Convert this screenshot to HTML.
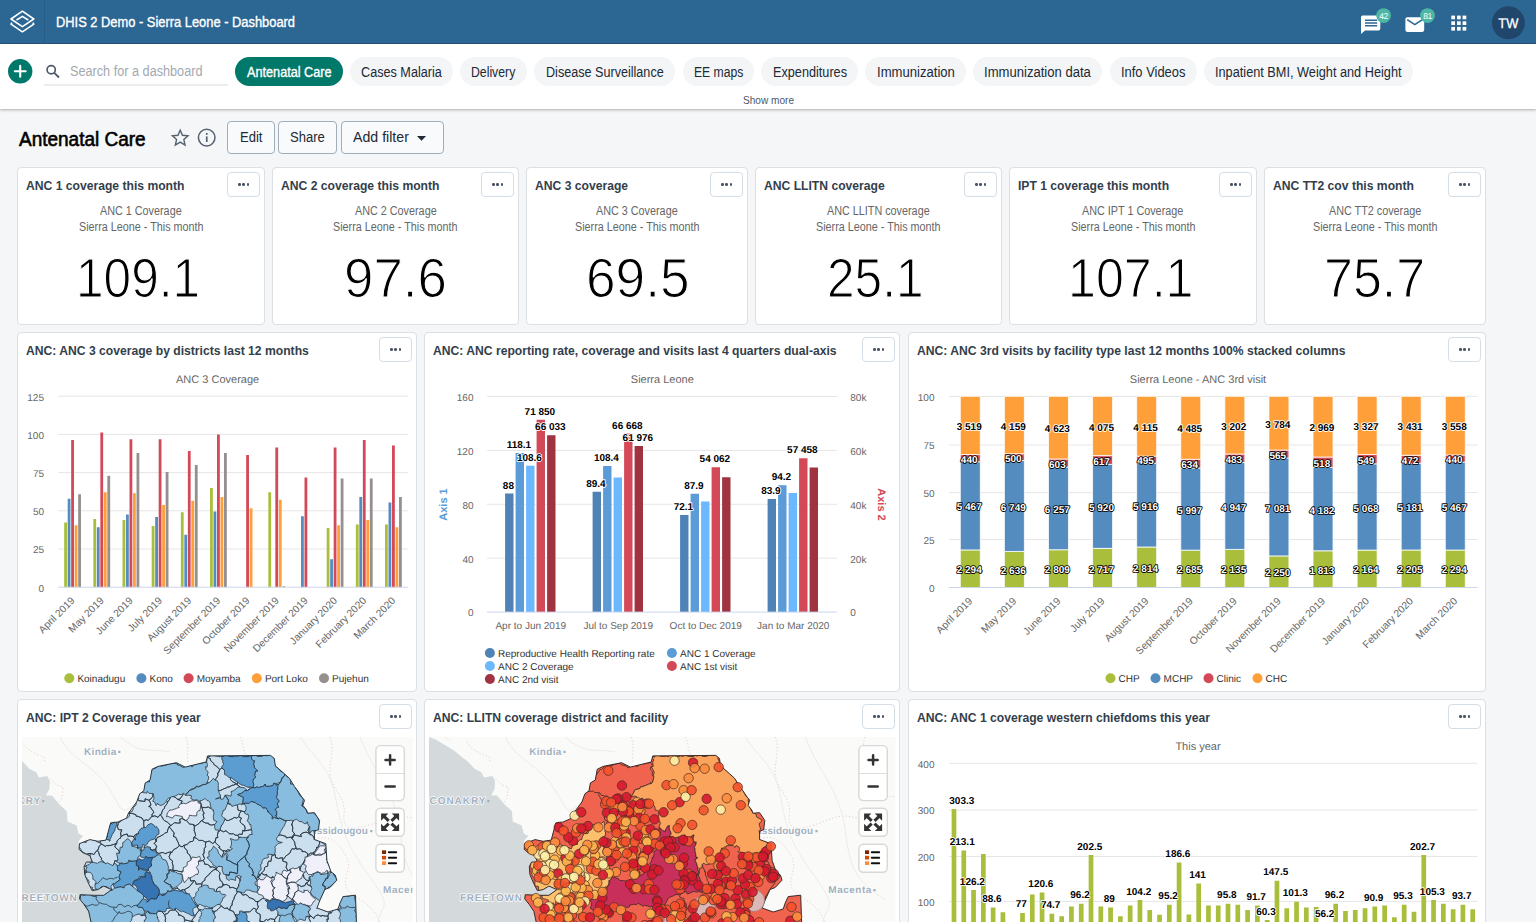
<!DOCTYPE html>
<html lang="en"><head><meta charset="utf-8"><title>DHIS 2 Demo - Sierra Leone - Dashboard</title>
<style>
*{box-sizing:border-box;margin:0;padding:0}
html,body{width:1536px;height:922px;overflow:hidden;background:#f4f6f8;font-family:"Liberation Sans",sans-serif;color:#212934}
.abs{position:absolute}
.t{position:absolute;white-space:nowrap;line-height:1;transform-origin:0 0;display:block}
#hdr{position:absolute;left:0;top:0;width:1536px;height:44px;background:#2c6693;border-bottom:1px solid #28587f;color:#fff}
#hdr .logo{position:absolute;left:0;top:0;width:45px;height:43px;border-right:1px solid #285d87}
#bar{position:absolute;left:0;top:44px;width:1536px;height:65px;background:#fff;box-shadow:0 1px 3px rgba(0,0,0,0.28),0 0 1px rgba(0,0,0,0.2)}
.chip{position:absolute;top:57px;height:29px;border-radius:15px;background:#f3f5f7}
.chip.sel{background:#00796b}
.btn{position:absolute;top:121px;height:33px;border:1px solid #a0adba;border-radius:4px;background:#f9fafb}
.card{position:absolute;background:#fff;border:1px solid #dcdfe3;border-radius:4px;overflow:hidden}
.mb{position:absolute;width:33px;height:25px;border:1px solid #d5dde5;border-radius:4px;background:#fff}
.mb i{position:absolute;top:10.3px;width:2.4px;height:2.4px;border-radius:1.2px;background:#4a5565}
svg{position:absolute;overflow:visible}
svg text{font-family:"Liberation Sans",sans-serif;text-rendering:geometricPrecision}
</style></head>
<body>
<header>
<div id="hdr"><div class="logo"></div></div>
<svg width="44" height="44" viewBox="0 0 44 44" style="left:0;top:0">
  <g fill="none" stroke="#fff" stroke-width="1.6" stroke-linejoin="round" stroke-linecap="round">
    <path d="M22.4 11.2 L33.8 19 L22.4 26.6 L11 19 Z"/>
    <path d="M17 19.7 L22.4 16.4 L27.8 19.7"/>
    <path d="M11.6 23.2 L11 24.1 L22.4 31.8 L33.8 24.1 L33.2 23.2"/>
  </g>
</svg>
<span class="t" style="left:55.6px;top:14.95px;font-size:14px;color:#fff;transform:scaleX(0.9196);-webkit-text-stroke:0.35px;">DHIS 2 Demo - Sierra Leone - Dashboard</span>
<svg width="196" height="44" viewBox="1340 0 196 44" style="left:1340px;top:0">
  <path d="M1362.6 15.6 h16 a1.7 1.7 0 0 1 1.7 1.7 v11.4 a1.7 1.7 0 0 1 -1.7 1.7 h-13.6 l-4 3.6 v-16.7 a1.7 1.7 0 0 1 1.6 -1.7 z" fill="#fff"/>
  <g stroke="#2c6693" stroke-width="1.5"><path d="M1365 20.2h12.2M1365 23h12.2M1365 25.8h12.2"/></g>
  <circle cx="1383.6" cy="15.6" r="7.4" fill="#4db6a4"/>
  <text x="1383.6" y="18.7" font-size="8.5" fill="#fff" text-anchor="middle" letter-spacing="-0.4">42</text>
  <rect x="1405.4" y="17.2" width="18.8" height="14.7" rx="1.8" fill="#fff"/>
  <path d="M1407.2 19.6 L1414.8 24.6 L1422.4 19.6" fill="none" stroke="#2c6693" stroke-width="1.7"/>
  <circle cx="1427.5" cy="15.6" r="7.4" fill="#4db6a4"/>
  <text x="1427.5" y="18.7" font-size="8.5" fill="#fff" text-anchor="middle" letter-spacing="-0.4">81</text>
  <g fill="#fff">
    <rect x="1451.3" y="15.6" width="3.7" height="3.7"/><rect x="1457" y="15.6" width="3.7" height="3.7"/><rect x="1462.6" y="15.6" width="3.7" height="3.7"/>
    <rect x="1451.3" y="21.3" width="3.7" height="3.7"/><rect x="1457" y="21.3" width="3.7" height="3.7"/><rect x="1462.6" y="21.3" width="3.7" height="3.7"/>
    <rect x="1451.3" y="26.9" width="3.7" height="3.7"/><rect x="1457" y="26.9" width="3.7" height="3.7"/><rect x="1462.6" y="26.9" width="3.7" height="3.7"/>
  </g>
  <circle cx="1508.4" cy="22.8" r="16.5" fill="#20476b"/>
  <text x="1498.3" y="27.8" font-size="14" fill="#fff" stroke="#fff" stroke-width="0.3" textLength="20" lengthAdjust="spacingAndGlyphs">TW</text>
</svg>
</header>
<nav>
<div id="bar"></div>
<svg width="230" height="65" viewBox="0 44 230 65" style="left:0;top:44px">
  <circle cx="20.2" cy="71.3" r="12.2" fill="#00796b"/>
  <path d="M20.2 65.9v10.8M14.8 71.3h10.8" stroke="#fff" stroke-width="2.1" stroke-linecap="round" fill="none"/>
  <circle cx="51.2" cy="69.7" r="4.1" fill="none" stroke="#4f5b6b" stroke-width="1.7"/>
  <path d="M54.3 72.8 L59 77.5" stroke="#4f5b6b" stroke-width="1.9" fill="none"/>
  <rect x="44" y="83.9" width="184" height="2" fill="#ececec"/>
</svg>
<span class="t" style="left:70px;top:64.25px;font-size:14px;color:#a3a9b0;transform:scaleX(0.9055);">Search for a dashboard</span>
<div class="chip sel" style="left:235px;width:108px"></div>
<span class="t" style="left:246.7px;top:64.65px;font-size:14px;color:#fff;transform:scaleX(0.9057);-webkit-text-stroke:0.35px;">Antenatal Care</span>
<div class="chip" style="left:350px;width:103px"></div>
<span class="t" style="left:361.1px;top:64.65px;font-size:14px;color:#212934;transform:scaleX(0.9030);">Cases Malaria</span>
<div class="chip" style="left:460px;width:67px"></div>
<span class="t" style="left:471.35px;top:64.65px;font-size:14px;color:#212934;transform:scaleX(0.8759);">Delivery</span>
<div class="chip" style="left:534.4px;width:140.7px"></div>
<span class="t" style="left:545.9px;top:64.65px;font-size:14px;color:#212934;transform:scaleX(0.9003);">Disease Surveillance</span>
<div class="chip" style="left:682.6px;width:71.3px"></div>
<span class="t" style="left:693.55px;top:64.65px;font-size:14px;color:#212934;transform:scaleX(0.8695);">EE maps</span>
<div class="chip" style="left:761.4px;width:96.7px"></div>
<span class="t" style="left:772.75px;top:64.65px;font-size:14px;color:#212934;transform:scaleX(0.9055);">Expenditures</span>
<div class="chip" style="left:865.3px;width:100.3px"></div>
<span class="t" style="left:876.5px;top:64.65px;font-size:14px;color:#212934;transform:scaleX(0.9356);">Immunization</span>
<div class="chip" style="left:972.6px;width:129.7px"></div>
<span class="t" style="left:984px;top:64.65px;font-size:14px;color:#212934;transform:scaleX(0.9344);">Immunization data</span>
<div class="chip" style="left:1109.7px;width:87.2px"></div>
<span class="t" style="left:1121.1px;top:64.65px;font-size:14px;color:#212934;transform:scaleX(0.9227);">Info Videos</span>
<div class="chip" style="left:1204.1px;width:208.7px"></div>
<span class="t" style="left:1215.2px;top:64.65px;font-size:14px;color:#212934;transform:scaleX(0.9089);">Inpatient BMI, Weight and Height</span>
<span class="t" style="left:742.5px;top:95.19px;font-size:11px;color:#4a5768;transform:scaleX(0.9166);">Show more</span>
</nav>
<div class="titlebar">
<span class="t" style="left:18.8px;top:128.87px;font-size:20px;color:#000;transform:scaleX(0.9489);-webkit-text-stroke:0.6px #000;">Antenatal Care</span>
<svg width="60" height="32" viewBox="166 122 60 32" style="left:166px;top:122px">
  <path d="M180.2 130.2 l2.25 5.1 5.55 0.55 -4.15 3.7 1.2 5.45 -4.85 -2.85 -4.85 2.85 1.2 -5.45 -4.15 -3.7 5.55 -0.55 z" fill="none" stroke="#56616f" stroke-width="1.4" stroke-linejoin="miter"/>
  <circle cx="206.7" cy="137.6" r="8.3" fill="none" stroke="#56616f" stroke-width="1.5"/>
  <rect x="205.9" y="136.4" width="1.7" height="5.6" fill="#56616f"/>
  <rect x="205.9" y="133.0" width="1.7" height="1.8" fill="#56616f"/>
</svg>
<div class="btn" style="left:227px;width:48px"></div>
<span class="t" style="left:239.6px;top:130.35px;font-size:14px;color:#212934;transform:scaleX(0.9285);">Edit</span>
<div class="btn" style="left:278px;width:59px"></div>
<span class="t" style="left:290.2px;top:130.35px;font-size:14px;color:#212934;transform:scaleX(0.9315);">Share</span>
<div class="btn" style="left:341px;width:103px"></div>
<span class="t" style="left:353.1px;top:130.35px;font-size:14px;color:#212934;transform:scaleX(1.0118);">Add filter</span>
<svg width="10" height="6" viewBox="0 0 10 6" style="left:416.6px;top:135.7px"><path d="M0 0h9L4.5 4.7z" fill="#212934"/></svg>
</div>
<main>
<section>
<div class="card" style="left:17px;top:167px;width:248px;height:158px"></div>
<span class="t" style="left:25.6px;top:178.77px;font-size:13.5px;font-weight:bold;color:#333e4b;transform:scaleX(0.8990);">ANC 1 coverage this month</span>
<div class="mb" style="left:227px;top:172px"><i style="left:10.2px"></i><i style="left:14.4px"></i><i style="left:18.6px"></i></div>
<span class="t" style="left:100.18px;top:204.64px;font-size:12px;color:#666;transform:scaleX(0.9000);">ANC 1 Coverage</span>
<span class="t" style="left:78.7px;top:220.74px;font-size:12px;color:#666;transform:scaleX(0.8995);">Sierra Leone - This month</span>
<span class="t" style="left:75.69px;top:249.6px;font-size:56px;color:#000;transform:scaleX(0.8850);-webkit-text-stroke:1.2px #fff;">109.1</span>
</section>
<section>
<div class="card" style="left:272px;top:167px;width:247px;height:158px"></div>
<span class="t" style="left:280.6px;top:178.77px;font-size:13.5px;font-weight:bold;color:#333e4b;transform:scaleX(0.8990);">ANC 2 coverage this month</span>
<div class="mb" style="left:481px;top:172px"><i style="left:10.2px"></i><i style="left:14.4px"></i><i style="left:18.6px"></i></div>
<span class="t" style="left:354.68px;top:204.64px;font-size:12px;color:#666;transform:scaleX(0.9000);">ANC 2 Coverage</span>
<span class="t" style="left:333.2px;top:220.74px;font-size:12px;color:#666;transform:scaleX(0.8995);">Sierra Leone - This month</span>
<span class="t" style="left:344.03px;top:249.6px;font-size:56px;color:#000;transform:scaleX(0.9434);-webkit-text-stroke:1.2px #fff;">97.6</span>
</section>
<section>
<div class="card" style="left:526px;top:167px;width:222px;height:158px"></div>
<span class="t" style="left:534.6px;top:178.77px;font-size:13.5px;font-weight:bold;color:#333e4b;transform:scaleX(0.8990);">ANC 3 coverage</span>
<div class="mb" style="left:710px;top:172px"><i style="left:10.2px"></i><i style="left:14.4px"></i><i style="left:18.6px"></i></div>
<span class="t" style="left:596.18px;top:204.64px;font-size:12px;color:#666;transform:scaleX(0.9000);">ANC 3 Coverage</span>
<span class="t" style="left:574.7px;top:220.74px;font-size:12px;color:#666;transform:scaleX(0.8995);">Sierra Leone - This month</span>
<span class="t" style="left:586.22px;top:249.6px;font-size:56px;color:#000;transform:scaleX(0.9505);-webkit-text-stroke:1.2px #fff;">69.5</span>
</section>
<section>
<div class="card" style="left:755px;top:167px;width:247px;height:158px"></div>
<span class="t" style="left:763.6px;top:178.77px;font-size:13.5px;font-weight:bold;color:#333e4b;transform:scaleX(0.8990);">ANC LLITN coverage</span>
<div class="mb" style="left:964px;top:172px"><i style="left:10.2px"></i><i style="left:14.4px"></i><i style="left:18.6px"></i></div>
<span class="t" style="left:827.18px;top:204.64px;font-size:12px;color:#666;transform:scaleX(0.9000);">ANC LLITN coverage</span>
<span class="t" style="left:816.2px;top:220.74px;font-size:12px;color:#666;transform:scaleX(0.8995);">Sierra Leone - This month</span>
<span class="t" style="left:827.22px;top:249.6px;font-size:56px;color:#000;transform:scaleX(0.8850);-webkit-text-stroke:1.2px #fff;">25.1</span>
</section>
<section>
<div class="card" style="left:1009px;top:167px;width:248px;height:158px"></div>
<span class="t" style="left:1017.6px;top:178.77px;font-size:13.5px;font-weight:bold;color:#333e4b;transform:scaleX(0.8990);">IPT 1 coverage this month</span>
<div class="mb" style="left:1219px;top:172px"><i style="left:10.2px"></i><i style="left:14.4px"></i><i style="left:18.6px"></i></div>
<span class="t" style="left:1082.38px;top:204.64px;font-size:12px;color:#666;transform:scaleX(0.9000);">ANC IPT 1 Coverage</span>
<span class="t" style="left:1070.7px;top:220.74px;font-size:12px;color:#666;transform:scaleX(0.8995);">Sierra Leone - This month</span>
<span class="t" style="left:1067.54px;top:249.6px;font-size:56px;color:#000;transform:scaleX(0.8956);-webkit-text-stroke:1.2px #fff;">107.1</span>
</section>
<section>
<div class="card" style="left:1264px;top:167px;width:222px;height:158px"></div>
<span class="t" style="left:1272.6px;top:178.77px;font-size:13.5px;font-weight:bold;color:#333e4b;transform:scaleX(0.8990);">ANC TT2 cov this month</span>
<div class="mb" style="left:1448px;top:172px"><i style="left:10.2px"></i><i style="left:14.4px"></i><i style="left:18.6px"></i></div>
<span class="t" style="left:1328.88px;top:204.64px;font-size:12px;color:#666;transform:scaleX(0.9000);">ANC TT2 coverage</span>
<span class="t" style="left:1312.7px;top:220.74px;font-size:12px;color:#666;transform:scaleX(0.8995);">Sierra Leone - This month</span>
<span class="t" style="left:1323.55px;top:249.6px;font-size:56px;color:#000;transform:scaleX(0.9275);-webkit-text-stroke:1.2px #fff;">75.7</span>
</section>
<section><div class="card" style="left:17px;top:332px;width:400px;height:360px"></div>
<span class="t" style="left:25.6px;top:343.77px;font-size:13.5px;font-weight:bold;color:#333e4b;transform:scaleX(0.8990);">ANC: ANC 3 coverage by districts last 12 months</span>
<div class="mb" style="left:379px;top:337px"><i style="left:10.2px"></i><i style="left:14.4px"></i><i style="left:18.6px"></i></div>
<svg width="1536" height="922" viewBox="0 0 1536 922" style="left:0;top:0">
<text x="217.6" y="383" font-size="11" fill="#666666" text-anchor="middle">ANC 3 Coverage</text>
<path d="M58 549H408M58 510.8H408M58 472.6H408M58 434.4H408M58 396.2H408" stroke="#e6e6e6" stroke-width="1" fill="none"/>
<g font-size="10" fill="#666666" text-anchor="end"><text x="44" y="591.5">0</text><text x="44" y="553.3">25</text><text x="44" y="515.1">50</text><text x="44" y="476.9">75</text><text x="44" y="438.7">100</text><text x="44" y="400.5">125</text></g>
<path d="M64.18 587.2v-64.63h2.8v64.63zM93.35 587.2v-68.15h2.8v68.15zM122.52 587.2v-67.23h2.8v67.23zM151.68 587.2v-61.12h2.8v61.12zM180.85 587.2v-74.87h2.8v74.87zM210.02 587.2v-99.17h2.8v99.17zM268.35 587.2v-94.89h2.8v94.89zM326.68 587.2v-59.13h2.8v59.13zM355.85 587.2v-62.65h2.8v62.65zM385.02 587.2v-62.65h2.8v62.65z" fill="#a9be3b"/>
<path d="M67.68 587.2v-88.47h2.8v88.47zM96.85 587.2v-59.9h2.8v59.9zM126.02 587.2v-72.73h2.8v72.73zM155.18 587.2v-70.14h2.8v70.14zM184.35 587.2v-52.41h2.8v52.41zM213.52 587.2v-75.79h2.8v75.79zM301.02 587.2v-71.05h2.8v71.05zM330.18 587.2v-27.96h2.8v27.96zM359.35 587.2v-90.15h2.8v90.15zM388.52 587.2v-84.65h2.8v84.65z" fill="#558cc0"/>
<path d="M71.18 587.2v-147.15h2.8v147.15zM100.35 587.2v-154.79h2.8v154.79zM129.52 587.2v-148.06h2.8v148.06zM158.68 587.2v-148.06h2.8v148.06zM187.85 587.2v-136.14h2.8v136.14zM217.02 587.2v-152.65h2.8v152.65zM246.18 587.2v-132.32h2.8v132.32zM275.35 587.2v-139.81h2.8v139.81zM304.52 587.2v-109.71h2.8v109.71zM333.68 587.2v-139.81h2.8v139.81zM362.85 587.2v-147.15h2.8v147.15zM392.02 587.2v-141.65h2.8v141.65z" fill="#d34957"/>
<path d="M74.68 587.2v-62.04h2.8v62.04zM103.85 587.2v-94.89h2.8v94.89zM133.02 587.2v-93.97h2.8v93.97zM162.18 587.2v-82.21h2.8v82.21zM191.35 587.2v-86.48h2.8v86.48zM220.52 587.2v-90.15h2.8v90.15zM249.68 587.2v-79h2.8v79zM278.85 587.2v-87.55h2.8v87.55zM337.18 587.2v-62.04h2.8v62.04zM366.35 587.2v-67.23h2.8v67.23zM395.52 587.2v-60.05h2.8v60.05z" fill="#ff9f3a"/>
<path d="M78.18 587.2v-93.06h2.8v93.06zM107.35 587.2v-111.39h2.8v111.39zM136.52 587.2v-134.31h2.8v134.31zM165.68 587.2v-115.21h2.8v115.21zM194.85 587.2v-122.24h2.8v122.24zM224.02 587.2v-134.31h2.8v134.31zM282.35 587.2v-0.92h2.8v0.92zM340.68 587.2v-108.79h2.8v108.79zM369.85 587.2v-108.79h2.8v108.79zM399.02 587.2v-90.15h2.8v90.15z" fill="#968f8f"/>
<path d="M58 587.2H408" stroke="#ccd6eb" stroke-width="1" fill="none"/>
<g font-size="10.25" fill="#666666" text-anchor="end"><text transform="translate(75.28 601.3) rotate(-45)">April 2019</text><text transform="translate(104.45 601.3) rotate(-45)">May 2019</text><text transform="translate(133.62 601.3) rotate(-45)">June 2019</text><text transform="translate(162.78 601.3) rotate(-45)">July 2019</text><text transform="translate(191.95 601.3) rotate(-45)">August 2019</text><text transform="translate(221.12 601.3) rotate(-45)">September 2019</text><text transform="translate(250.28 601.3) rotate(-45)">October 2019</text><text transform="translate(279.45 601.3) rotate(-45)">November 2019</text><text transform="translate(308.62 601.3) rotate(-45)">December 2019</text><text transform="translate(337.78 601.3) rotate(-45)">January 2020</text><text transform="translate(366.95 601.3) rotate(-45)">February 2020</text><text transform="translate(396.12 601.3) rotate(-45)">March 2020</text></g>
<g font-size="10" fill="#333333"><circle cx="69.3" cy="678.2" r="5" fill="#a9be3b"/><text x="77.4" y="682.1">Koinadugu</text><circle cx="141.4" cy="678.2" r="5" fill="#558cc0"/><text x="149.5" y="682.1">Kono</text><circle cx="188.6" cy="678.2" r="5" fill="#d34957"/><text x="196.7" y="682.1">Moyamba</text><circle cx="256.8" cy="678.2" r="5" fill="#ff9f3a"/><text x="264.9" y="682.1">Port Loko</text><circle cx="324" cy="678.2" r="5" fill="#968f8f"/><text x="332.1" y="682.1">Pujehun</text></g>
</svg></section>
<section><div class="card" style="left:424px;top:332px;width:476px;height:360px"></div>
<span class="t" style="left:432.6px;top:343.77px;font-size:13.5px;font-weight:bold;color:#333e4b;transform:scaleX(0.8990);">ANC: ANC reporting rate, coverage and visits last 4 quarters dual-axis</span>
<div class="mb" style="left:862px;top:337px"><i style="left:10.2px"></i><i style="left:14.4px"></i><i style="left:18.6px"></i></div>
<svg width="1536" height="922" viewBox="0 0 1536 922" style="left:0;top:0">
<text x="662.3" y="383" font-size="11" fill="#666666" text-anchor="middle">Sierra Leone</text>
<path d="M487 558.2H837M487 504.3H837M487 450.4H837M487 396.5H837" stroke="#e6e6e6" stroke-width="1" fill="none"/>
<g font-size="10" fill="#666666" text-anchor="end"><text x="473.5" y="616.4">0</text><text x="473.5" y="562.5">40</text><text x="473.5" y="508.6">80</text><text x="473.5" y="454.7">120</text><text x="473.5" y="400.8">160</text></g>
<g font-size="10" fill="#666666" text-anchor="start"><text x="850.3" y="616.4">0</text><text x="850.3" y="562.5">20k</text><text x="850.3" y="508.6">40k</text><text x="850.3" y="454.7">60k</text><text x="850.3" y="400.8">80k</text></g>
<path d="M505.1 612.1v-118.58h8.4v118.58zM592.6 612.1v-120.47h8.4v120.47zM680.1 612.1v-97.15h8.4v97.15zM767.6 612.1v-113.06h8.4v113.06z" fill="#4f83b6"/>
<path d="M515.6 612.1v-159.14h8.4v159.14zM603.1 612.1v-146.07h8.4v146.07zM690.6 612.1v-118.45h8.4v118.45zM778.1 612.1v-126.93h8.4v126.93z" fill="#5b9bd8"/>
<path d="M526.1 612.1v-146.34h8.4v146.34zM613.6 612.1v-134.62h8.4v134.62zM701.1 612.1v-110.63h8.4v110.63zM788.6 612.1v-118.98h8.4v118.98z" fill="#6cb8ff"/>
<path d="M536.6 612.1v-192.47h8.4v192.47zM624.1 612.1v-178.59h8.4v178.59zM711.6 612.1v-144.82h8.4v144.82zM799.1 612.1v-153.92h8.4v153.92z" fill="#d34957"/>
<path d="M547.1 612.1v-176.89h8.4v176.89zM634.6 612.1v-166.02h8.4v166.02zM722.1 612.1v-134.75h8.4v134.75zM809.6 612.1v-144.66h8.4v144.66z" fill="#9f3340"/>
<path d="M487 612.1H837" stroke="#ccd6eb" stroke-width="1" fill="none"/>
<g font-size="10" font-weight="bold"><text x="508.4" y="488.52" text-anchor="middle" fill="#000" stroke="#fff" stroke-width="1.7" stroke-linejoin="round" paint-order="stroke">88</text><text x="595.9" y="486.63" text-anchor="middle" fill="#000" stroke="#fff" stroke-width="1.7" stroke-linejoin="round" paint-order="stroke">89.4</text><text x="683.4" y="509.95" text-anchor="middle" fill="#000" stroke="#fff" stroke-width="1.7" stroke-linejoin="round" paint-order="stroke">72.1</text><text x="770.9" y="494.04" text-anchor="middle" fill="#000" stroke="#fff" stroke-width="1.7" stroke-linejoin="round" paint-order="stroke">83.9</text><text x="518.9" y="447.96" text-anchor="middle" fill="#000" stroke="#fff" stroke-width="1.7" stroke-linejoin="round" paint-order="stroke">118.1</text><text x="606.4" y="461.03" text-anchor="middle" fill="#000" stroke="#fff" stroke-width="1.7" stroke-linejoin="round" paint-order="stroke">108.4</text><text x="693.9" y="488.65" text-anchor="middle" fill="#000" stroke="#fff" stroke-width="1.7" stroke-linejoin="round" paint-order="stroke">87.9</text><text x="781.4" y="480.17" text-anchor="middle" fill="#000" stroke="#fff" stroke-width="1.7" stroke-linejoin="round" paint-order="stroke">94.2</text><text x="529.4" y="460.76" text-anchor="middle" fill="#000" stroke="#fff" stroke-width="1.7" stroke-linejoin="round" paint-order="stroke">108.6</text><text x="539.9" y="414.63" text-anchor="middle" fill="#000" stroke="#fff" stroke-width="1.7" stroke-linejoin="round" paint-order="stroke">71 850</text><text x="627.4" y="428.51" text-anchor="middle" fill="#000" stroke="#fff" stroke-width="1.7" stroke-linejoin="round" paint-order="stroke">66 668</text><text x="714.9" y="462.28" text-anchor="middle" fill="#000" stroke="#fff" stroke-width="1.7" stroke-linejoin="round" paint-order="stroke">54 062</text><text x="802.4" y="453.18" text-anchor="middle" fill="#000" stroke="#fff" stroke-width="1.7" stroke-linejoin="round" paint-order="stroke">57 458</text><text x="550.4" y="430.21" text-anchor="middle" fill="#000" stroke="#fff" stroke-width="1.7" stroke-linejoin="round" paint-order="stroke">66 033</text><text x="637.9" y="441.08" text-anchor="middle" fill="#000" stroke="#fff" stroke-width="1.7" stroke-linejoin="round" paint-order="stroke">61 976</text></g>
<g font-size="10" fill="#666666" text-anchor="middle"><text x="530.75" y="629.0">Apr to Jun 2019</text><text x="618.25" y="629.0">Jul to Sep 2019</text><text x="705.75" y="629.0">Oct to Dec 2019</text><text x="793.25" y="629.0">Jan to Mar 2020</text></g>
<text transform="translate(446.5 504.5) rotate(-90)" font-size="11" font-weight="bold" fill="#5b9bd8" text-anchor="middle">Axis 1</text>
<text transform="translate(878 504.5) rotate(90)" font-size="11" font-weight="bold" fill="#d34957" text-anchor="middle">Axis 2</text>
<g font-size="10" fill="#333333"><circle cx="489.9" cy="653" r="5" fill="#4f83b6"/><text x="498" y="656.9">Reproductive Health Reporting rate</text><circle cx="671.9" cy="653" r="5" fill="#5b9bd8"/><text x="680" y="656.9">ANC 1 Coverage</text></g>
<g font-size="10" fill="#333333"><circle cx="489.9" cy="666" r="5" fill="#6cb8ff"/><text x="498" y="669.9">ANC 2 Coverage</text><circle cx="671.9" cy="666" r="5" fill="#d34957"/><text x="680" y="669.9">ANC 1st visit</text></g>
<g font-size="10" fill="#333333"><circle cx="489.9" cy="679" r="5" fill="#9f3340"/><text x="498" y="682.9">ANC 2nd visit</text></g>
</svg></section>
<section><div class="card" style="left:908px;top:332px;width:578px;height:360px"></div>
<span class="t" style="left:916.6px;top:343.77px;font-size:13.5px;font-weight:bold;color:#333e4b;transform:scaleX(0.8990);">ANC: ANC 3rd visits by facility type last 12 months 100% stacked columns</span>
<div class="mb" style="left:1448px;top:337px"><i style="left:10.2px"></i><i style="left:14.4px"></i><i style="left:18.6px"></i></div>
<svg width="1536" height="922" viewBox="0 0 1536 922" style="left:0;top:0">
<text x="1198" y="383" font-size="11" fill="#666666" text-anchor="middle">Sierra Leone - ANC 3rd visit</text>
<path d="M949.1 539.5H1477.6M949.1 492.6H1477.6M949.1 445H1477.6M949.1 396.35H1477.6" stroke="#e6e6e6" stroke-width="1" fill="none"/>
<g font-size="10" fill="#666666" text-anchor="end"><text x="934.5" y="591.8">0</text><text x="934.5" y="543.8">25</text><text x="934.5" y="496.9">50</text><text x="934.5" y="449.3">75</text><text x="934.5" y="400.65">100</text></g>
<path d="M960.3 587.5v-37.58h20v37.58zM1004.39 587.5v-36.04h20v36.04zM1048.48 587.5v-37.74h20v37.74zM1092.57 587.5v-39.14h20v39.14zM1136.66 587.5v-40.5h20v40.5zM1180.75 587.5v-37.35h20v37.35zM1224.84 587.5v-38.07h20v38.07zM1268.93 587.5v-31.58h20v31.58zM1313.02 587.5v-36.71h20v36.71zM1357.11 587.5v-37.4h20v37.4zM1401.2 587.5v-37.5h20v37.5zM1445.29 587.5v-37.46h20v37.46z" fill="#a9be3b" stroke="#fff" stroke-width="0.8"/>
<path d="M960.3 549.92v-88.2h20v88.2zM1004.39 551.46v-90.9h20v90.9zM1048.48 549.76v-82.74h20v82.74zM1092.57 548.36v-83.94h20v83.94zM1136.66 547v-83.8h20v83.8zM1180.75 550.15v-82.12h20v82.12zM1224.84 549.43v-86.86h20v86.86zM1268.93 555.92v-97.99h20v97.99zM1313.02 550.79v-83.37h20v83.37zM1357.11 550.1v-86.26h20v86.26zM1401.2 550v-86.77h20v86.77zM1445.29 550.04v-87.91h20v87.91z" fill="#558cc0" stroke="#fff" stroke-width="0.8"/>
<path d="M960.3 461.72v-7.15h20v7.15zM1004.39 460.56v-6.78h20v6.78zM1048.48 467.02v-8.03h20v8.03zM1092.57 464.42v-8.81h20v8.81zM1136.66 463.2v-7.07h20v7.07zM1180.75 468.02v-8.75h20v8.75zM1224.84 462.56v-8.54h20v8.54zM1268.93 457.93v-7.86h20v7.86zM1313.02 467.42v-10.4h20v10.4zM1357.11 463.84v-9.41h20v9.41zM1401.2 463.23v-7.96h20v7.96zM1445.29 462.14v-7.12h20v7.12z" fill="#d34957" stroke="#fff" stroke-width="0.8"/>
<path d="M960.3 454.57v-58.22h20v58.22zM1004.39 453.79v-57.44h20v57.44zM1048.48 458.99v-62.64h20v62.64zM1092.57 455.61v-59.26h20v59.26zM1136.66 456.13v-59.78h20v59.78zM1180.75 459.28v-62.93h20v62.93zM1224.84 454.02v-57.67h20v57.67zM1268.93 450.07v-53.72h20v53.72zM1313.02 457.02v-60.67h20v60.67zM1357.11 454.43v-58.08h20v58.08zM1401.2 455.27v-58.92h20v58.92zM1445.29 455.01v-58.66h20v58.66z" fill="#ff9f3a" stroke="#fff" stroke-width="0.8"/>
<path d="M949.1 587.5H1477.6" stroke="#ccd6eb" stroke-width="1" fill="none"/>
<g font-size="10" font-weight="bold"><text x="969.2" y="573.31" text-anchor="middle" fill="#fff" stroke="#000" stroke-width="1.7" stroke-linejoin="round" paint-order="stroke">2 294</text><text x="969.2" y="510.42" text-anchor="middle" fill="#fff" stroke="#000" stroke-width="1.7" stroke-linejoin="round" paint-order="stroke">5 467</text><text x="969.2" y="462.74" text-anchor="middle" fill="#fff" stroke="#000" stroke-width="1.7" stroke-linejoin="round" paint-order="stroke">440</text><text x="969.2" y="430.06" text-anchor="middle" fill="#000" stroke="#fff" stroke-width="1.7" stroke-linejoin="round" paint-order="stroke">3 519</text><text x="1013.29" y="574.08" text-anchor="middle" fill="#fff" stroke="#000" stroke-width="1.7" stroke-linejoin="round" paint-order="stroke">2 636</text><text x="1013.29" y="510.61" text-anchor="middle" fill="#fff" stroke="#000" stroke-width="1.7" stroke-linejoin="round" paint-order="stroke">6 749</text><text x="1013.29" y="461.77" text-anchor="middle" fill="#fff" stroke="#000" stroke-width="1.7" stroke-linejoin="round" paint-order="stroke">500</text><text x="1013.29" y="429.67" text-anchor="middle" fill="#000" stroke="#fff" stroke-width="1.7" stroke-linejoin="round" paint-order="stroke">4 159</text><text x="1057.38" y="573.23" text-anchor="middle" fill="#fff" stroke="#000" stroke-width="1.7" stroke-linejoin="round" paint-order="stroke">2 809</text><text x="1057.38" y="512.99" text-anchor="middle" fill="#fff" stroke="#000" stroke-width="1.7" stroke-linejoin="round" paint-order="stroke">6 257</text><text x="1057.38" y="467.6" text-anchor="middle" fill="#fff" stroke="#000" stroke-width="1.7" stroke-linejoin="round" paint-order="stroke">603</text><text x="1057.38" y="432.27" text-anchor="middle" fill="#000" stroke="#fff" stroke-width="1.7" stroke-linejoin="round" paint-order="stroke">4 623</text><text x="1101.47" y="572.53" text-anchor="middle" fill="#fff" stroke="#000" stroke-width="1.7" stroke-linejoin="round" paint-order="stroke">2 717</text><text x="1101.47" y="510.99" text-anchor="middle" fill="#fff" stroke="#000" stroke-width="1.7" stroke-linejoin="round" paint-order="stroke">5 920</text><text x="1101.47" y="464.62" text-anchor="middle" fill="#fff" stroke="#000" stroke-width="1.7" stroke-linejoin="round" paint-order="stroke">617</text><text x="1101.47" y="430.58" text-anchor="middle" fill="#000" stroke="#fff" stroke-width="1.7" stroke-linejoin="round" paint-order="stroke">4 075</text><text x="1145.56" y="571.85" text-anchor="middle" fill="#fff" stroke="#000" stroke-width="1.7" stroke-linejoin="round" paint-order="stroke">2 814</text><text x="1145.56" y="509.7" text-anchor="middle" fill="#fff" stroke="#000" stroke-width="1.7" stroke-linejoin="round" paint-order="stroke">5 916</text><text x="1145.56" y="464.27" text-anchor="middle" fill="#fff" stroke="#000" stroke-width="1.7" stroke-linejoin="round" paint-order="stroke">495</text><text x="1145.56" y="430.84" text-anchor="middle" fill="#000" stroke="#fff" stroke-width="1.7" stroke-linejoin="round" paint-order="stroke">4 115</text><text x="1189.65" y="573.42" text-anchor="middle" fill="#fff" stroke="#000" stroke-width="1.7" stroke-linejoin="round" paint-order="stroke">2 685</text><text x="1189.65" y="513.68" text-anchor="middle" fill="#fff" stroke="#000" stroke-width="1.7" stroke-linejoin="round" paint-order="stroke">5 997</text><text x="1189.65" y="468.25" text-anchor="middle" fill="#fff" stroke="#000" stroke-width="1.7" stroke-linejoin="round" paint-order="stroke">634</text><text x="1189.65" y="432.41" text-anchor="middle" fill="#000" stroke="#fff" stroke-width="1.7" stroke-linejoin="round" paint-order="stroke">4 485</text><text x="1233.74" y="573.06" text-anchor="middle" fill="#fff" stroke="#000" stroke-width="1.7" stroke-linejoin="round" paint-order="stroke">2 135</text><text x="1233.74" y="510.6" text-anchor="middle" fill="#fff" stroke="#000" stroke-width="1.7" stroke-linejoin="round" paint-order="stroke">4 947</text><text x="1233.74" y="462.89" text-anchor="middle" fill="#fff" stroke="#000" stroke-width="1.7" stroke-linejoin="round" paint-order="stroke">483</text><text x="1233.74" y="429.79" text-anchor="middle" fill="#000" stroke="#fff" stroke-width="1.7" stroke-linejoin="round" paint-order="stroke">3 202</text><text x="1277.83" y="576.31" text-anchor="middle" fill="#fff" stroke="#000" stroke-width="1.7" stroke-linejoin="round" paint-order="stroke">2 250</text><text x="1277.83" y="511.53" text-anchor="middle" fill="#fff" stroke="#000" stroke-width="1.7" stroke-linejoin="round" paint-order="stroke">7 081</text><text x="1277.83" y="458.6" text-anchor="middle" fill="#fff" stroke="#000" stroke-width="1.7" stroke-linejoin="round" paint-order="stroke">565</text><text x="1277.83" y="427.81" text-anchor="middle" fill="#000" stroke="#fff" stroke-width="1.7" stroke-linejoin="round" paint-order="stroke">3 784</text><text x="1321.92" y="573.74" text-anchor="middle" fill="#fff" stroke="#000" stroke-width="1.7" stroke-linejoin="round" paint-order="stroke">1 813</text><text x="1321.92" y="513.7" text-anchor="middle" fill="#fff" stroke="#000" stroke-width="1.7" stroke-linejoin="round" paint-order="stroke">4 182</text><text x="1321.92" y="466.82" text-anchor="middle" fill="#fff" stroke="#000" stroke-width="1.7" stroke-linejoin="round" paint-order="stroke">518</text><text x="1321.92" y="431.28" text-anchor="middle" fill="#000" stroke="#fff" stroke-width="1.7" stroke-linejoin="round" paint-order="stroke">2 969</text><text x="1366.01" y="573.4" text-anchor="middle" fill="#fff" stroke="#000" stroke-width="1.7" stroke-linejoin="round" paint-order="stroke">2 164</text><text x="1366.01" y="511.57" text-anchor="middle" fill="#fff" stroke="#000" stroke-width="1.7" stroke-linejoin="round" paint-order="stroke">5 068</text><text x="1366.01" y="463.73" text-anchor="middle" fill="#fff" stroke="#000" stroke-width="1.7" stroke-linejoin="round" paint-order="stroke">549</text><text x="1366.01" y="429.99" text-anchor="middle" fill="#000" stroke="#fff" stroke-width="1.7" stroke-linejoin="round" paint-order="stroke">3 327</text><text x="1410.1" y="573.35" text-anchor="middle" fill="#fff" stroke="#000" stroke-width="1.7" stroke-linejoin="round" paint-order="stroke">2 205</text><text x="1410.1" y="511.21" text-anchor="middle" fill="#fff" stroke="#000" stroke-width="1.7" stroke-linejoin="round" paint-order="stroke">5 181</text><text x="1410.1" y="463.85" text-anchor="middle" fill="#fff" stroke="#000" stroke-width="1.7" stroke-linejoin="round" paint-order="stroke">472</text><text x="1410.1" y="430.41" text-anchor="middle" fill="#000" stroke="#fff" stroke-width="1.7" stroke-linejoin="round" paint-order="stroke">3 431</text><text x="1454.19" y="573.37" text-anchor="middle" fill="#fff" stroke="#000" stroke-width="1.7" stroke-linejoin="round" paint-order="stroke">2 294</text><text x="1454.19" y="510.69" text-anchor="middle" fill="#fff" stroke="#000" stroke-width="1.7" stroke-linejoin="round" paint-order="stroke">5 467</text><text x="1454.19" y="463.17" text-anchor="middle" fill="#fff" stroke="#000" stroke-width="1.7" stroke-linejoin="round" paint-order="stroke">440</text><text x="1454.19" y="430.28" text-anchor="middle" fill="#000" stroke="#fff" stroke-width="1.7" stroke-linejoin="round" paint-order="stroke">3 558</text></g>
<g font-size="10.25" fill="#666666" text-anchor="end"><text transform="translate(973 601.6) rotate(-45)">April 2019</text><text transform="translate(1017.09 601.6) rotate(-45)">May 2019</text><text transform="translate(1061.18 601.6) rotate(-45)">June 2019</text><text transform="translate(1105.27 601.6) rotate(-45)">July 2019</text><text transform="translate(1149.36 601.6) rotate(-45)">August 2019</text><text transform="translate(1193.45 601.6) rotate(-45)">September 2019</text><text transform="translate(1237.54 601.6) rotate(-45)">October 2019</text><text transform="translate(1281.63 601.6) rotate(-45)">November 2019</text><text transform="translate(1325.72 601.6) rotate(-45)">December 2019</text><text transform="translate(1369.81 601.6) rotate(-45)">January 2020</text><text transform="translate(1413.9 601.6) rotate(-45)">February 2020</text><text transform="translate(1457.99 601.6) rotate(-45)">March 2020</text></g>
<g font-size="10" fill="#333333"><circle cx="1110.5" cy="678.2" r="5" fill="#a9be3b"/><text x="1118.6" y="682.1">CHP</text><circle cx="1155.5" cy="678.2" r="5" fill="#558cc0"/><text x="1163.6" y="682.1">MCHP</text><circle cx="1208.5" cy="678.2" r="5" fill="#d34957"/><text x="1216.6" y="682.1">Clinic</text><circle cx="1257.5" cy="678.2" r="5" fill="#ff9f3a"/><text x="1265.6" y="682.1">CHC</text></g>
</svg></section>
<section><div class="card" style="left:17px;top:699px;width:400px;height:402px"></div>
<span class="t" style="left:25.6px;top:710.77px;font-size:13.5px;font-weight:bold;color:#333e4b;transform:scaleX(0.8990);">ANC: IPT 2 Coverage this year</span>
<div class="mb" style="left:379px;top:704px"><i style="left:10.2px"></i><i style="left:14.4px"></i><i style="left:18.6px"></i></div>
<svg width="1536" height="922" viewBox="0 0 1536 922" style="left:0;top:0">
<clipPath id="mc1"><rect x="22" y="737" width="390.6" height="190"/></clipPath><g clip-path="url(#mc1)"><rect x="-40" y="730" width="520" height="200" fill="#fafaf8"/><path d="M-30 730L-16.2 737L-9.7 739.6L-0.6 744.8L9.8 751.3L17.6 757.8L22 761L29.7 768.9L36.2 772.2L38.8 777.4L47.3 776.1L49.9 781.3L49.3 789.1L46 795.6L51.9 795.6L59.7 804.7L66.8 811.2L67.5 821.6L76.6 825.5L78.5 833.4L83.1 836L78.5 841.2L79 849.3L83 852.8L89.9 855.7L92.2 862L86.4 862L84.1 866.6L84.7 874.6L88.7 883.8L92.2 890.7L97.9 889.6L103.7 886.1L111.7 889.6L103.7 895.3L94.5 895.3L80.1 894.7L79.5 898.8L84.1 904.5L88.7 911.4L91 922L91 940L-30 940Z" fill="#d4dadc"/><g fill="none" stroke="#e7c8cc" stroke-width="0.9" stroke-dasharray="1.2 2.2"><path d="M21.5 742.2L26.8 748.7L35.9 753.9L44.3 757.2L45 763"/><path d="M50.2 778.7L56.7 785.2L63.2 787.1L61.9 798.2L59.3 802.1"/><path d="M0 737L4 741"/><path d="M186 737 C190 748 186 756 188 764"/><path d="M240 737 C244 742 242 750 246 755"/><path d="M330 737 C336 752 326 768 332 782 S346 800 344 815 352 830 366 826 392 812 412 818"/><path d="M318 838 C330 836 338 842 346 856 S340 880 348 890 370 900 380 922"/><path d="M420 737 C414 752 424 764 416 776 S430 800 452 796"/></g><g fill="none" stroke="#ecebe8" stroke-width="1"><path d="M60 737 C70 760 95 765 110 790 S120 815 140 800"/><path d="M120 737 C140 755 150 748 170 752"/><path d="M300 737 C315 760 330 765 336 800 S350 850 372 880 380 905 378 922"/><path d="M360 737 C372 770 395 790 400 830 S410 880 440 900"/></g><text x="84" y="755.2" font-size="10" font-weight="bold" textLength="32.2" lengthAdjust="spacing" fill="#a2b0be" stroke="#fff" stroke-width="1.4" stroke-linejoin="round" paint-order="stroke">Kindia</text><rect x="118.2" y="750.8" width="2.2" height="2.2" fill="#a2b0be"/><text x="-15.6" y="804.4" font-size="10" font-weight="bold" textLength="55.8" lengthAdjust="spacing" fill="#a2b0be" stroke="#fff" stroke-width="1.4" stroke-linejoin="round" paint-order="stroke">CONAKRY</text><rect x="42.1" y="800" width="2.2" height="2.2" fill="#a2b0be"/><text x="14.7" y="900.7" font-size="10" font-weight="bold" textLength="62" lengthAdjust="spacing" fill="#a2b0be" stroke="#fff" stroke-width="1.4" stroke-linejoin="round" paint-order="stroke">FREETOWN</text><text x="306.5" y="834.4" font-size="10" font-weight="bold" textLength="61.3" lengthAdjust="spacing" fill="#a2b0be" stroke="#fff" stroke-width="1.4" stroke-linejoin="round" paint-order="stroke">Kissidougou</text><rect x="370.2" y="830" width="2.2" height="2.2" fill="#a2b0be"/><text x="383.1" y="893.4" font-size="10" font-weight="bold" textLength="43.1" lengthAdjust="spacing" fill="#a2b0be" stroke="#fff" stroke-width="1.4" stroke-linejoin="round" paint-order="stroke">Macenta</text><rect x="428.2" y="889" width="2.2" height="2.2" fill="#a2b0be"/><clipPath id="co"><path d="M207.6 755.9L270.6 755.4L274.3 758.5L275.3 765.8L284.2 773.6L289.4 778.3L294.6 786.7L297.7 790.8L301.9 797.1L304.5 800.2L302.9 805.4L306.6 810.1L307.6 813.2L314.4 812.7L319.6 820.5L318.5 829.4L314.4 831.5L314.4 839.5L325.8 843.7L326.9 860.4L331 871.8L335.2 875L336.8 880.2L330 887.5L324.8 889.5L319.6 901L317 908L328 912L338 909L340 903L343 896.6L355.5 895.2L357 940L91 940L91 922L88.7 911.4L84.1 904.5L79.5 898.8L80.1 894.7L94.5 895.3L103.7 895.3L111.7 889.6L103.7 886.1L97.9 889.6L92.2 890.7L88.7 883.8L84.7 874.6L84.1 866.6L86.4 862L92.2 862L89.9 855.7L83 852.8L79 849.3L79.5 843.6L89.9 839.6L97.9 841.3L106 840.1L110.6 822.9L114 822.3L117.4 822.2L126.5 818.2L128.5 813L136.7 802L139.7 793.8L143.8 790.8L145.2 783L150.1 780L152 769.3L157.9 766.4L176.4 762.7L185.2 767.1L206 762Z"/></clipPath><path d="M207.6 755.9L270.6 755.4L274.3 758.5L275.3 765.8L284.2 773.6L289.4 778.3L294.6 786.7L297.7 790.8L301.9 797.1L304.5 800.2L302.9 805.4L306.6 810.1L307.6 813.2L314.4 812.7L319.6 820.5L318.5 829.4L314.4 831.5L314.4 839.5L325.8 843.7L326.9 860.4L331 871.8L335.2 875L336.8 880.2L330 887.5L324.8 889.5L319.6 901L317 908L328 912L338 909L340 903L343 896.6L355.5 895.2L357 940L91 940L91 922L88.7 911.4L84.1 904.5L79.5 898.8L80.1 894.7L94.5 895.3L103.7 895.3L111.7 889.6L103.7 886.1L97.9 889.6L92.2 890.7L88.7 883.8L84.7 874.6L84.1 866.6L86.4 862L92.2 862L89.9 855.7L83 852.8L79 849.3L79.5 843.6L89.9 839.6L97.9 841.3L106 840.1L110.6 822.9L114 822.3L117.4 822.2L126.5 818.2L128.5 813L136.7 802L139.7 793.8L143.8 790.8L145.2 783L150.1 780L152 769.3L157.9 766.4L176.4 762.7L185.2 767.1L206 762Z" fill="#cbdfee"/><g clip-path="url(#co)"><path d="M95.5 896.5L95.4 896.5L91.5 895.9L91.1 894.8L89.6 893.6L86.8 894.4L83.4 895.4L81.6 894.2L80.7 896L80.6 896L80.4 898L79.7 900.3L82.3 903.5L84.8 904.7L84.7 905.9L86.8 908.5L87.2 907.6L88.3 903.7L90.8 903.1L91.4 902.6L92.4 898.4L95 896.6ZM92.2 889.6L94.8 889.9L98.9 890.2L99.8 888.3L101.7 886.5L103.6 887.2L103.9 887.1L104.3 885.4L107 880.8L107.7 879.5L109.1 878.4L107.6 875.7L108.7 874L106.9 872.7L105 870.4L102.3 872.2L101.7 873.1L100.3 872.3L95.9 873L94.3 872.6L92.3 872.1L90.6 870.3L86.9 870.9L86.4 872.6L85.9 871.2L84.9 875.5L83.7 876.1L86 877.2L88 879.7L89.4 882.3L87.2 884.6L89 886.7L92.8 887.3L92.1 889.4ZM97.5 850.3L98 850L99.1 846.4L101.5 843.9L100 842.7L100.2 842.9L97.1 841.9L95.1 840.3L93.9 840.1L92.5 839.5L90 838.3L87.4 839.7L86 842.7L84 842L81.3 842L79.8 843.2L77.7 845.9L80.1 848.1L81.7 850.9L82 851.6L86.4 854.1L87.6 853.8L90.2 853.6L92.9 853.9L93.8 854.7L96.2 851.2ZM148.9 800.2L151 798.9L152.7 796.6L153 793.9L150 791.5L149.5 789.3L149.5 789L146.2 787.6L143.7 784.8L143.9 786.7L143.8 787.3L142.7 790.6L141.7 792.2L139.7 792.6L138.1 795.8L138.8 799.1L137.3 799.2L139 800.7L143.4 801.3L145.1 801.2L145 798.8ZM103.7 926.5L104.3 923.3L104.9 920.7L102.5 918.8L102.8 917.6L104.6 913.2L103.2 914.5L100 914.7L97.7 913.2L96.1 913.6L92.8 912.8L90.1 910.8L88.6 910.8L88.5 910.8L88.6 911.8L89.3 916.3L90.1 918.7L90.6 920L92 921.8L91.7 923.7L89.1 926.7L90.3 926.6L91.4 929.2L90.6 931.8L91.7 935.8L92.3 936.1L91.9 936.6L93.3 933.5L95.8 930.1L96.7 930.7L98 929.5L100.8 926.7L102.5 927.1ZM103.7 926.5L104.2 926.5L106.4 927.3L108.9 928.2L110.7 927.8L111.8 928.8L113.9 930.8L117.5 927.7L120.1 926.6L120.2 925.1L121.4 922.2L122.6 921.3L123.2 921.2L123.8 918.3L124 916.1L122.5 915.9L118.7 915.4L118.6 913.8L117.7 913.8L113.6 913.6L112.8 911.2L112.6 910L108.6 910L106.1 912.7L104.6 912.6L104.6 913.2L102.8 917.6L102.5 918.8L104.9 920.7L104.3 923.3ZM86.8 908.5L88 910.4L88.6 910.8L90.1 910.8L92.8 912.8L96.1 913.6L97.7 913.2L100 914.7L103.2 914.5L104.6 913.2L104.6 912.6L106.1 912.7L108.6 910L107.8 906.7L108.6 905.3L109.4 902.7L106.7 901.3L103 898.9L103.4 895.4L102.9 893.6L97.6 896.1L96.7 894.9L95.5 896.5L95 896.6L92.4 898.4L91.4 902.6L90.8 903.1L88.3 903.7L87.2 907.6ZM106.9 872.7L107.5 871.2L105.9 869L105.6 867.5L104 865.1L104 862.2L102.3 860.6L101.3 859.9L101.5 858.2L99.5 855.6L98.8 852.7L97.5 850.3L96.2 851.2L93.8 854.7L92.9 853.9L90.2 853.6L87.6 853.8L90.1 853.6L90.3 858L92.3 861.5L91.8 862.4L90.9 862.1L85.9 860.6L84.8 864.1L84 866L83.8 867.9L85.9 871.2L86.4 872.6L86.9 870.9L90.6 870.3L92.3 872.1L94.3 872.6L95.9 873L100.3 872.3L101.7 873.1L102.3 872.2L105 870.4ZM103.9 887.1L106.6 886.5L108.4 887.9L109.8 889.8L112.1 890.2L108.7 890.8L106.6 892.7L106.4 894.5L104.3 894.4L102.9 893.6L103.4 895.4L103 898.9L106.7 901.3L109.4 902.7L108.6 905.3L110.7 903.3L112.2 901.7L114.2 900.2L117.9 900L119.1 900.1L118.3 897.6L120.7 897.3L124.6 896.5L122.8 894.2L121.8 891.4L123.5 889.9L123.9 888.6L123.3 884.4L122.4 881.3L120.2 880.6L119.5 880.9L117 880.1L114.6 879.6L112.6 879.7L111.6 878.8L109.1 878.4L107.7 879.5L107 880.8L104.3 885.4ZM107.5 871.2L109.7 871.1L110.4 867.7L110.5 866.5L112.5 866.5L114.4 862.8L114.8 860.7L116.3 861L118.8 859.6L119.6 858.1L120.8 856.7L120.2 855.4L119.2 852.8L119.2 850.8L117.7 849.5L114.8 846.9L115.8 843.7L113.7 844.4L110.2 845.5L107.5 845.7L106.1 845.5L105.4 846.5L101.5 843.9L99.1 846.4L98 850L97.5 850.3L98.8 852.7L99.5 855.6L101.5 858.2L101.3 859.9L102.3 860.6L104 862.2L104 865.1L105.6 867.5L105.9 869ZM106.9 872.7L108.7 874L107.6 875.7L109.1 878.4L111.6 878.8L112.6 879.7L114.6 879.6L117 880.1L119.5 880.9L120.2 880.6L122.4 881.3L126 881.4L127.2 882.4L127 879.3L129.6 876.8L132.4 877.8L133.3 876.8L134.4 873.7L135.7 872L134.5 870.7L134.2 868.7L135.6 865.1L135 863.4L133 863.4L131.2 861.5L129.2 860.1L127.8 859.5L124.7 857.6L123.1 857.1L120.8 856.7L119.6 858.1L118.8 859.6L116.3 861L114.8 860.7L114.4 862.8L112.5 866.5L110.5 866.5L110.4 867.7L109.7 871.1L107.5 871.2ZM113.9 930.8L111.8 928.8L110.7 927.8L108.9 928.2L106.4 927.3L104.2 926.5L103.7 926.5L102.5 927.1L100.8 926.7L98 929.5L96.7 930.7L95.8 930.1L93.3 933.5L91.9 936.6L92.3 936.1L90.4 940.1L91.5 939.2L96.5 938.6L98.2 940.8L99.4 939.9L102.1 940.5L104.1 941.2L105.6 939.5L106.1 938.8L110.7 939.2L113 941.1L114.2 939.7L117.4 941L114.6 936.8L115.4 934.3L116.2 934.1L116.9 932.7ZM113.9 930.8L116.9 932.7L116.2 934.1L115.4 934.3L114.6 936.8L117.4 941L119.5 940.8L121.1 939.1L120.7 938.8L124.6 939.4L126.7 941.2L128.8 939.9L130.2 940.7L133.9 940.9L136.1 939L136 938.9L135.7 937.5L135 936.9L132.6 935.5L133.2 933.3L132.2 931.3L129.8 929.1L128.3 926.4L127.8 924.4L129 924.2L126.2 923.8L123.2 921.2L122.6 921.3L121.4 922.2L120.2 925.1L120.1 926.6L117.5 927.7ZM101.5 843.9L105.4 846.5L106.1 845.5L107.5 845.7L110.2 845.5L113.7 844.4L115.8 843.7L116.6 844.1L117 841L119.5 838.4L119.9 838.9L121.1 836.5L120.6 832.9L121.9 829.9L119.6 829.8L118.4 829.5L117.4 826.7L118.3 823.6L117.3 821.2L113.6 821.8L110.8 823.3L109.4 825.2L109.4 826.5L107.8 830.3L106.4 832.5L107.8 832.9L107.1 837L105.7 839.5L106.3 839.5L103.9 840.1L101 840.1L100.2 842.9L100 842.7ZM108.6 910L112.6 910L112.8 911.2L113.6 913.6L117.7 913.8L118.6 913.8L118.7 915.4L122.5 915.9L124 916.1L123.8 918.3L126.2 916.5L127.7 917.3L130 914.8L133.1 911L134 911.2L132.4 909.2L131.5 908L131.7 904.2L131 902.8L128.6 900.6L125.9 900.5L126.5 898.6L124.6 896.5L120.7 897.3L118.3 897.6L119.1 900.1L117.9 900L114.2 900.2L112.2 901.7L110.7 903.3L108.6 905.3L107.8 906.7ZM122.4 881.3L123.3 884.4L123.9 888.6L123.5 889.9L121.8 891.4L122.8 894.2L124.6 896.5L126.5 898.6L125.9 900.5L128.6 900.6L131 902.8L131.8 902.3L134.5 900L136 897.8L137.9 896.6L140.8 895.2L142.3 894L143.5 893.5L144.4 891.6L144.4 887.6L141.8 884.3L141.3 883.3L141.6 883L138.8 880.9L136.8 879.3L136.5 878.9L133.3 876.8L132.4 877.8L129.6 876.8L127 879.3L127.2 882.4L126 881.4ZM120.8 856.7L123.1 857.1L124.7 857.6L127.8 859.5L129.2 860.1L131.2 861.5L133.8 858.7L134.1 855.8L135.8 855.7L138 853.4L138.2 850.5L136.4 849.7L138 846.6L137 844.1L136.5 841.5L134.4 839.8L135.1 839.8L133.6 837.1L133.7 836.6L130.2 836.1L127.8 836.2L127.3 834L123.9 834.8L121.1 836.5L119.9 838.9L119.5 838.4L117 841L116.6 844.1L115.8 843.7L114.8 846.9L117.7 849.5L119.2 850.8L119.2 852.8L120.2 855.4ZM174.7 930.9L172.2 930.4L171.4 927.7L169 926.1L167.1 925.6L166.2 923.2L164.6 926L160.2 927.4L158 927.5L158 929.4L156.3 930.1L153.8 931L153.2 931.3L151.6 932.6L147.8 936.1L146.9 936.9L148 937.8L147.5 941L150.4 938.8L151.7 939L152.9 939.7L155.3 941.3L158.1 939.9L158 940.8L161.8 940.2L165.3 938.5L166.7 939.4L168.5 940.5L170.6 941.2L173.5 939.7L173.1 941L175.2 936.4L176 935.6L174.3 933ZM123.2 921.2L126.2 923.8L129 924.2L127.8 924.4L128.3 926.4L129.8 929.1L132.2 931.3L133.2 933.3L132.6 935.5L135 936.9L135.7 937.5L136 938.9L138.2 939.4L140.5 941.2L143.2 940.1L143.4 940.4L147.5 941L148 937.8L146.9 936.9L147.8 936.1L148.8 931.5L147.5 928.5L148.4 927.7L147.6 926.3L146.4 925L144.4 920.9L146.4 919.1L146.6 917.5L145.1 915L141.2 915.7L141.3 915.3L139.7 913.8L135.9 913.4L135.3 912.5L134 911.2L133.1 911L130 914.8L127.7 917.3L126.2 916.5L123.8 918.3ZM134 911.2L135.3 912.5L135.9 913.4L139.7 913.8L141.3 915.3L141.2 915.7L145.1 915L146.5 912.4L149.2 912.5L150.5 912.2L150.8 910.5L152.2 907.8L152.5 905.8L153 903.8L153.5 899.2L150.8 897.6L149.9 897.3L146.9 894.9L143.3 893.7L143.5 893.5L142.3 894L140.8 895.2L137.9 896.6L136 897.8L134.5 900L131.8 902.3L131 902.8L131.7 904.2L131.5 908L132.4 909.2ZM129.8 812.1L129.3 811.7L129.4 816.4L126.8 818.3L125 817.6L121.5 820.7L119 822.7L117.2 821.2L117.3 821.2L118.3 823.6L117.4 826.7L118.4 829.5L119.6 829.8L121.9 829.9L120.6 832.9L121.1 836.5L123.9 834.8L127.3 834L127.8 836.2L130.2 836.1L133.7 836.6L133.6 837.1L134.5 835.4L137.9 833.3L139.5 832.2L140.7 829.6L144.1 827.9L143.9 826L143.7 823.9L143.9 820.6L143.1 820.2L142 818L137.8 816.3L136.3 816.3L135.9 814.7L131.8 813.3L129.5 813.6ZM143.9 820.6L146.6 819.8L148.2 820.5L150.2 818.3L151.8 816.3L152.3 816.5L151.9 814.3L154 812.3L151.8 809.3L150.2 806.7L148.7 806.5L151 805.1L150.1 802.1L148.9 800.2L145 798.8L145.1 801.2L143.4 801.3L139 800.7L137.3 799.2L135.9 801.5L136.2 804.3L135 806.1L133.2 807.3L133.2 809L132.2 811.5L129.8 812.1L129.5 813.6L131.8 813.3L135.9 814.7L136.3 816.3L137.8 816.3L142 818L143.1 820.2ZM134.2 868.7L139.1 867.6L141 867.7L142.5 866.5L142.6 868.6L146.4 867.7L148.2 866.5L150.5 864.4L151.9 866.6L151.5 864.8L152.6 861.9L154.8 859.9L154.6 858.4L155.5 856.2L156.6 853.4L156.1 851.9L155.7 849L152.6 850.1L149.9 849.1L150.2 847.7L148 849.2L144.6 850.9L142.8 850.6L140.7 849.9L138.2 850.5L138 853.4L135.8 855.7L134.1 855.8L133.8 858.7L131.2 861.5L133 863.4L135 863.4L135.6 865.1ZM133.6 837.1L135.1 839.8L134.4 839.8L136.5 841.5L137 844.1L138 846.6L136.4 849.7L138.2 850.5L140.7 849.9L142.8 850.6L144.6 850.9L148 849.2L150.2 847.7L149.9 849.1L152.6 850.1L155.7 849L156.8 846.1L154.5 844L154 843.5L156.2 841.7L155.4 839L152.4 837.3L150.4 836.7L149.3 834.4L147.2 831.9L145.4 831.4L144.8 830.3L144.1 827.9L140.7 829.6L139.5 832.2L137.9 833.3L134.5 835.4ZM147.8 936.1L151.6 932.6L153.2 931.3L153.8 931L156.3 930.1L158 929.4L158 927.5L160.2 927.4L164.6 926L166.2 923.2L165.6 922L165.1 920.2L165.7 918.5L164.7 914.8L164.2 914.5L164.1 914.2L161.7 911.4L158 911L157.4 912L155.5 910.3L152.2 909.3L150.8 910.5L150.5 912.2L149.2 912.5L146.5 912.4L145.1 915L146.6 917.5L146.4 919.1L144.4 920.9L146.4 925L147.6 926.3L148.4 927.7L147.5 928.5L148.8 931.5ZM167 777.7L169.6 775.9L170 775.2L171.1 772.7L173.5 771L173.9 771.3L174.3 767.8L175.5 763.7L173.1 763.4L171.9 762.9L170 764.2L169.4 763.6L164.9 765.4L162.9 765.8L161.2 766.2L161.7 764.3L158.6 765.9L154.8 768.7L153.1 768.7L152.1 768.7L151.6 771.3L150.2 774.8L152.2 776L155 774.8L156.6 775.4L157.3 777L161.1 776.4L163.1 776L163.1 777.2ZM143.9 820.6L143.7 823.9L143.9 826L144.1 827.9L144.8 830.3L145.4 831.4L147.2 831.9L149.3 834.4L150.4 836.7L152.4 837.3L155.4 839L156.2 841.7L156.7 838.6L157.1 837.5L160.2 836.3L163.5 834.4L164.6 833.3L165.8 832.7L167.3 832.3L167.7 829.9L169.1 826.8L170.3 825.9L170.4 825.2L167.7 822.3L164.3 820.5L163.5 819.6L161.8 816.6L160.2 814.6L158 817.3L154.8 815.8L152.3 816.5L151.8 816.3L150.2 818.3L148.2 820.5L146.6 819.8ZM151.9 866.6L154.8 867.7L155.7 867.8L155.1 870.1L158 872.8L161.1 871.6L161.5 871L165.5 873.2L168.1 872.2L170.2 869.6L169.7 870.1L173.6 870.2L172.8 869.6L173.2 866.5L172.1 862.1L172.8 861.2L171.6 860.2L170.1 859.3L169.1 856.5L171.1 851.9L167.7 852.6L165.1 853.8L163.2 852.5L161.9 852.6L158.9 853.5L156.1 851.9L156.6 853.4L155.5 856.2L154.6 858.4L154.8 859.9L152.6 861.9L151.5 864.8ZM133.3 876.8L136.5 878.9L136.8 879.3L138.8 880.9L141.6 883L141.3 883.3L141.8 884.3L146.9 886.7L148.3 885.1L149.6 882.9L150.3 882.1L155 883.1L157 883.3L157.9 878.9L158.1 877.3L159 877L158 872.8L155.1 870.1L155.7 867.8L154.8 867.7L151.9 866.6L150.5 864.4L148.2 866.5L146.4 867.7L142.6 868.6L142.5 866.5L141 867.7L139.1 867.6L134.2 868.7L134.5 870.7L135.7 872L134.4 873.7ZM148.9 800.2L150.1 802.1L151 805.1L148.7 806.5L150.2 806.7L151.8 809.3L154 812.3L151.9 814.3L152.3 816.5L154.8 815.8L158 817.3L160.2 814.6L161.8 813.8L161.6 812.9L162.8 809.9L164.6 808.1L164.5 806.8L165.3 806L167.3 803.3L167.4 801.2L167.8 801.8L169.9 799L170.4 796.2L169.7 793.6L168.6 792.8L166.7 792.9L165.9 791.5L163 790.3L162.2 790.5L158.6 793.4L157.4 792.9L154.7 793.1L153 793.9L152.7 796.6L151 798.9ZM143.5 893.5L143.3 893.7L146.9 894.9L149.9 897.3L150.8 897.6L153.5 899.2L155.9 899.5L155.7 900.2L157.1 896.5L160.3 894.1L161.6 895.6L163.5 894.7L167.2 892.1L165.5 890L162 887.6L161.8 887L160.3 887.1L157.9 885.6L157.3 883.9L157 883.3L155 883.1L150.3 882.1L149.6 882.9L148.3 885.1L146.9 886.7L141.8 884.3L144.4 887.6L144.4 891.6ZM153.5 899.2L153 903.8L152.5 905.8L152.2 907.8L150.8 910.5L152.2 909.3L155.5 910.3L157.4 912L158 911L161.7 911.4L164.1 914.2L164.2 914.5L167.7 913.5L169.5 910.7L170.4 910.3L172.8 910L175 909.7L173.7 906.5L171.1 903.6L170.8 901.5L170.7 900.4L171.1 900L167.7 897.9L167 893.7L167.5 891.2L167.2 892.1L163.5 894.7L161.6 895.6L160.3 894.1L157.1 896.5L155.7 900.2L155.9 899.5ZM165.9 791.5L165.9 788.5L165.2 785.2L167.5 783.3L168.2 782.9L166.5 779.8L167 777.7L163.1 777.2L163.1 776L161.1 776.4L157.3 777L156.6 775.4L155 774.8L152.2 776L150.2 774.8L150.1 776L149.5 777.5L149.5 782L146.9 781.6L145.5 781.7L143.7 784.8L146.2 787.6L149.5 789L149.5 789.3L150 791.5L153 793.9L154.7 793.1L157.4 792.9L158.6 793.4L162.2 790.5L163 790.3ZM156.1 851.9L158.9 853.5L161.9 852.6L163.2 852.5L165.1 853.8L167.7 852.6L171.1 851.9L171.8 852.9L171.6 852.8L173.7 849.6L176.9 847.9L178.1 847L179.2 845.6L178.3 842.9L177.9 842L177 840.1L175.8 837.4L173 836.2L173.6 835.8L174.2 833L170.7 828.6L169.1 826.8L167.7 829.9L167.3 832.3L165.8 832.7L164.6 833.3L163.5 834.4L160.2 836.3L157.1 837.5L156.7 838.6L156.2 841.7L154 843.5L154.5 844L156.8 846.1L155.7 849ZM157 883.3L157.3 883.9L157.9 885.6L160.3 887.1L161.8 887L162 887.6L165.5 890L167.2 892.1L167.5 891.2L167.6 890.9L168.2 890.8L171.5 888.3L171.3 886.2L170.8 884.2L172.4 883.2L173.3 879.1L172.7 877.5L174.3 877L175.6 874.5L173.9 872.1L173.9 870.3L173.6 870.2L169.7 870.1L170.2 869.6L168.1 872.2L165.5 873.2L161.5 871L161.1 871.6L158 872.8L159 877L158.1 877.3L157.9 878.9ZM166.2 923.2L167.1 925.6L169 926.1L171.4 927.7L172.2 930.4L174.7 930.9L177.5 927.8L177.9 928.2L179 927.8L181.3 924.8L182 924.4L182.9 924L185.3 919.9L184.2 919.2L184.4 917.6L180.9 915.4L178.1 914.9L179.2 914.6L177.8 912.5L175.6 910.2L175.4 909.2L175 909.7L172.8 910L170.4 910.3L169.5 910.7L167.7 913.5L164.2 914.5L164.7 914.8L165.7 918.5L165.1 920.2L165.6 922ZM219.7 769.7L220.9 768.6L222.4 767.9L225 770.7L226.6 769.4L229.2 766.5L229.8 764.5L230.6 763.3L232.8 761.9L232 758.6L231.9 757.7L230.1 756.3L227.5 755.7L225.9 753.8L224.7 755.9L221.9 756.3L219.8 755.9L220 756.8L216.3 756.2L213.4 755.3L210.8 754L210.1 756.6L206.9 756.3L207 756.9L210.7 759.1L210.3 759.7L211 761.1L213.8 763.5L213.8 764.4L214.5 764.9L217.8 767.3ZM170.4 796.2L174.1 796.8L175.9 797.8L177.5 799.3L179.8 799.2L182.7 795.2L183.5 793.4L183.9 793.6L186.1 790.9L187.5 789.4L187.8 789.5L189.4 788.5L190.1 786.1L190 781.9L191.2 781.6L191.4 778.5L189 778L186.9 778.2L186 776.7L183.8 775.9L180.8 775.9L180.1 773.9L178.5 771.9L174.7 772L173.9 771.3L173.5 771L171.1 772.7L170 775.2L169.6 775.9L167 777.7L166.5 779.8L168.2 782.9L167.5 783.3L165.2 785.2L165.9 788.5L165.9 791.5L166.7 792.9L168.6 792.8L169.7 793.6ZM170.3 825.9L172.4 824.5L174.4 822.7L177.6 823.1L180.3 823L179.6 819.4L182 818.4L182.5 818L183.2 814.9L182.9 812.4L184.1 809.8L185.4 810.3L184.5 807.1L182.2 805.6L181.1 803L182.3 801L180 800.3L177.5 799.3L175.9 797.8L174.1 796.8L170.4 796.2L169.9 799L167.8 801.8L167.4 801.2L167.3 803.3L165.3 806L164.5 806.8L164.6 808.1L162.8 809.9L161.6 812.9L161.8 813.8L160.2 814.6L161.8 816.6L163.5 819.6L164.3 820.5L167.7 822.3L170.4 825.2ZM206.7 929.2L203.2 928L202.9 927.4L201.4 925.3L197.7 924.6L196.9 925.1L195.9 923.2L192 921.3L191.2 923.5L191.8 926.5L193 929.3L191.8 929.7L191.6 934.2L191.8 936.8L189.6 937.9L189.4 940.3L191.5 938.2L195.9 939.8L196.6 940.7L199.4 941.1L203.4 939.5L203.8 940.7L205.4 938.7L204.7 938.6L206.8 936.8L206.9 934.2L205.4 929.9ZM173.1 941L176.3 939.1L180.4 938.8L181.4 940L184.2 941.2L186.8 940.3L188.7 940.1L189.4 940.3L189.6 937.9L191.8 936.8L191.6 934.2L191.8 929.7L193 929.3L191.8 926.5L191.2 923.5L192 921.3L192 921.3L190.4 921.2L189.3 920.9L185.3 919.9L182.9 924L182 924.4L181.3 924.8L179 927.8L177.9 928.2L177.5 927.8L174.7 930.9L174.3 933L176 935.6L175.2 936.4ZM167.5 891.2L167 893.7L167.7 897.9L171.1 900L170.7 900.4L170.8 901.5L171.1 903.6L173.7 906.5L175 909.7L175.4 909.2L174.9 906.8L176.9 904.8L181.5 905.6L183.2 905.4L183.2 901.9L185.5 900.6L187.7 901.1L186.3 897.1L187.3 895.5L187.8 894L186.3 893.4L184.3 889.7L183.3 889.8L182.1 890L180.4 890.6L177 888L177.3 887.8L174.6 889.2L171.5 888.3L168.2 890.8L167.6 890.9ZM171.5 888.3L174.6 889.2L177.3 887.8L177 888L180.4 890.6L182.1 890L183.3 889.8L184.3 889.7L187.3 888L189.3 886.9L190.1 885.9L192.5 883L194.3 880.5L190.8 881.1L190.1 878.5L190.6 873.9L190.1 872L187.3 871.2L184.9 869.8L185.1 869.5L181.8 871.6L178.2 871.4L177.8 870.8L173.9 870.3L173.9 872.1L175.6 874.5L174.3 877L172.7 877.5L173.3 879.1L172.4 883.2L170.8 884.2L171.3 886.2ZM173.6 870.2L173.9 870.3L177.8 870.8L178.2 871.4L181.8 871.6L185.1 869.5L184.9 869.8L187.3 871.2L189.3 870.5L191.2 866L191.6 863.6L194.3 863L191.4 860.9L191.2 858.8L190.3 856.4L189.2 854.5L188.4 853.6L187.2 852.9L187.4 850.9L184.6 847.9L183.8 845.3L182.1 846.9L179.2 845.6L178.1 847L176.9 847.9L173.7 849.6L171.6 852.8L171.8 852.9L171.1 851.9L169.1 856.5L170.1 859.3L171.6 860.2L172.8 861.2L172.1 862.1L173.2 866.5L172.8 869.6ZM169.1 826.8L170.7 828.6L174.2 833L173.6 835.8L173 836.2L175.8 837.4L177 840.1L177.9 842L178.3 842.9L179.2 845.6L182.1 846.9L183.8 845.3L187 844.5L187.8 843.8L189.8 841.9L192.9 841.2L193.5 840.4L193.8 837.4L195.7 835.6L195.3 833.7L195.2 833.5L194.2 830.4L194.4 826.7L192.9 824.5L192.5 824.4L189.8 824.1L187.2 821.6L186.5 820.3L184.6 820.1L182 818.4L179.6 819.4L180.3 823L177.6 823.1L174.4 822.7L172.4 824.5L170.3 825.9ZM185.3 919.9L189.3 920.9L190.4 921.2L192 921.3L192.1 919.9L194.4 917.2L195.6 915.4L196 914.2L198.5 911.2L199.1 909.9L197.2 907L198.3 905.9L196 904.8L193.6 902.5L192.3 902.7L190.5 902.8L187.7 901.1L185.5 900.6L183.2 901.9L183.2 905.4L181.5 905.6L176.9 904.8L174.9 906.8L175.4 909.2L175.6 910.2L177.8 912.5L179.2 914.6L178.1 914.9L180.9 915.4L184.4 917.6L184.2 919.2ZM177.5 799.3L180 800.3L182.3 801L181.1 803L182.2 805.6L184.5 807.1L185.9 805.7L187.8 804.9L190.2 807.1L193.2 806.1L194.3 805.5L194.6 804L197.4 804.7L200.9 803.3L200.3 803.4L199.7 800.1L200.1 797.5L200.2 796.7L199.6 794.2L197.3 793.2L194.2 792.6L193.2 790.1L191.2 788.9L189.4 788.5L187.8 789.5L187.5 789.4L186.1 790.9L183.9 793.6L183.5 793.4L182.7 795.2L179.8 799.2ZM184.3 889.7L186.3 893.4L187.8 894L187.3 895.5L186.3 897.1L187.7 901.1L190.5 902.8L192.3 902.7L193.6 902.5L196 904.8L198.3 905.9L198.4 901.8L199.6 900.6L201.7 899.4L201.6 895.6L203.3 893.9L205.1 892.9L205 889.7L203.5 888.3L201.7 886.8L201.9 884.1L200 883.8L196.1 884.3L195.7 882.1L194.3 880.5L192.5 883L190.1 885.9L189.3 886.9L187.3 888ZM182 818.4L184.6 820.1L186.5 820.3L187.2 821.6L189.8 824.1L192.5 824.4L192.9 824.5L195.6 825.8L198.9 823.6L201.2 820.7L202.1 820.8L204 818.4L203.3 815.7L203.1 814L204.3 813.4L203 811.3L201.9 807.5L201.2 804.3L200.9 803.3L197.4 804.7L194.6 804L194.3 805.5L193.2 806.1L190.2 807.1L187.8 804.9L185.9 805.7L184.5 807.1L185.4 810.3L184.1 809.8L182.9 812.4L183.2 814.9L182.5 818ZM192 921.3L192 921.3L195.9 923.2L196.9 925.1L197.7 924.6L201.4 925.3L202.9 927.4L203.2 928L206.7 929.2L208.4 928.7L209.6 926.7L211.7 925.4L213.1 924.4L213.2 922.4L213.3 919L214.8 918.3L215.2 917.4L213.7 914.9L214.3 911.5L211.1 910.1L210.7 911.8L207.2 912.1L204.3 911.5L202.8 911.2L201.4 910.7L199.1 909.9L198.5 911.2L196 914.2L195.6 915.4L194.4 917.2L192.1 919.9ZM187.3 871.2L190.1 872L190.6 873.9L190.1 878.5L190.8 881.1L194.3 880.5L195.7 882.1L196.1 884.3L200 883.8L201.9 884.1L202 882.4L203.8 881L204.9 880.3L204.9 878.6L207.1 876L209.4 874.3L210.4 872.6L213.2 870.3L215.8 869L216.2 868.5L212.7 866.8L209.9 867.2L210.3 866.5L207.7 864.5L204.4 864.1L204.8 863L203.1 860.5L198.5 861.3L197.6 861L196.5 861.8L194.3 863L191.6 863.6L191.2 866L189.3 870.5ZM232.8 761.9L235.5 763L238.1 762.9L239.3 762.2L242.6 764L244.7 764.4L244.4 763L246.3 760.6L247.4 758.1L247.4 756.6L249.4 756.1L245.1 756.5L242.7 756.3L241 754.2L240.2 754.8L237 756.3L235 755.4L234.7 756.7L230.1 756.3L231.9 757.7L232 758.6ZM191.4 778.5L193.4 776.8L193.4 777.2L196.6 776L196.3 771.9L196.5 770.6L198.8 769.7L199.4 766.6L199.9 764.5L201.8 763L199.6 764L197.9 763.1L193.9 764.7L193.4 765.4L191.9 767L190.7 765L186.1 765.6L184 767.3L182.7 767.3L179.7 765.3L177.3 765L177.1 763.2L173.1 763.4L175.5 763.7L174.3 767.8L173.9 771.3L174.7 772L178.5 771.9L180.1 773.9L180.8 775.9L183.8 775.9L186 776.7L186.9 778.2L189 778ZM200.2 796.7L201 795.2L204.5 793L207.6 790.6L208.4 791.1L209.3 791.5L211.4 788.3L212.7 787.3L211.4 786L210 783.3L207.3 782.4L206.1 782L204.5 779.9L202.1 779.4L201.5 779.4L199.5 777.2L196.6 776L193.4 777.2L193.4 776.8L191.4 778.5L191.2 781.6L190 781.9L190.1 786.1L189.4 788.5L191.2 788.9L193.2 790.1L194.2 792.6L197.3 793.2L199.6 794.2ZM183.8 845.3L184.6 847.9L187.4 850.9L187.2 852.9L188.4 853.6L189.2 854.5L190.3 856.4L191.2 858.8L191.4 860.9L194.3 863L196.5 861.8L197.6 861L198.5 861.3L203.1 860.5L204.5 858.5L203.2 855.1L202.8 854.1L204.1 853.4L204.2 849.5L204.5 848.2L205.7 846.7L205.4 845.8L205.7 842L204.8 841.8L202.3 840.4L199.7 840.4L198.9 840.6L196.7 838.3L193.8 837.4L193.5 840.4L192.9 841.2L189.8 841.9L187.8 843.8L187 844.5ZM192.9 824.5L194.4 826.7L194.2 830.4L195.2 833.5L195.3 833.7L195.7 835.6L193.8 837.4L196.7 838.3L198.9 840.6L199.7 840.4L202.3 840.4L204.8 841.8L205.7 842L209.3 841.1L212.8 843.6L215.2 841.3L216 837.6L217.8 837.7L217.4 835.3L218.3 831.2L220 831L219.7 829.3L220.8 826.3L216.8 826.9L214.8 825L214.9 824.4L211.1 825.1L208.7 824.3L208.7 823.3L205.6 823L202.9 821.7L202.1 820.8L201.2 820.7L198.9 823.6L195.6 825.8ZM222.8 931.7L220.9 929.8L218 928.4L218.4 928.3L216.9 926.7L213.1 924.4L211.7 925.4L209.6 926.7L208.4 928.7L206.7 929.2L205.4 929.9L206.9 934.2L206.8 936.8L204.7 938.6L205.4 938.7L207.4 938.9L210.6 940.5L211.5 941.1L213.7 940.6L218 939.5L219.2 940.6L220.6 938.6L221.7 939.1L221.6 937.4L222.2 935.3L222.5 931.7ZM200.2 796.7L200.1 797.5L199.7 800.1L200.3 803.4L200.9 803.3L201.2 804.3L201.9 807.5L205.8 807.6L208.6 806.9L210.1 808.5L211.3 807.5L214.2 805.8L215.8 804.6L217.1 806.7L219.2 806.7L220.4 805.5L219.3 802.8L219.4 799.3L221 798.4L219.3 795.1L217.4 793L217.8 790.3L217.5 789.2L216.4 787.3L212.7 787.3L211.4 788.3L209.3 791.5L208.4 791.1L207.6 790.6L204.5 793L201 795.2ZM203.1 860.5L204.8 863L204.4 864.1L207.7 864.5L210.3 866.5L209.9 867.2L212.7 866.8L216.2 868.5L215.8 869.7L217.3 866.9L218.8 865.2L219 863.7L220.5 862.5L221.8 858.7L220.9 857.3L221.8 856.8L223.8 852.7L223 850.9L219.6 848.5L218.7 847.4L220.1 846.9L217.6 844.8L215.2 842.3L215.2 841.3L212.8 843.6L209.3 841.1L205.7 842L205.4 845.8L205.7 846.7L204.5 848.2L204.2 849.5L204.1 853.4L202.8 854.1L203.2 855.1L204.5 858.5ZM199.1 909.9L201.4 910.7L202.8 911.2L204.3 911.5L207.2 912.1L210.7 911.8L211.1 910.1L214.3 911.5L216.3 910.8L218.5 908.8L221.3 905.9L219.8 904.3L218 904.4L216 902.7L217.3 898.3L217.2 895.5L213.8 895.3L213.2 894L211.5 892L209 891L206.1 891L205 889.7L205.1 892.9L203.3 893.9L201.6 895.6L201.7 899.4L199.6 900.6L198.4 901.8L198.3 905.9L197.2 907ZM214.3 911.5L213.7 914.9L215.2 917.4L214.8 918.3L213.3 919L213.2 922.4L213.1 924.4L216.9 926.7L218.4 928.3L218 928.4L220.9 929.8L222.8 931.7L225.6 929.8L225.5 926.3L225.3 925.7L227.9 925.3L231.1 924.7L232.5 923L233.9 921.3L236.3 921.2L236.4 917.7L235 914.8L234.2 913.1L233.4 911.4L232.4 911.1L229.6 910.1L227 908.2L227.5 908L224.7 908.5L221.7 906.4L221.3 905.9L218.5 908.8L216.3 910.8ZM202.1 820.8L202.9 821.7L205.6 823L208.7 823.3L208.7 824.3L211.1 825.1L214.9 824.4L214.8 825L216.8 826.9L220.8 826.3L222.4 824.3L222.6 822.1L222.6 818.3L220.8 817.7L220.1 815.2L222 812.8L221.7 808.3L219.9 807.6L219.2 806.7L217.1 806.7L215.8 804.6L214.2 805.8L211.3 807.5L210.1 808.5L208.6 806.9L205.8 807.6L201.9 807.5L203 811.3L204.3 813.4L203.1 814L203.3 815.7L204 818.4ZM205 889.7L206.1 891L209 891L211.5 892L213.2 894L216 893.3L216.7 889L218.8 887.3L222.2 886.8L223.2 884.2L221.7 881.3L221.1 880.9L220.2 880.6L219.3 876.4L220.2 873.1L218.7 871.5L217.5 870.4L215.8 869.7L216.2 868.5L215.8 869L213.2 870.3L210.4 872.6L209.4 874.3L207.1 876L204.9 878.6L204.9 880.3L203.8 881L202 882.4L201.9 884.1L201.7 886.8L203.5 888.3ZM211.4 786L213.3 782.6L214.9 780.9L214.9 779.6L216.6 778.1L218 775.2L217.4 773.1L218.3 773.2L219.7 769.7L217.8 767.3L214.5 764.9L213.8 764.4L213.8 763.5L211 761.1L210.3 759.7L210.7 759.1L207 756.9L207 759L206.6 762.7L203.1 762.8L201.8 763L199.9 764.5L199.4 766.6L198.8 769.7L196.5 770.6L196.3 771.9L196.6 776L199.5 777.2L201.5 779.4L202.1 779.4L204.5 779.9L206.1 782L207.3 782.4L210 783.3ZM217.8 790.3L219.9 790.7L222.7 789.4L223.8 788.8L226.3 787.9L227.9 786.8L229 787.1L232.1 785.3L233.7 785.1L236.1 783.9L236.2 783.6L232.1 781.4L230.4 779.4L231 777.6L229 774.5L227.5 771.5L227.4 770.9L225 770.7L222.4 767.9L220.9 768.6L219.7 769.7L218.3 773.2L217.4 773.1L218 775.2L216.6 778.1L214.9 779.6L214.9 780.9L213.3 782.6L211.4 786L212.7 787.3L216.4 787.3L217.5 789.2ZM220.4 805.5L224 803.9L224.9 803.1L226 804.5L227.5 803.5L232.4 804.7L233.5 804.4L235.6 804L235.4 800.8L235.9 800.7L237.4 798.9L237 795L237.5 794.6L239.8 793L240.5 790.6L240.9 788L240.2 787L237.1 784.6L236.1 783.9L233.7 785.1L232.1 785.3L229 787.1L227.9 786.8L226.3 787.9L223.8 788.8L222.7 789.4L219.9 790.7L217.8 790.3L217.4 793L219.3 795.1L221 798.4L219.4 799.3L219.3 802.8ZM213.2 894L213.8 895.3L217.2 895.5L217.3 898.3L216 902.7L218 904.4L219.8 904.3L221.3 905.9L221.7 906.4L224.7 908.5L227.5 908L227 908.2L229.6 910.1L230.9 905.9L232.4 904.8L231.9 904.5L232.9 900.5L234.3 898.7L233.9 898.2L235.3 895.1L237.2 892.7L237.1 891.5L236.9 889.9L236.7 888.9L232.6 887.4L229.5 887.8L229.6 886.1L226.2 884.4L222.8 885.2L223.2 884.2L222.2 886.8L218.8 887.3L216.7 889L216 893.3ZM215.2 841.3L215.2 842.3L217.6 844.8L220.1 846.9L218.7 847.4L219.6 848.5L223 850.9L224.1 850.6L225.8 851.1L227.6 849.8L231.8 850.6L233.4 848.4L234 848.4L234.7 848.6L237.6 847.8L238.1 843.8L236.4 842L237.8 840.6L239.7 838.7L237.7 835.3L235.1 835.1L233.3 833.7L231.8 833.8L229.3 833.8L227.2 831.6L225.8 830.8L223.6 831.8L221.1 830.6L219.7 829.3L220 831L218.3 831.2L217.4 835.3L217.8 837.7L216 837.6ZM219.7 829.3L221.1 830.6L223.6 831.8L225.8 830.8L227.2 831.6L229.3 833.8L231.8 833.8L233.3 833.7L235.1 835.1L237.7 835.3L239.4 834.2L242.1 834.4L242.8 831.4L242.6 830.4L244.3 830.9L245.1 828.9L244.6 825.7L241.5 823.5L240.5 822.4L240.1 820.5L241.5 818.1L238.6 816.8L236.7 818.1L234 817.3L233.3 818.3L229.9 819.8L228.3 820.6L226 820.2L225.4 819.2L222.6 822.1L222.4 824.3L220.8 826.3ZM258.4 928.9L255.6 927.3L255.5 928.2L251.9 928.9L249.1 928.4L247.4 928.3L245.8 928.1L243.3 927.5L240.3 926.2L240.7 925.1L240.8 928.6L237.9 930.7L238.5 932.4L238.9 934.2L237 938L238.8 940.8L240.6 941L241.8 940.8L242.6 939.4L247.3 939.9L248.9 939.6L250.9 938.4L252.5 940.9L255.9 941.1L256.8 940.7L257 939.4L260.3 939.7L259.3 937.5L260.1 935L259.2 934.3L259.1 931.2ZM221.7 939.1L225.4 940.9L226.2 941.1L228 940L233.1 939.8L234.4 939.9L236 938.3L238.8 940.8L237 938L238.9 934.2L238.5 932.4L237.9 930.7L240.8 928.6L240.7 925.1L238.2 925L235.7 923L236.3 921.2L233.9 921.3L232.5 923L231.1 924.7L227.9 925.3L225.3 925.7L225.5 926.3L225.6 929.8L222.8 931.7L222.5 931.7L222.2 935.3L221.6 937.4ZM229.6 910.1L232.4 911.1L233.4 911.4L234.2 913.1L235 914.8L239.2 915.3L239.7 913.7L241 914.1L242.2 912.2L246.7 911.9L248.4 911.9L249.8 911.9L250.8 910.8L253.7 908.2L256.7 909.6L258.4 907.1L257.4 904.4L257.6 902.2L258.9 901.3L256 901.7L255.4 901.3L253.6 899.1L250.9 898.1L249.1 897.6L247.7 895.6L245.9 894.5L242.9 895.1L241.5 894L240.8 892L237.1 891.5L237.2 892.7L235.3 895.1L233.9 898.2L234.3 898.7L232.9 900.5L231.9 904.5L232.4 904.8L230.9 905.9ZM215.8 869.7L217.5 870.4L218.7 871.5L220.2 873.1L219.3 876.4L220.2 880.6L221.1 880.9L221.7 881.3L223.2 884.2L222.8 885.2L226.2 884.4L229.6 886.1L229.5 887.8L232.6 887.4L236.7 888.9L236.9 889.9L238.4 886.5L238.5 885L240.6 883.5L239.7 879.4L237.6 876.8L235.5 875.5L236.7 874.2L237.5 873.2L235 870.8L233.1 866.8L231 869.5L230.8 868.4L227.4 868.1L225.1 867.6L225 866.9L220.6 865.8L217.3 866.9ZM219.2 806.7L219.9 807.6L221.7 808.3L222 812.8L220.1 815.2L220.8 817.7L222.6 818.3L222.6 822.1L225.4 819.2L226 820.2L228.3 820.6L229.9 819.8L233.3 818.3L234 817.3L236.7 818.1L238.6 816.8L239.7 813.3L241.4 810.9L238.2 810.3L237.7 808.2L237.5 805.6L235.6 804L233.5 804.4L232.4 804.7L227.5 803.5L226 804.5L224.9 803.1L224 803.9L220.4 805.5ZM223 850.9L223.8 852.7L221.8 856.8L220.9 857.3L221.8 858.7L220.5 862.5L219 863.7L218.8 865.2L217.3 866.9L220.6 865.8L225 866.9L225.1 867.6L227.4 868.1L230.8 868.4L231 869.5L233.1 866.8L236.4 865.1L237.6 864.8L237.4 860.4L237 858.6L237.7 857.2L236.9 857L238.2 853L237.1 851.1L234.7 848.6L234 848.4L233.4 848.4L231.8 850.6L227.6 849.8L225.8 851.1L224.1 850.6ZM237.1 891.5L240.8 892L241.5 894L242.9 895.1L245.9 894.5L247.7 895.6L249.1 897.6L250.9 898.1L253.6 899.1L255.4 901.3L256 901.7L258.9 901.3L260.1 900.2L262.4 898.5L264.3 897.9L263.7 896.8L263.2 892.2L263.2 889.6L261.8 888.6L260.9 887.3L260.5 886.4L262.8 882.7L261 880.4L259.6 879.2L258.1 876.7L260.1 875.3L260.1 875.3L257.7 877.3L255.2 877L253.8 876.7L251 877.4L249.3 881L248.1 881.1L246.1 879.9L244.8 881.6L241.4 883.2L238.5 885L238.4 886.5L236.9 889.9ZM237.1 784.6L237.5 782.6L238.3 779L240.7 778.5L240.9 777.1L241.9 773.6L243.9 772.6L243.6 771.7L244.5 768.4L245.1 765.2L244.7 764.4L242.6 764L239.3 762.2L238.1 762.9L235.5 763L232.8 761.9L230.6 763.3L229.8 764.5L229.2 766.5L226.6 769.4L225 770.7L227.4 770.9L227.5 771.5L229 774.5L231 777.6L230.4 779.4L232.1 781.4L236.2 783.6L236.1 783.9ZM237.6 864.8L240.9 864.3L240.9 863.4L244 862.3L247.8 864.8L249.3 864.4L251.2 864.5L249.9 861.4L250.4 859L252.8 857.5L253.1 857.1L253.1 853L254.4 851.9L254.5 850.9L250.6 850.2L249.8 848.8L248.7 847.9L244.5 847.8L243 847L242.1 847L237.6 847.8L234.7 848.6L237.1 851.1L238.2 853L236.9 857L237.7 857.2L237 858.6L237.4 860.4ZM235.6 804L237.5 805.6L237.7 808.2L238.2 810.3L241.4 810.9L242.8 811.4L244.9 811.7L245.6 810.4L249.5 807.9L252.1 809.2L253.6 809.8L253.5 809.7L254.5 806.6L255.3 803.1L252 801.7L250.8 800.7L250.7 799.1L252 796.9L249.3 793.2L246.7 790.4L248 790.8L245.5 789.5L241.8 788.1L240.9 788L240.5 790.6L239.8 793L237.5 794.6L237 795L237.4 798.9L235.9 800.7L235.4 800.8ZM233.1 866.8L235 870.8L237.5 873.2L236.7 874.2L235.5 875.5L237.6 876.8L239.7 879.4L240.6 883.5L238.5 885L241.4 883.2L244.8 881.6L246.1 879.9L248.1 881.1L249.3 881L251 877.4L253.8 876.7L255.2 877L257.7 877.3L260.1 875.3L258.8 873.8L255.7 870.5L254.1 868.1L253.9 867.7L252.7 866.6L251.2 864.5L249.3 864.4L247.8 864.8L244 862.3L240.9 863.4L240.9 864.3L237.6 864.8L236.4 865.1ZM240.9 788L241.8 788.1L245.5 789.5L248 790.8L248.9 789.2L251.6 788.4L253.4 786.9L255.4 787.9L258.3 786.5L258.6 783.8L257.8 781.5L259.4 780.3L260.9 779.8L260.3 775.7L260.5 774.8L261 773.6L258.5 772.2L257.8 771.2L254.6 770.7L251.6 769.3L250.7 768.8L247.8 769.2L244.5 768.4L243.6 771.7L243.9 772.6L241.9 773.6L240.9 777.1L240.7 778.5L238.3 779L237.5 782.6L237.1 784.6L240.2 787ZM260.1 875.3L260.1 875.3L261.3 873.2L262.5 872L264.4 870.2L264.4 867.8L265.4 866.8L267.6 866.2L267.9 862.7L268.7 861.1L271 861.3L271.5 857.5L272.2 855.2L270.7 853.7L271.5 852L269.9 850.8L267.4 849.1L266.1 845.6L264.3 845.8L260.4 846.2L259.3 847.3L258.2 846.9L255.2 848.3L254.5 850.9L254.4 851.9L253.1 853L253.1 857.1L252.8 857.5L250.4 859L249.9 861.4L251.2 864.5L252.7 866.6L253.9 867.7L254.1 868.1L255.7 870.5L258.8 873.8ZM236.3 921.2L235.7 923L238.2 925L240.7 925.1L240.3 926.2L243.3 927.5L245.8 928.1L247.4 928.3L249.1 928.4L251.9 928.9L255.5 928.2L255.6 927.3L258.4 928.9L258.5 927.9L259.4 926.5L260.8 922.7L259.9 921.2L260 919.6L260.3 917.3L260.2 914.5L256.5 912.4L255.7 911L256.7 909.6L253.7 908.2L250.8 910.8L249.8 911.9L248.4 911.9L246.7 911.9L242.2 912.2L241 914.1L239.7 913.7L239.2 915.3L235 914.8L236.4 917.7ZM238.6 816.8L241.5 818.1L240.1 820.5L240.5 822.4L241.5 823.5L244.6 825.7L245.1 828.9L244.3 830.9L249 830.1L250.9 829.7L251.7 829.7L251.9 828.4L254.3 827.3L255.4 824.1L256.2 821.9L259.2 821L260.8 818.3L261.8 816.2L264.7 816.3L263 813.8L260.7 810.9L260.1 811.1L257.4 809.5L253.5 809.7L253.6 809.8L252.1 809.2L249.5 807.9L245.6 810.4L244.9 811.7L242.8 811.4L241.4 810.9L239.7 813.3ZM237.6 847.8L242.1 847L243 847L244.5 847.8L248.7 847.9L249.8 848.8L250.6 850.2L254.5 850.9L255.2 848.3L258.2 846.9L259.3 847.3L260.4 846.2L260 844.1L260 841.2L260.3 839.1L257.4 838L254.7 836.7L255.8 835L255 833.8L253.8 832.5L251.7 829.7L250.9 829.7L249 830.1L244.3 830.9L242.6 830.4L242.8 831.4L242.1 834.4L239.4 834.2L237.7 835.3L239.7 838.7L237.8 840.6L236.4 842L238.1 843.8ZM260.3 939.7L262.9 939.6L265.4 938.6L266.6 941.3L270.8 940.9L272.4 940.3L272.3 939.2L275.5 940L277.7 939.1L279.9 939.5L281.4 941.7L285.6 940.5L288 939.8L286.2 937.5L283.2 935.8L282.7 934.3L282.8 933.1L283.5 932.2L279.8 930.8L278.3 928.1L278.4 924.9L278.2 923.2L277.2 922.7L274.4 921.7L274.7 919.4L272.8 919.2L270.5 918.7L267.7 920.3L266.4 919.4L263.6 921.7L259.9 921.2L260.8 922.7L259.4 926.5L258.5 927.9L258.4 928.9L259.1 931.2L259.2 934.3L260.1 935L259.3 937.5ZM260.7 810.9L262.7 808.2L264.9 808.4L265.3 806.2L267.3 803.5L266.2 801.5L266 800.4L265.7 798.3L268.1 795.3L265.6 793.8L264.9 792L262.7 790.5L261.7 790.7L258.9 788.3L258.3 786.5L255.4 787.9L253.4 786.9L251.6 788.4L248.9 789.2L248 790.8L246.7 790.4L249.3 793.2L252 796.9L250.7 799.1L250.8 800.7L252 801.7L255.3 803.1L254.5 806.6L253.5 809.7L257.4 809.5L260.1 811.1ZM259.9 921.2L263.6 921.7L266.4 919.4L267.7 920.3L270.5 918.7L272.8 919.2L274.7 919.4L276.5 917L277.9 915.4L278.1 914.8L278.4 911.6L279 907.3L275.6 905.9L274.3 905.9L274.8 904.5L275.7 902.1L273.9 899.5L270.9 896.7L270.6 898.3L268.8 897.3L266.1 898L264.3 897.9L262.4 898.5L260.1 900.2L258.9 901.3L257.6 902.2L257.4 904.4L258.4 907.1L256.7 909.6L255.7 911L256.5 912.4L260.2 914.5L260.3 917.3L260 919.6ZM260.4 846.2L264.3 845.8L266.1 845.6L268.4 844.9L268.7 844.4L270.4 840.2L273.1 837.9L273.8 837.9L276.2 834.6L276.1 832L273.3 831.1L274.1 830.8L274.9 826.3L274.7 823.4L271.3 821L270.1 821.3L270.1 819.8L266.4 818.2L264.7 818.3L264.7 816.3L261.8 816.2L260.8 818.3L259.2 821L256.2 821.9L255.4 824.1L254.3 827.3L251.9 828.4L251.7 829.7L253.8 832.5L255 833.8L255.8 835L254.7 836.7L257.4 838L260.3 839.1L260 841.2L260 844.1ZM244.5 768.4L247.8 769.2L250.7 768.8L251.6 769.3L254.6 770.7L257.8 771.2L258.5 772.2L261 773.6L264.5 769.2L265.4 767L264.8 767.3L264.5 763.7L265.2 761.8L264.2 760.4L264 759.1L266.1 755.6L264 754.9L260.9 756.4L257.9 756.5L256.4 755.6L256.2 753.7L252.2 755.9L250.5 755.2L249.4 756.1L247.4 756.6L247.4 758.1L246.3 760.6L244.4 763L244.7 764.4L245.1 765.2ZM264.5 769.2L264.3 771.1L266.6 772.3L270.3 771.5L270.7 772.9L272.5 774.9L276.1 775.2L277.2 776.8L278.8 778L281.5 778L284.9 774.9L285.5 772.2L285.4 772L281.1 771.6L279.2 769.8L279.5 767.6L277 767.6L275.4 766.1L275.9 763.9L274.6 759.6L274.5 757.9L273.2 757.3L272.1 754.8L268.1 754.4L266.1 755.6L264 759.1L264.2 760.4L265.2 761.8L264.5 763.7L264.8 767.3L265.4 767ZM264.9 792L268.1 791L270.8 787.8L271.3 787.6L272 787.5L275.5 785.1L277.8 784.6L279.1 784.5L281.1 780.7L278.8 778L277.2 776.8L276.1 775.2L272.5 774.9L270.7 772.9L270.3 771.5L266.6 772.3L264.3 771.1L264.5 769.2L261 773.6L260.5 774.8L260.3 775.7L260.9 779.8L259.4 780.3L257.8 781.5L258.6 783.8L258.3 786.5L258.9 788.3L261.7 790.7L262.7 790.5ZM260.1 875.3L258.1 876.7L259.6 879.2L261 880.4L262.8 882.7L260.5 886.4L260.9 887.3L261.8 888.6L263.2 889.6L263.2 892.2L263.7 896.8L264.3 897.9L266.1 898L268.8 897.3L270.6 898.3L270.9 896.7L274.1 895.8L277.2 895.7L278.3 895.8L279 892.9L281.1 891.9L282.6 891.8L283.1 889.1L283 886.9L283.5 885.1L285 885L282 882.9L281.7 878.4L279 877.6L278.8 879.3L275.8 878.6L272.4 876.6L272.7 877.5L270.1 877.8L266.5 875.3L266.4 874.4L264.5 874.9L261.3 873.2ZM261.3 873.2L264.5 874.9L266.4 874.4L266.5 875.3L270.1 877.8L272.7 877.5L272.4 876.6L275.8 878.6L278.8 879.3L279 877.6L281.7 878.4L284.1 877L284.2 877.2L286.2 873.6L288 871.2L288.1 871L286.1 867.3L286.9 864.1L286.7 862.3L282.9 861.2L282.6 859.9L282.3 857.6L278.6 858.5L275.5 857.5L275.4 854.7L272.2 855.2L271.5 857.5L271 861.3L268.7 861.1L267.9 862.7L267.6 866.2L265.4 866.8L264.4 867.8L264.4 870.2L262.5 872ZM264.7 816.3L264.7 818.3L266.4 818.2L270.1 819.8L270.1 821.3L271.3 821L275.8 822.2L278.2 820.8L278.5 819.6L279.6 818L281.3 817.7L285.5 818.1L287.9 815.7L287.2 815.2L289.1 814.5L292.1 813.6L290.5 810.6L290.9 809.6L288.2 808.3L286.6 805.7L287.3 803.9L286.4 803.5L284.4 801.9L281.5 801.3L281 801.1L278.4 802.1L275.4 802.1L272 803.7L272.3 803.8L270.4 804.7L267.3 803.5L265.3 806.2L264.9 808.4L262.7 808.2L260.7 810.9L263 813.8ZM278.8 778L281.1 780.7L279.1 784.5L280.5 784.5L280.8 786L283.1 788.6L284.9 790.6L283.4 792.4L284.8 794.9L286.6 794.4L291.1 792.2L292.2 791.3L293.6 793L294.6 792.3L297.6 790.9L295.8 788.8L295.7 785.3L293.7 784L290.6 784.1L290.7 781.5L290.7 777.7L287.6 776.9L286.5 774.9L285.5 772.2L284.9 774.9L281.5 778ZM267.3 803.5L270.4 804.7L272.3 803.8L272 803.7L275.4 802.1L278.4 802.1L281 801.1L281.5 801.3L284.4 801.9L283.8 797.5L285 797.1L284.8 794.9L283.4 792.4L284.9 790.6L283.1 788.6L280.8 786L280.5 784.5L279.1 784.5L277.8 784.6L275.5 785.1L272 787.5L271.3 787.6L270.8 787.8L268.1 791L264.9 792L265.6 793.8L268.1 795.3L265.7 798.3L266 800.4L266.2 801.5ZM327.9 916.1L325.4 916.1L321.8 915.4L321.3 916.3L318.1 914.9L315.7 915.7L314.6 916.9L313.9 918.6L310.8 916L309.5 916.7L308.9 918.3L310.9 922.7L310.4 924.2L308.2 926L309 927.5L308.8 931.6L306.7 932L307.8 933.5L309.5 934.7L308 938.7L308.4 939L309.5 941.5L310.7 941.1L314 939.6L317.7 939.3L318 939.4L321 940L323.1 939.2L325.2 941.7L325 940.9L327.8 939.3L328.4 936.9L327.7 936L328.1 935.7L328.4 932.1L329.5 929.5L328.4 926.6L326.1 926.3L327.7 922.7L327.1 920.9L326.9 919.1L328.5 919.2ZM288 939.8L287.8 939.1L288.2 937.9L290 936L290.3 933.5L289.9 930.4L292.3 928.9L293 927.9L291.6 923.5L292.5 922.4L293.1 921.7L292.6 918L293.5 916.4L293.3 915.4L291.2 912.2L287.2 912.6L286.7 911.9L284.9 912L280 912.2L278.1 914.8L277.9 915.4L276.5 917L274.7 919.4L274.4 921.7L277.2 922.7L278.2 923.2L278.4 924.9L278.3 928.1L279.8 930.8L283.5 932.2L282.8 933.1L282.7 934.3L283.2 935.8L286.2 937.5ZM270.9 896.7L273.9 899.5L275.7 902.1L274.8 904.5L274.3 905.9L275.6 905.9L279 907.3L278.4 911.6L278.1 914.8L280 912.2L284.9 912L286.7 911.9L287.2 912.6L291.2 912.2L291.7 910.7L292.8 906.8L291.9 906L292.1 905.1L294.1 900.9L292.1 899.3L292.3 899.3L289.8 898.1L288.4 895.9L288.2 894.4L287.8 893.2L286.5 890.6L283.1 889.1L282.6 891.8L281.1 891.9L279 892.9L278.3 895.8L277.2 895.7L274.1 895.8ZM272.2 855.2L275.4 854.7L275.5 857.5L278.6 858.5L282.3 857.6L282.6 859.9L285 857.5L285.7 856L287.4 854.9L290 853L290.9 850.6L292 848.7L294.7 849L296.1 848L294.5 842.9L294.9 842.2L293.4 840.3L292.1 838.4L291.8 838.2L291.9 837.1L288.1 837.5L286.2 837.9L286 836.5L282.9 835.5L280.3 834.9L278.5 835.4L276.2 834.6L273.8 837.9L273.1 837.9L270.4 840.2L268.7 844.4L268.4 844.9L266.1 845.6L267.4 849.1L269.9 850.8L271.5 852L270.7 853.7ZM283.1 889.1L286.5 890.6L287.5 889.9L289.5 888.8L291.3 888.4L293.8 889.3L296.7 887L297.1 886.2L299.5 885.3L301.2 886.6L304.8 885.6L306.1 882.8L306.9 882.9L309.2 880.8L306.4 880.1L303.9 877.7L303.5 874.8L301.5 873.7L299.6 872.1L300.2 869.2L297.8 869.3L294.3 869.3L292 869.7L290.1 869.3L288.1 871L288 871.2L286.2 873.6L284.2 877.2L284.1 877L281.7 878.4L282 882.9L285 885L283.5 885.1L283 886.9ZM271.3 821L274.7 823.4L274.9 826.3L274.1 830.8L273.3 831.1L276.1 832L276.2 834.6L278.5 835.4L280.3 834.9L282.9 835.5L286 836.5L286.2 837.9L288.1 837.5L291.9 837.1L291.8 838.2L293.5 834.6L294.8 834L292.4 831.1L292.8 828.1L292.2 824.8L291.5 825L292.3 823L293.3 820.6L293.6 817.6L291.5 816.9L292.1 813.6L292.1 813.6L289.1 814.5L287.2 815.2L287.9 815.7L285.5 818.1L281.3 817.7L279.6 818L278.5 819.6L278.2 820.8L275.8 822.2ZM282.6 859.9L282.9 861.2L286.7 862.3L286.9 864.1L286.1 867.3L288.1 871L290.1 869.3L292 869.7L294.3 869.3L297.8 869.3L300.2 869.2L300.1 869.2L301.2 865.5L303.1 863.6L302.8 864.1L304.3 860.9L305.9 858.1L305.6 858.5L307.5 855.8L307.8 853.6L304.9 851.6L302 851.6L302.3 850.4L299.9 848.8L296.2 849.1L296.1 848L294.7 849L292 848.7L290.9 850.6L290 853L287.4 854.9L285.7 856L285 857.5ZM309.5 916.7L305.4 916.5L305.4 917.6L302.8 917.3L299.5 917.6L299.6 918.9L297 916L293.5 916.4L292.6 918L293.1 921.7L292.5 922.4L291.6 923.5L293 927.9L292.3 928.9L289.9 930.4L290.3 933.5L290 936L288.2 937.9L287.8 939.1L290.4 940L292.5 938.9L294.6 940.3L295.8 941.7L299.8 940L303.1 939.5L303.1 939.3L306.3 940L308.4 939L308 938.7L309.5 934.7L307.8 933.5L306.7 932L308.8 931.6L309 927.5L308.2 926L310.4 924.2L310.9 922.7L308.9 918.3ZM284.4 801.9L286.4 803.5L287.3 803.9L286.6 805.7L288.2 808.3L290.9 809.6L290.5 810.6L292.1 813.6L292.1 813.6L292.2 813.6L293.8 812.3L295.1 811.1L298.2 810.6L300.3 808.5L299.8 805L300.3 805.1L302.6 805.2L302.6 800.8L303.2 799.8L303.3 798.1L303.4 797.8L300.2 795.9L298.5 792.7L297.7 790.9L297.6 790.9L294.6 792.3L293.6 793L292.2 791.3L291.1 792.2L286.6 794.4L284.8 794.9L285 797.1L283.8 797.5ZM300.2 869.2L299.6 872.1L301.5 873.7L303.5 874.8L303.9 877.7L306.4 880.1L309.2 880.8L309.2 878.8L309.3 876.9L311.6 876.6L313.2 876.4L314 873.6L316.7 871.8L318.9 871.6L319.4 868.3L321.1 865.6L323.6 866.7L321.9 864.8L318.4 863.9L317.4 861.1L316.9 858L314.7 856.8L313.9 855.5L313.6 853.1L310.4 853.2L307.5 855.8L305.6 858.5L305.9 858.1L304.3 860.9L302.8 864.1L303.1 863.6L301.2 865.5L300.1 869.2ZM294.1 900.9L297.6 902.4L297.9 901.8L299.3 902.4L301.7 901.8L306.3 902.2L306.9 899.3L307.1 898.8L308 897.9L310.5 894L310.9 893.2L312.4 893.4L312.8 889.9L312.3 887.6L310.9 886.3L307.3 884.5L306.9 882.9L306.1 882.8L304.8 885.6L301.2 886.6L299.5 885.3L297.1 886.2L296.7 887L293.8 889.3L291.3 888.4L289.5 888.8L287.5 889.9L286.5 890.6L287.8 893.2L288.2 894.4L288.4 895.9L289.8 898.1L292.3 899.3L292.1 899.3ZM292.1 838.4L294.6 835L298.2 835.9L301.4 836.6L300.6 834.5L303 832.8L306.1 832.1L309.5 833.4L308 830.3L309.3 826.7L310.1 826.8L308.6 823.4L309 820.4L308.8 820.2L307.6 820L303.3 817.6L302.5 817L301.9 817.9L297.7 816.5L296.2 815.4L296.1 815.2L292.2 813.6L292.1 813.6L291.5 816.9L293.6 817.6L293.3 820.6L292.3 823L291.5 825L292.2 824.8L292.8 828.1L292.4 831.1L294.8 834L293.5 834.6L291.8 838.2ZM296.1 848L296.2 849.1L299.9 848.8L302.3 850.4L302 851.6L304.9 851.6L307.8 853.6L307.5 855.8L310.4 853.2L313.6 853.1L313.4 852.3L315 851.6L316.7 848.1L316.5 847.3L317.8 847.4L319.6 843.7L319.5 842.1L318.7 840.5L314.4 839.3L313.8 839.2L314.2 838.5L313.6 836.7L311.4 834.8L309.9 834.6L309.5 833.4L306.1 832.1L303 832.8L300.6 834.5L301.4 836.6L298.2 835.9L294.6 835L292.1 838.4L293.4 840.3L294.9 842.2L294.5 842.9ZM292.2 813.6L296.1 815.2L296.2 815.4L297.7 816.5L301.9 817.9L302.5 817L303.3 817.6L307.6 820L308.8 820.2L309 820.4L312.7 820.8L314.6 820.5L315.5 819L317.9 815.7L317.5 815.6L313.6 813.3L312.1 811.5L311.9 812.9L307.3 813L305.7 808.8L304.5 807.9L301.7 805.7L302.6 805.2L300.3 805.1L299.8 805L300.3 808.5L298.2 810.6L295.1 811.1L293.8 812.3ZM293.5 916.4L297 916L299.6 918.9L299.5 917.6L302.8 917.3L305.4 917.6L305.4 916.5L309.5 916.7L310.8 916L309.6 915.4L308.1 913L309 910.2L309.7 909.5L309.6 907.4L306.2 905.6L306.7 902.5L306.9 899.3L306.3 902.2L301.7 901.8L299.3 902.4L297.9 901.8L297.6 902.4L294.1 900.9L292.1 905.1L291.9 906L292.8 906.8L291.7 910.7L291.2 912.2L293.3 915.4ZM349.2 923.3L348.2 923.7L346.1 926.8L345.8 929.9L345.1 929.7L342.7 931.8L341.9 935.2L341.3 934.6L338.7 935.5L337.4 938.9L336.9 939.3L340.5 941.3L340 941.3L341.9 939.1L344.1 939.4L347.2 939.3L347.9 940.2L350.7 939.6L354.5 941.2L355.6 941.3L356.8 938.9L355.4 937.4L357.8 936L358.4 935.9L356.5 931.8L356.8 929.6L356.2 927L355.5 926.4L355.9 922.5L354.4 925.3L350.2 923.7ZM306.9 899.3L306.7 902.5L306.2 905.6L309.6 907.4L309.7 909.5L309 910.2L308.1 913L309.6 915.4L310.8 916L313.9 918.6L314.6 916.9L315.7 915.7L318.1 914.9L321.3 916.3L321.8 915.4L325.4 916.1L327.9 916.1L328.6 913.4L331.6 912.8L327.9 911.7L323.9 910.2L323.5 909.9L321.3 908.5L317.8 907.4L316.6 908.5L319.2 905.8L319.7 904.3L320.8 901.1L322.3 899.4L321.8 898.1L322.4 896.2L324 892.7L320.8 892.6L318.9 892.1L316.2 892.7L312.4 893.4L310.9 893.2L310.5 894L308 897.9L307.1 898.8ZM309 820.4L308.6 823.4L310.1 826.8L309.3 826.7L308 830.3L309.5 833.4L309.9 834.6L311.4 834.8L313.6 836.7L314.2 838.5L316.4 837L314.9 833.8L313.4 830.4L317.7 831.1L319.9 830.9L319.1 826.7L319.6 825.3L320.3 824.5L319 820.6L317.9 815.7L315.5 819L314.6 820.5L312.7 820.8ZM306.9 882.9L307.3 884.5L310.9 886.3L312.3 887.6L312.8 889.9L312.4 893.4L316.2 892.7L318.9 892.1L320.8 892.6L324 892.7L323.8 892L325 890.5L328.8 887L328.5 887.5L329.2 886.5L329.8 882.5L330.5 880.1L327.3 879.2L327.4 878.3L327.6 876.7L327.9 871.8L327.3 870.1L327.4 868.5L326.6 867.6L324.7 867.5L323.6 866.7L321.1 865.6L319.4 868.3L318.9 871.6L316.7 871.8L314 873.6L313.2 876.4L311.6 876.6L309.3 876.9L309.2 878.8L309.2 880.8ZM313.6 853.1L313.9 855.5L314.7 856.8L316.9 858L317.4 861.1L318.4 863.9L321.9 864.8L323.6 866.7L324.7 867.5L326.6 867.6L328.8 864L326.6 862.8L327.6 861.4L326.4 859.7L327.7 855.3L327.2 853.1L325.9 851.9L324.9 850.2L325.6 847.6L327.1 845.4L325.6 845.2L321.7 842.5L320.2 841.6L319.5 842.1L319.6 843.7L317.8 847.4L316.5 847.3L316.7 848.1L315 851.6L313.4 852.3ZM327.8 939.3L332.4 939.2L333.3 940.1L336.9 939.3L337.4 938.9L338.7 935.5L341.3 934.6L341.9 935.2L342.7 931.8L345.1 929.7L345.8 929.9L346.1 926.8L348.2 923.7L349.2 923.3L348.4 923.3L345.2 921.8L344.1 918.9L344 917.1L343.5 915.8L341.6 913.1L338.8 910.5L338.7 909.9L337.1 909.5L333.6 909.2L333.1 910.1L331.6 912.8L328.6 913.4L327.9 916.1L328.5 919.2L326.9 919.1L327.1 920.9L327.7 922.7L326.1 926.3L328.4 926.6L329.5 929.5L328.4 932.1L328.1 935.7L327.7 936L328.4 936.9ZM328.5 887.5L328.5 887.7L330 886.7L333.5 883.8L334.9 882.7L338 879.9L335.7 877.4L333.8 874.9L333.4 872.2L330.2 871.8L330 871.6L330.9 868.5L328.8 864L326.6 867.6L327.4 868.5L327.3 870.1L327.9 871.8L327.6 876.7L327.4 878.3L327.3 879.2L330.5 880.1L329.8 882.5L329.2 886.5ZM356.1 903.5L356.2 902.6L355.4 901.7L354.8 897.2L354.4 895.6L353.9 893.4L350.9 895.7L349 896.7L347.1 897.3L347 895.4L342.5 896.7L341.4 898.7L341.9 902L340 903.4L342.4 902.3L344.3 904L347.5 905.6L350.1 903.6L351.6 904.6L353.6 904.3ZM349.2 923.3L350.2 923.7L354.4 925.3L355.9 922.5L356.8 920.7L357.9 919.3L356.2 919.2L355.9 915.6L356.5 913L354.3 910.9L355.5 909.5L357.3 906.1L356.1 903.5L353.6 904.3L351.6 904.6L350.1 903.6L347.5 905.6L344.3 904L342.4 902.3L340 903.4L340 903.4L340.2 905.1L340.2 908.3L338 909.9L337.1 909.5L338.7 909.9L338.8 910.5L341.6 913.1L343.5 915.8L344 917.1L344.1 918.9L345.2 921.8L348.4 923.3Z" fill="none" stroke="#2a3742" stroke-width="0.8" stroke-linejoin="round"/><path d="M152.1 768.7L153.1 768.7L154.8 768.7L158.6 765.9L161.7 764.3L161.2 766.3L163 765.7L165.5 765.3L169.7 763.5L170.2 764.2L172.3 762.7L173.6 763.6L177.1 763.2L177.3 765L179.7 765.3L182.7 767.3L184 767.3L186.2 765.6L190.9 764.9L192 767L193.4 765.1L194.3 764L198.6 763.3L200.1 763.4L202.4 763.3L203.3 762L206.7 762.3L207.5 764.8L207 767.2L205.6 766.6L205.9 769.4L208.2 772.2L207.1 775.3L208.5 776.3L208.5 778.9L207.2 782L207 783.2L205.9 783.7L205.3 784.3L203.3 784.5L198.6 786.9L197.5 786.7L196.5 786.9L195.5 787.8L192.1 788.8L189.3 790.6L188.1 792L186 793.9L185.1 794.7L183.6 793.4L181.2 794.7L178.7 794.1L177.1 795L174.6 796.3L172.5 796.5L169.8 797.7L168.6 798.2L166.9 799.6L166.4 801.1L164.4 803.7L161.2 805.5L158.2 804.5L157.5 803.2L156.1 805.6L154.6 802L152.7 801.2L154.1 798.4L153.6 795.8L153.4 793.8L149 793.3L147.3 791.3L146.9 793.1L142.6 792.5L143.4 787.9L144.2 787.4L143.5 785.1L145.5 781.7L146.9 781.6L149.5 782L149.5 777.5L150.1 776L150.2 774.8L151.6 771.3ZM251.5 756.2L254 755.3L256.8 754L257.2 756.6L258.2 756.5L262.6 756.3L264.1 755L266.4 755.9L268.7 754.1L272.1 754.8L273.2 757.3L274.5 757.9L274.6 759.6L275.9 763.9L275.4 766.1L277 767.6L279.5 767.6L279.2 769.8L281.1 771.6L285.4 772L284.8 775.2L282.1 777.7L281.6 779.3L280.1 782.4L276.1 783.7L273.9 783.4L274.2 782.9L272.8 785.5L270.1 786.3L265.8 786.3L265 784L264 786L262.5 786.5L258.5 787.6L257 786.8L254.9 788L253.2 787.6L253.2 786.6L253.7 784.3L252.7 781.4L253.8 778.5L255.6 777.4L254.6 775.3L255.5 771.1L258 770.9L256 769.3L254.6 767.9L253.5 763.9L254.6 760.9L253.2 760.8L251.5 759ZM277.7 786.4L278.3 784.5L279 784.4L281.4 780.7L281.9 778L282.7 777.9L285 775L285.4 772L286.2 774.6L287.3 776.9L290.7 777.7L290.7 781.5L290.6 784.1L293.7 784L295.7 785.3L295.8 788.8L297.7 790.9L298.5 792.7L300.2 795.9L303.4 797.8L303.3 798.1L303.2 799.8L302.8 802.2L301.7 805.7L304.5 807.9L305.7 808.8L307.3 813L311.9 812.9L312.1 811.5L313.6 813.3L316.7 815.5L317.8 815.6L317.5 816.8L319 820.6L320.3 824.5L319.6 825.3L319.1 826.7L319.9 830.9L317.7 831.1L313.4 830.4L310.9 831.3L310.4 833.1L309.6 830.4L309.8 826.6L308.4 825.7L307.2 821.8L306.3 823.5L304.9 823.8L301 821.3L301 821.7L299.7 821.7L296.6 819.3L294.7 819.9L293.1 820.9L291.4 820.3L287.1 820.6L285.2 820.7L284 820.2L279.7 818L278.3 818.8L277.9 818.7L275.6 815.4L276.6 815.2L276.7 811.6L275 809.4L277.3 807.4L278.5 807.4L277.1 803.8L278.9 801.4L278.8 800.6L276.3 797.6L277.3 794.2L277.3 791.5L277.3 790.8L277.7 789.7ZM241.9 803.8L246.2 803.1L248.8 803.4L250.8 801.5L251.8 801.6L255.6 802.6L256.3 803.5L256.8 803.7L260.7 805.7L262.4 807.1L262.8 808L265.8 807.7L267.6 810.5L268.4 811.7L267.5 811.5L269 812.6L272.4 815.9L272.2 819L274 817.3L277.9 818.7L278.3 818.8L279.7 818L284 820.2L285.2 820.7L287.1 820.6L285.5 821.1L285.7 822.3L283.9 826.6L282.6 828L282.8 828L280.8 831.3L279.7 833.5L279.9 833.3L278 836.3L276.3 838.8L277.4 841.2L279.1 841.7L282.3 842.5L277.9 843.6L274.7 847.2L275.5 848.2L275.1 849.5L275.3 851.9L273.9 855.1L270 854.2L267.7 854.5L268.6 857.4L267.5 857.8L263.8 858.6L261.9 861.5L261.9 863.7L260.4 864.6L261 867.3L261.1 869.9L259 871.4L258.8 873.2L257.8 875.9L256.8 878.1L257.3 880.6L255.7 878L254.3 875.6L251.9 874.9L253.5 874L252.9 871.4L251.7 868.5L248.9 866.4L249.2 864.9L249.9 864L248.8 863.2L246.6 860.7L244.9 856.6L246.5 854.4L246.9 854.4L247 852.2L248.8 848L248.6 847.9L249.5 846.3L248.8 843.4L247.7 840.9L246.3 839.7L248.5 836.4L249.4 834.6L252.6 834.3L251.7 833.5L251.9 831.5L250.9 826.7L251 824.7L249.7 824.7L249.2 823L247.3 820.9L248.8 817L248 814.1L246.9 814.5L244.1 812.9L245.9 809.8L246.1 806.9L244.3 804ZM185.2 795.4L187.3 793.5L189.7 790.2L192 789.6L195.2 788.2L196.3 785.9L197.2 786.4L198.5 786.7L203.8 784.4L205.2 784.5L206.8 784L207.9 783.1L210.3 781.9L212.8 778.9L213.4 778.2L215.2 780.4L216.6 780L218.2 782.6L218.3 785.6L218.2 789.2L218.9 790.8L218.3 790.3L219.3 793.2L220.8 796L218.8 797.6L215.5 799L219.8 797.9L221.4 799.6L223.3 798.9L225.1 795.2L228.6 800.2L227.7 803.8L227.5 803.5L226.7 805.6L224.9 810L222.9 810.6L223.2 810.9L221.7 815.5L222.5 816.7L223.7 817.9L225.2 818.3L223.8 821.9L223 823.8L221.6 825L220 829.6L219.6 830.4L215.4 829.8L214.7 827.6L214.7 824.4L217 821.7L214.4 820.5L213.8 820.3L213.2 816.3L214 813.2L212.9 810.3L213.8 810.4L211.3 808.9L210.3 805L210.1 802.3L208.6 801L206.8 800.3L205.1 798.4L202.4 800.2L199.5 801L196.9 801.6L196.8 799.8L194.1 800.2L190.7 798.5L191.7 795.9L188.9 795.2ZM225.1 795.2L227.7 795.2L231 796.2L231.4 793.5L231.2 791.3L233.3 790.9L236 788.9L237.7 787.3L240 787L242 787.6L244.2 787.7L247.4 790.6L244.5 790.7L243.7 791.6L241.3 793.3L237.7 794.6L243.3 797.3L243.2 799.6L242.5 803.8L242.3 803.8L241.5 805.1L240.3 803.8L237.2 804.8L234.1 805.7L231.8 806.4L230.3 803.8L227.5 803.5L227.7 803.8L228.6 800.2ZM230.2 838.5L234.4 840L237.6 840L239.9 836.7L239.4 837.4L242.7 837.4L246.1 837.5L248.5 836.4L246.3 839.7L247.7 840.9L248.8 843.4L249.5 846.3L248.6 847.9L248.8 848L247 852.2L246.9 854.4L246.5 854.4L242.9 857.9L240.5 859.7L240 860.1L237.4 862.9L237.7 865.5L235.4 863.9L234.8 863.9L232.1 862.5L229.2 860.6L228.5 860.6L226.6 859.9L228 855.6L225.6 851.4L228.4 851.7L232.4 848.6L230.1 847.4L231.5 844.7L231.5 841.4ZM246.5 854.4L244.9 856.6L246.6 860.7L248.8 863.2L249.9 864L249.2 864.9L248.9 866.4L251.7 868.5L252.9 871.4L253.5 874L251.9 874.9L254.3 875.6L255.7 878L257.3 880.6L254.8 882.6L255.6 885.2L256.8 885.1L258 889.2L256.8 892.4L255.4 892.1L252.3 891.4L251.2 891.3L250.8 890.3L246.3 890L243.8 893.1L241.6 893L241.5 892.2L237.9 891.5L236.3 891.1L236.4 890L238.9 886L238.7 883.7L239.2 883.4L240.6 880.1L240 877.4L241.5 876.8L238.6 875.4L235.6 876.8L235.6 880.5L233.7 879.8L230.7 879.1L229.2 880.5L226.2 878.5L226.3 876.1L225.5 874.6L228.3 875.2L229.1 875.4L229.8 872L234.9 872.9L237 873.9L237.6 871.1L237.6 867.8L237.7 865.5L237.4 862.9L240 860.1L240.5 859.7L242.9 857.9ZM209 851.1L210.3 851.1L212.5 848.3L213.5 846.1L217.7 849.9L218.3 852L218.8 853.7L221 856L221.9 857.5L223.4 856.5L225.2 853.1L226.7 855.8L226.6 859.9L228.5 860.6L229.2 860.6L232.1 862.5L234.8 863.9L235.4 863.9L237.7 865.5L237.6 867.8L237.6 871.1L237 873.9L234.9 872.9L229.8 872L229.1 875.4L228.3 875.2L225.5 874.6L223.5 874L222.2 870.3L222.3 866.8L218.5 866.2L217.4 867.7L212.8 864.7L212.5 863.5L209.6 860.2L207.4 858.2L207.1 857.2L209.2 856.7L208.8 853.1ZM311.6 875.6L312.4 876.4L313.8 873.8L316.1 872.5L319.6 872L320.4 874.5L323.1 874.4L325.7 873.8L328.1 873.6L328.3 873.5L327.4 877.7L325.2 878.6L325.4 879.8L323.5 882.5L322.5 885.5L325.2 886.4L325 890.5L323.8 891.9L324.1 892.7L322.5 895.9L321.7 898L322.3 899.4L320.8 901.1L317.2 899.2L315.7 897.4L314.1 897L311.2 894.2L310.6 892.3L310.5 891.4L311.9 888.7L311.3 886.3L309.8 885.1L310.6 884L310.6 879.7L309.7 877.6ZM323.5 882.5L325.7 880.3L325.7 879.1L327.8 878.3L329.7 874.4L330.1 872.5L333.7 872.4L333.8 874.9L335.7 877.4L338 879.9L334.9 882.7L333.5 883.8L330 886.7L328.5 887.7L328.8 887L325 890.5L325.2 886.4L322.5 885.5ZM295.3 904.3L297.9 903.8L298.7 902.5L300.1 902.8L303.2 904.5L304 904.7L305.7 905L310.1 907.8L310.3 908.8L309.9 910.1L308.1 911.5L309.5 915.2L310.9 915.9L306 916.5L305.4 920.2L304.4 920.5L299.8 919L296.3 922.1L296.6 920.4L295 917.7L293.6 916.5L292.9 916.2L292.4 914.2L291.9 912.3L294.5 907.8L294.2 906.5ZM275.8 909.1L278.9 906.9L280.5 907.3L281.2 908.7L283.2 907.7L286.9 908.8L289.1 905.1L289.1 905.5L291.3 904.7L295.3 904.3L294.2 906.5L294.5 907.8L291.9 912.3L292.4 914.2L292.9 916.2L292.3 916.6L293.4 918.5L296.1 922.9L295.6 925L295.5 925.5L295.8 927.1L299.3 929.2L295.3 930.6L293.7 931.7L291.8 929.5L288.8 929.5L285.4 929.3L283.6 929.9L283.5 929.4L279.7 931.9L278.1 930.3L277.3 928.3L279.1 924.5L280.6 922.2L278.9 921.8L279.8 917.6L280.6 915.8L278.4 915.2L278 914.7L278.1 911.9ZM193.9 898.1L195.7 895.7L195.9 892.7L197.6 891.5L198.6 890.3L198.2 888.6L199.7 887.2L202 886.6L202.9 885.5L205.8 885L208.2 885.7L208.3 887.9L211.3 888.7L214.5 889.1L214.1 891L216.5 891.7L220.2 891.1L220.1 892.4L221.7 894.2L225.2 894.5L225.8 895.6L223.5 898L223.1 897.7L222.1 900.7L219.5 904.7L218.5 904.4L216.5 905.1L213 907.6L211.6 907.6L212.5 908.3L210 907.9L206.8 906.6L206.3 906.2L204.1 906.4L200.4 904.5L199.9 904.2L198.2 905.5L195.1 902L193.7 898.4L193.1 897.5ZM199.9 909.3L202.8 910.1L204.8 907.8L207.1 908.8L210 908.5L212.5 908.3L211.9 909.2L212.9 912.3L214.9 915.6L215.2 917.5L215 918.3L213.7 919.5L213.7 923.5L216.4 926.2L215.2 927.9L216.1 929.9L213.7 930.1L210.4 930.3L210 931.1L207 930.4L203.5 928.1L201 930.1L199.7 929.9L200.5 927.4L201 924.9L198.4 924.1L199.1 919.8L200.3 918.5L199.4 917.5L201 916.2L201.6 912.4L200.2 910.7ZM116.2 861.5L117.9 860.1L117.4 856.9L116.5 853.2L119.4 853.3L119.8 850.6L120.2 847.2L122.3 847.4L122.7 845.5L122.8 842.6L124.7 841.6L125.3 840.4L127.8 838.5L130.8 841.3L131.9 844.7L131.6 846.1L135.2 846.9L137.2 847.5L137.7 848.7L141.6 849L139.8 850.5L141.2 851L140.4 855.4L138.2 856.8L138 857L137 860.8L132.9 861.3L130.2 860.9L128.7 860.8L128.8 862.3L123.7 864.3L121.4 862.4L120.4 863.8ZM84.6 866.3L87.2 865.2L89.1 864.5L90.4 863.2L91.8 862.4L94.5 862.6L97.3 863.4L97.9 862.8L99.2 862.1L101.2 861.6L104.9 862.8L105.1 863.7L107.6 862.9L111.5 865L113 865.5L114.6 863.3L116.2 864.1L118.6 867.5L117.6 870.1L117.5 870.2L121.1 871.9L119.1 876.4L119.7 879.1L120.4 879.5L116.8 882L114.6 883.9L112.8 883.9L110.8 886.6L112.1 890.2L109.8 889.7L108.5 887.7L106 886.5L103.6 887.2L101.7 886.5L99.8 888.3L98.9 890.2L95.3 888.4L94.9 884.7L96.2 881.8L93.6 879.4L92.9 879.4L92.9 876.8L92.2 874.6L90.4 872.4L86.9 872.1L86 869.5L87 867ZM80.7 896L81.6 894.2L83.4 895.4L86.8 894.4L89.6 893.6L91.1 894.8L91.5 895.9L95.4 896.5L96 893.9L98.2 893.8L99.8 893L102.2 893.6L105 892.2L105.4 891.2L107.7 890.7L109.4 890L112.1 890.2L114.6 887.9L115.4 888L118 887.1L121 886.7L124 887.9L123.9 886.6L125.7 885.1L129.3 883.9L133 886.6L133.3 887.4L134.1 887.7L136.6 889.8L137.5 891L138.6 891.2L141.6 893.4L143.7 895.7L143.4 898.8L141.4 900.4L140.9 901.7L139.1 903.3L137.1 906.1L138.6 907.2L142.6 907.5L143.7 909.8L144.5 911L144.9 913.4L141 915L141.5 915.6L139.4 913.9L135.6 915L132.3 916.9L131.8 918.8L131.6 920.3L130.2 921.9L130.7 925.1L130.5 927.2L128.3 927.3L128.2 931.2L127.2 930L125.8 930.7L124.5 930.2L120.3 929.8L118 928.4L117.1 929.3L114.6 931.5L112.3 930.1L110.6 930.5L111 930.3L107.3 929.6L104.9 928.8L102.4 929L101.7 931.6L97.8 930.4L95.9 930.2L95.3 930.4L94.3 929.5L91.4 929.1L89.7 926.5L89.2 926.7L91.6 924.5L90.8 921.6L90 919.9L88.4 917.8L89.3 916.2L88.3 911.8L88.5 910.8L88.1 910.5L86.8 908.6L84.7 906L84.8 904.7L82.3 903.5L79.7 900.3L80.4 898L80.6 896ZM152.5 857.3L153.5 857.3L154.1 857.3L157.8 854.7L160.5 855.1L161 856.4L162.1 858.9L164.4 859.8L165.9 860.2L167 862.3L168.1 865.9L168.8 867.8L168 868.9L169.3 872.3L168.5 874L166.9 874L167.2 878.1L164.3 880.9L164 881L164.9 882.3L169.2 884.4L170.6 884.8L170.2 886.3L173 889.7L169.4 891.4L167.5 890.6L168.2 891.1L165.5 893.7L162.3 894.1L160.1 894.6L158.4 894.2L158.9 894.2L159.5 891.5L158.4 888.2L155.7 885.3L154.3 884.8L153.8 883.5L152.4 880.7L151.8 878.9L151.7 876.3L150.2 873.7L150.3 872.8L148.4 870.3L148.2 868.3L151.3 866.1L151.6 865L150.7 862.2L151.6 860.3ZM164.3 880.9L167.2 878.1L166.9 874L169 873.1L169.6 869.8L172 871.6L174.9 872L175.7 872L177.8 873.4L180.9 874.1L182.2 875L182.3 879.7L181.4 882.6L180.3 883.1L178.9 884.7L177.1 886.5L175.6 887.1L173.5 888.2L170.8 885.5L170.2 884.8L168.6 884.3L164.9 882.2L164 881ZM144.9 913.4L147.5 911.6L150.1 914L150.8 913.5L154.5 913.7L155.8 912.6L156.7 913.1L156.8 915.4L158 917.7L157 917.4L158.8 920.6L159.6 923.6L157 926.2L157.8 927.2L157.6 930.9L156.2 930.1L154.6 930.8L149.9 930.4L148.6 930.1L147.3 928L145.7 930.2L143.4 927.5L144.7 927.4L144.9 924.7L144.1 921.8L145.8 918.2L146.4 918L145.4 915.4ZM337.3 896.4L338.5 894.1L340.5 895.7L343.1 895.9L347.3 895.7L347.1 896.3L348.9 896.2L350.7 895.2L354 893.2L354.4 895.6L354.7 896.6L355.2 900.8L356.2 902L356.1 903.2L356.6 903.6L357.3 907.3L354.8 909.9L354.9 911.6L356.8 913.4L356 916.4L357 919.2L357.8 919.3L356.8 920.7L356 922.8L355.5 926.8L357.2 927.5L357.2 930.1L352.9 928.3L352.7 930.5L350.9 931.3L348.9 930.5L346.2 929.7L345.5 929.5L343.2 929.8L338.5 928.5L337.6 931.2L339 927.3L339.2 926.6L339.2 925.4L340.6 922.9L340.3 919.7L338.8 918.2L339.8 917.2L340.6 913.2L339 911.1L339.7 909.3L341.6 908.6L340.9 906.5L338.9 903.4L337.4 902.2L338.4 900L338.2 897.8Z" fill="#89bddf" stroke="#2a3742" stroke-width="0.8" stroke-linejoin="round"/><path d="M166.5 817L167.5 812.9L170 809.8L170.1 810.1L171.8 810.1L176.4 808.4L179.3 807.3L178.5 806.5L180 804L183.8 803.2L185.8 803.8L188.4 802.4L188 802.5L191.5 800.9L194.5 800.9L197.7 799.9L198.1 802.8L201.3 803.8L200.8 804.6L200.5 807.1L200 810.7L198.5 810.6L197 812.4L196.6 815.9L192.6 815.7L189.3 815.2L189.3 816.3L188.3 818.7L185.9 820.5L182.3 818L182.3 816.6L181.1 816.2L175.4 815.3L173.8 816.1L172.4 818.2L167.7 816.3ZM180.6 873.9L183.1 871.4L183.4 867.5L185.1 866.9L187.2 865.4L187.2 862.1L189.1 861.3L190.7 860.4L191.4 859L192.1 857.1L196.6 857.6L199.5 856.3L200.5 858.7L200.8 859.2L198.9 860.7L198.3 860.9L198.6 864.6L196.9 866.7L196 867.6L197.6 868.9L198.7 872.2L197.3 874.9L196.9 873.9L192.5 876.7L189.6 878L188.2 877.3L188.1 878.4L184.3 882.8L183 879.4L182.5 875.3L182.4 874.5ZM257.3 880.5L259.5 878.8L260.7 879.7L263.4 879.8L266.4 876.2L266.2 875.3L270.3 877.8L272.4 879.8L270.5 881L271.6 882.9L272.8 886.5L274.9 887.7L272.7 890L273.5 893L273 895L272.6 895.3L273.8 897.8L271 899.2L270.5 901.2L268.4 899.9L265.4 898.8L262.8 898.6L263.7 897.6L262.6 895.4L258.6 894.2L257.9 893.8L257.6 891.4L260 886.9L257.5 886.3L257 883.1ZM271.6 882.9L273.8 879.7L274.4 879.8L274.2 877.6L275.9 874.7L276.2 873.6L275.9 872.1L279.8 874.2L281.9 874.6L282.7 876.2L285.5 878L286.6 879.2L286.2 881.6L286.6 884.7L288.7 888.2L288.1 888.4L288.1 891.8L288.8 893.7L286.3 895.8L287.9 895.9L285.9 899.6L282.5 901.7L282.8 901.5L279.6 900.2L276.8 899.7L276.8 899.5L273.8 897.8L272.6 895.3L273 895L273.5 893L272.7 890L274.9 887.7L272.8 886.5ZM282.8 870.9L284.6 870.2L286.6 871.2L289.3 870.4L291.1 872.2L289.3 873.4L287.5 876.4L287.6 879L286.8 878.4L284.8 878L282.9 876.3L281.6 874.5ZM290.1 869.5L293 867.9L294.6 868.8L298.1 867.9L299.4 866.1L299.7 870.4L303.5 872.2L305.6 871.8L303.1 873.8L302.2 876.5L301.4 878.5L298.6 879.8L297.2 881.6L295.5 882.4L293.1 882.2L291.6 882L286.8 883.6L286.8 878.4L287.6 879L287.5 876.4L289.3 873.4L291.2 872.5ZM286.8 883.6L291.2 882.3L292.4 882.4L294.9 882.2L296.6 884.2L298.8 884.9L297.2 885.9L298.2 887.1L298.1 890.3L295.9 892.1L294.6 892.9L294.7 894.5L293.2 897.9L291.8 899.3L290.4 898.3L287.9 895.9L286.5 895.8L288.5 893.8L288.8 892L287.9 888.7L289.9 888.9L289.1 886.3ZM291.8 899.3L293.2 897.9L294.7 894.5L294.6 892.9L295.9 892.1L298.1 890.3L302.2 892.2L304.2 892.5L304.1 889.8L304.4 890.6L307.9 890.4L309 892.5L310.4 893.1L311.4 895.9L313.6 897.8L314.8 898.2L315.7 899.4L313.8 901.8L313.4 901.8L312.4 903.7L310.7 906.2L306.1 905.1L304.1 904.2L303.2 904.5L300.5 902.8L298.8 904.3L297.6 904L295.1 902L293.4 899.6ZM305.3 856.8L305.6 857.3L308.5 856.3L312.4 854.2L314.4 854.9L315.1 855.4L316.6 855L320 855.3L321.1 855.1L323.4 853.9L325.9 852.3L326.9 855.4L326.5 859.5L327.6 861.4L326.8 862.7L327.8 862.8L328.9 864.6L331.1 869L329.9 871.7L330.2 871.8L327.6 872.2L327.1 870.2L324.5 872.8L321.6 873.4L321.4 873.4L317.6 871.6L314.4 873.2L312 874.1L312.1 874.6L308.3 874.6L306.7 872.1L305.2 869L306.4 866L305.9 865.4L303.4 864.2L304.9 861.3L305.1 857.7ZM315.3 852L317.9 849.2L317.9 848.6L320.3 845.8L324.4 845.9L327 845.4L325.6 848L324.1 850.2L325.5 852.2L325.9 852.3L323.5 853.5L321.6 854.7L319.6 853.9L316.4 855.1L314.1 854.7Z" fill="#f0f0fb" stroke="#2a3742" stroke-width="0.8" stroke-linejoin="round"/><path d="M221.6 756L223.8 756.7L226 754.1L226.8 755.2L229.3 756.5L233.9 756.7L234.6 756.2L236.7 756.2L239 756.1L241.3 753.9L241.8 756L243.5 756.6L248.2 756.7L249.3 756L251.5 756.2L251.5 759L253.2 760.8L254.6 760.9L253.5 763.9L254.6 767.9L256 769.3L258 770.9L255.5 771.1L254.6 775.3L255.6 777.4L253.8 778.5L252.7 781.4L253.7 784.3L253.2 786.6L253.2 787.6L249.4 787L249.7 787.2L247.8 787.3L243.9 785.4L243.4 785.2L242.1 785.2L238.4 783.1L237.1 781.5L236.2 781.3L233.3 779.4L231.4 777.6L230.5 777.8L228.7 777.3L226.6 775.3L225.2 774.9L224.6 774.5L224.5 770.1L222.1 768.3L221.7 766.7L223.7 764.3L222.6 761.9L222.9 760.1L222 759.8ZM237.7 794.6L241.3 793.3L243.7 791.6L244.5 790.7L247.4 790.6L249.4 789.5L250.2 788.1L253.2 787.6L254.9 788L257 786.8L258.5 787.6L262.5 786.5L264 786L265 784L265.8 786.3L270.1 786.3L272.8 785.5L274.2 782.9L277.7 786.4L277.7 789.7L277.3 790.8L277.3 791.5L277.3 794.2L276.3 797.6L278.8 800.6L278.9 801.4L277.1 803.8L278.5 807.4L277.3 807.4L275 809.4L276.7 811.6L276.6 815.2L275.6 815.4L277.9 818.7L274 817.3L272.2 819L272.4 815.9L269 812.6L267.5 811.5L268.4 811.7L267.6 810.5L265.8 807.7L262.8 808L262.4 807.1L260.7 805.7L256.8 803.7L256.3 803.5L255.6 802.6L251.8 801.6L250.8 801.5L248.8 803.4L246.2 803.1L241.9 803.8L243.1 802.4L243.4 798.9L243.3 797.3ZM238 914.7L239.7 913.6L239.5 911.2L241.9 910.9L242.6 912.3L245.8 912.7L247.1 916.1L246.9 920.3L249 921.8L249.3 921.3L249.9 922.8L251.3 926.3L252 928.8L253.6 930.2L249.9 931.9L248 929.5L247 929L246.1 929.6L243 929.8L239.6 930.1L239.1 930.4L235.7 931.8L237.1 928.6L236.6 925.8L234.6 922.7L236.5 922.4L237.8 919.1L236.6 916.5ZM110.8 823.3L112.6 823.9L116.2 821L116.8 824.2L115.9 827.2L115.2 828.2L115 830.1L112.6 834.1L112.1 834.4L111.9 835.5L109.9 839.8L110.2 840.7L109.4 841.2L109.2 839.9L106.3 839.5L105.7 839.5L107.1 837L107.8 832.9L106.4 832.5L107.8 830.3L109.4 826.5L109.4 825.2ZM132.1 845.3L132 842.2L133.7 839.5L135.5 840L135.4 837.2L136.8 834L138.7 833.8L138.5 831.7L140.9 828.5L143.9 827.6L145.7 827.6L146.6 826.5L148 824.7L151.1 823.4L153.6 824.8L155.4 827.2L156.5 826.4L157.5 827.9L158.9 830L158.9 834L156.4 835.3L155.5 837.5L154.5 839L150.7 840.1L148.1 841.9L147.2 844.1L145.7 845.8L144.1 844.7L142.7 844.5L141.8 848.2L137.9 847.3L137.4 844.9L135.9 845.2ZM140.4 855.4L141.6 851.1L141.7 850.4L144 849.7L144.4 845.7L144.2 847.5L147.9 846.6L150.1 847.3L150.4 849.6L153 850.8L155.8 850.8L156.3 852.4L157.8 854.7L154.1 857.3L153.5 857.3L152.5 857.3L148.1 858L146.6 856.5L143.1 857.6L140.8 856.9ZM117.1 865.4L119.9 865.1L119.5 863.4L121 863.5L123 863.9L127.4 863.3L129.1 861.6L128.9 859.9L130.5 861.4L132.9 861.3L137 860.8L136.4 862.7L136.4 865.4L139 866.6L138.4 870.1L140.7 868.2L141.2 869.2L145.4 870.5L147.9 869.9L147.9 871.2L146.5 871L145.6 873.4L145 877L142.5 876.4L139.3 876.6L138.1 879.4L137.1 879.8L134.4 880.5L132.8 883.4L133 886.6L129.3 883.9L125.7 885.1L123.9 886.6L124 887.9L121 886.7L118 887.1L115.4 888L114.6 887.9L112.8 883.9L114.6 883.9L116.8 882L120.4 879.5L119.7 879.1L119.1 876.4L121.1 871.9L117.7 870.1L117.6 870.5L117.7 868.8ZM137.1 906.1L139.1 903.3L140.9 901.7L141.4 900.4L143.4 898.8L147 900.3L147.2 902.2L150.6 898.7L152.6 898.6L154.9 899L156.5 898.7L157.7 896.1L160.5 893.8L161.9 895.7L164.7 895.1L167.6 891.7L167.7 891.3L169.8 891.6L172.6 890.7L175.5 890.1L175.7 890.4L179.4 891.1L182.9 891L182.9 892.1L186 893.6L189.7 893.9L189.6 894.9L190.4 896.2L191.9 897.7L192.3 900L193.8 901.9L195.6 904.8L197.3 906.7L194.6 907.5L192.9 909.1L193 911.9L193.9 914.6L193.3 914.8L194.8 915.1L193.6 916.1L191.2 915.4L188.5 913.6L187.7 913.6L185.4 912.4L182.5 911.1L181.6 911.8L179.7 910.9L176.6 908.6L175.4 908.2L173.8 910.6L171.4 908.2L166.5 908.5L166 910.7L165.1 911.9L163.3 911.7L158.6 910.5L156.7 913.1L155.4 913.7L152.5 913.4L150.7 913.4L149 911.4L144.5 911L143.7 909.8L142.6 907.5L138.6 907.2Z" fill="#5c9dd1" stroke="#2a3742" stroke-width="0.8" stroke-linejoin="round"/><path d="M264.9 899.9L268.2 900L269.6 902.1L271.6 899.7L274.1 899L276.9 899.9L276.8 899.6L279.7 900.4L283.1 902.5L283.1 902L285.4 902.6L288.7 901.7L292.3 900.6L292.5 901.5L295.3 904.3L291.3 904.7L289.1 905.5L289.1 905.1L286.9 908.8L283.2 907.7L281.2 908.7L280.5 907.3L278.9 906.9L275.8 909.1L273.4 910.6L270.9 911L270.3 909L267.8 908.7L267.2 906.5L267.7 902.7ZM137 860.8L139.2 858.3L140 859.6L142.9 859.9L146.6 856.5L148.1 858L152.5 857.3L151.6 860.3L150.7 862.2L151.6 865L151.3 866.1L148.2 868.3L148.4 870.3L147.6 870.4L145.7 869.6L141.4 868.8L140.9 868L138.4 870.1L139 866.6L136.4 865.4L136.4 862.7ZM132.8 883.4L134.5 880.5L137.5 879.9L138.5 880L140.1 877.5L144 877L145.7 877.1L144.8 873.9L146.3 872.1L150.3 872.8L150.2 873.7L151.7 876.3L151.8 878.9L152.4 880.7L153.8 883.5L154.3 884.8L155.7 885.3L158.4 888.2L159.5 891.5L158.9 893.7L157.7 896.1L156.5 898.7L154.9 899L152.6 898.6L150.6 898.7L147.2 902.2L148.3 900.6L146 897.8L144.1 896.4L143.7 895.7L141.6 893.4L138.6 891.2L137.5 891L137.5 889.3L136.7 886.7L134.4 885Z" fill="#3673b2" stroke="#2a3742" stroke-width="0.8" stroke-linejoin="round"/><path d="M95.4 896.5L96.8 896.8L95.9 898.5L97.7 901.2L99.4 903.2L99.4 903.2L99.9 902.7L102.5 903.8L105.5 904.3L106.7 904.4L109 906.2L112.1 907.2L114.1 907.1L114.1 907.1L113.7 909.7L115.1 910.6L117.9 913.8L117.9 913.8L115.3 916.3L114.8 917L113.2 920.2L110.6 923L110.3 922.5L108.2 924.7M114.1 907.1L116.5 907.5L118.3 904.6L121.6 904.3L122.2 905.2L122.2 905.2L124.6 906.9L127.8 905.3L129.8 906L131.5 907.4L134 905.6L134 905.6L137.4 905.1L137.1 906.1M117.9 913.8L119.2 911.4L119.9 913.2L121.6 913.4L125.2 912.6L127.1 911.4L128.9 911.2L128.9 911.2L131.4 912.4L132.2 913.7L132.3 916.9M99.4 903.2L97.3 905.2L94.2 905.1L92.2 904.2L90.1 905.2L90.1 905.2L87.4 906.3L84.4 905.3M94.9 884.7L96.2 883.5L97.4 883.6L100.5 880.6L103 877.5L104 878.3L104 878.3L105.4 879.1L107.2 879.3L110.4 878.3L113.7 878.9L114.3 878.3L117.7 877.1M169.3 900.3L168.6 901.8L168.6 905.3L169 907.1L170.2 907.8M278.4 915.2L282.2 915.2L283.8 915.3L284.6 915.8L288.3 914L290.8 914L293 916.2M342.3 907.9L345.9 908L347.1 905.9L349 907.2L350.6 907.6L355.2 907.5L357 904.2" fill="none" stroke="#2a3742" stroke-width="0.8"/></g><path d="M207.6 755.9L270.6 755.4L274.3 758.5L275.3 765.8L284.2 773.6L289.4 778.3L294.6 786.7L297.7 790.8L301.9 797.1L304.5 800.2L302.9 805.4L306.6 810.1L307.6 813.2L314.4 812.7L319.6 820.5L318.5 829.4L314.4 831.5L314.4 839.5L325.8 843.7L326.9 860.4L331 871.8L335.2 875L336.8 880.2L330 887.5L324.8 889.5L319.6 901L317 908L328 912L338 909L340 903L343 896.6L355.5 895.2L357 940L91 940L91 922L88.7 911.4L84.1 904.5L79.5 898.8L80.1 894.7L94.5 895.3L103.7 895.3L111.7 889.6L103.7 886.1L97.9 889.6L92.2 890.7L88.7 883.8L84.7 874.6L84.1 866.6L86.4 862L92.2 862L89.9 855.7L83 852.8L79 849.3L79.5 843.6L89.9 839.6L97.9 841.3L106 840.1L110.6 822.9L114 822.3L117.4 822.2L126.5 818.2L128.5 813L136.7 802L139.7 793.8L143.8 790.8L145.2 783L150.1 780L152 769.3L157.9 766.4L176.4 762.7L185.2 767.1L206 762Z" fill="none" stroke="#2a3742" stroke-width="1" stroke-linejoin="round"/></g>
<g fill="#fff" stroke="#d8d8d6" stroke-width="1.4"><rect x="375.9" y="745.6" width="28.4" height="55" rx="4.5"/><rect x="375.9" y="808.2" width="28.4" height="28" rx="4.5"/><rect x="375.9" y="844.2" width="28.4" height="28" rx="4.5"/></g><path d="M375.9 773.5h28.4" stroke="#ddd" stroke-width="1"/><path d="M385.5 759.9h9.2M390.1 755.3v9.2M385.5 786.4h9.2" stroke="#333" stroke-width="2.5" stroke-linecap="round" fill="none"/><path d="M381.1 813.4L388.4 813.4L381.1 820.7ZM399.1 813.4L391.8 813.4L399.1 820.7ZM381.1 831L388.4 831L381.1 823.7ZM399.1 831L391.8 831L399.1 823.7Z" fill="#333"/><path d="M384.1 816.4L388.7 820.8M396.1 816.4L391.5 820.8M384.1 828L388.7 823.6M396.1 828L391.5 823.6" stroke="#333" stroke-width="3.1" fill="none"/><rect x="382" y="850.3" width="4.1" height="3.7" fill="#7f2704"/><rect x="387.9" y="851.2" width="9.2" height="2" rx="0.8" fill="#111"/><rect x="382" y="855.8" width="4.1" height="3.7" fill="#d94801"/><rect x="387.9" y="856.7" width="9.2" height="2" rx="0.8" fill="#111"/><rect x="382" y="861.3" width="4.1" height="3.7" fill="#fd8d3c"/><rect x="387.9" y="862.2" width="9.2" height="2" rx="0.8" fill="#111"/>
</svg></section>
<section><div class="card" style="left:424px;top:699px;width:476px;height:402px"></div>
<span class="t" style="left:432.6px;top:710.77px;font-size:13.5px;font-weight:bold;color:#333e4b;transform:scaleX(0.8990);">ANC: LLITN coverage district and facility</span>
<div class="mb" style="left:862px;top:704px"><i style="left:10.2px"></i><i style="left:14.4px"></i><i style="left:18.6px"></i></div>
<svg width="1536" height="922" viewBox="0 0 1536 922" style="left:0;top:0">
<clipPath id="mc2"><rect x="429" y="737" width="466.6" height="190"/></clipPath><g clip-path="url(#mc2)"><g transform="translate(445.2 0)"><rect x="-40" y="730" width="520" height="200" fill="#fafaf8"/><path d="M-30 730L-16.2 737L-9.7 739.6L-0.6 744.8L9.8 751.3L17.6 757.8L22 761L29.7 768.9L36.2 772.2L38.8 777.4L47.3 776.1L49.9 781.3L49.3 789.1L46 795.6L51.9 795.6L59.7 804.7L66.8 811.2L67.5 821.6L76.6 825.5L78.5 833.4L83.1 836L78.5 841.2L79 849.3L83 852.8L89.9 855.7L92.2 862L86.4 862L84.1 866.6L84.7 874.6L88.7 883.8L92.2 890.7L97.9 889.6L103.7 886.1L111.7 889.6L103.7 895.3L94.5 895.3L80.1 894.7L79.5 898.8L84.1 904.5L88.7 911.4L91 922L91 940L-30 940Z" fill="#d4dadc"/><g fill="none" stroke="#e7c8cc" stroke-width="0.9" stroke-dasharray="1.2 2.2"><path d="M21.5 742.2L26.8 748.7L35.9 753.9L44.3 757.2L45 763"/><path d="M50.2 778.7L56.7 785.2L63.2 787.1L61.9 798.2L59.3 802.1"/><path d="M0 737L4 741"/><path d="M186 737 C190 748 186 756 188 764"/><path d="M240 737 C244 742 242 750 246 755"/><path d="M330 737 C336 752 326 768 332 782 S346 800 344 815 352 830 366 826 392 812 412 818"/><path d="M318 838 C330 836 338 842 346 856 S340 880 348 890 370 900 380 922"/><path d="M420 737 C414 752 424 764 416 776 S430 800 452 796"/></g><g fill="none" stroke="#ecebe8" stroke-width="1"><path d="M60 737 C70 760 95 765 110 790 S120 815 140 800"/><path d="M120 737 C140 755 150 748 170 752"/><path d="M300 737 C315 760 330 765 336 800 S350 850 372 880 380 905 378 922"/><path d="M360 737 C372 770 395 790 400 830 S410 880 440 900"/></g><text x="84" y="755.2" font-size="10" font-weight="bold" textLength="32.2" lengthAdjust="spacing" fill="#a2b0be" stroke="#fff" stroke-width="1.4" stroke-linejoin="round" paint-order="stroke">Kindia</text><rect x="118.2" y="750.8" width="2.2" height="2.2" fill="#a2b0be"/><text x="-15.6" y="804.4" font-size="10" font-weight="bold" textLength="55.8" lengthAdjust="spacing" fill="#a2b0be" stroke="#fff" stroke-width="1.4" stroke-linejoin="round" paint-order="stroke">CONAKRY</text><rect x="42.1" y="800" width="2.2" height="2.2" fill="#a2b0be"/><text x="14.7" y="900.7" font-size="10" font-weight="bold" textLength="62" lengthAdjust="spacing" fill="#a2b0be" stroke="#fff" stroke-width="1.4" stroke-linejoin="round" paint-order="stroke">FREETOWN</text><text x="306.5" y="834.4" font-size="10" font-weight="bold" textLength="61.3" lengthAdjust="spacing" fill="#a2b0be" stroke="#fff" stroke-width="1.4" stroke-linejoin="round" paint-order="stroke">Kissidougou</text><rect x="370.2" y="830" width="2.2" height="2.2" fill="#a2b0be"/><text x="383.1" y="893.4" font-size="10" font-weight="bold" textLength="43.1" lengthAdjust="spacing" fill="#a2b0be" stroke="#fff" stroke-width="1.4" stroke-linejoin="round" paint-order="stroke">Macenta</text><rect x="428.2" y="889" width="2.2" height="2.2" fill="#a2b0be"/><clipPath id="co2"><path d="M207.6 755.9L270.6 755.4L274.3 758.5L275.3 765.8L284.2 773.6L289.4 778.3L294.6 786.7L297.7 790.8L301.9 797.1L304.5 800.2L302.9 805.4L306.6 810.1L307.6 813.2L314.4 812.7L319.6 820.5L318.5 829.4L314.4 831.5L314.4 839.5L325.8 843.7L326.9 860.4L331 871.8L335.2 875L336.8 880.2L330 887.5L324.8 889.5L319.6 901L317 908L328 912L338 909L340 903L343 896.6L355.5 895.2L357 940L91 940L91 922L88.7 911.4L84.1 904.5L79.5 898.8L80.1 894.7L94.5 895.3L103.7 895.3L111.7 889.6L103.7 886.1L97.9 889.6L92.2 890.7L88.7 883.8L84.7 874.6L84.1 866.6L86.4 862L92.2 862L89.9 855.7L83 852.8L79 849.3L79.5 843.6L89.9 839.6L97.9 841.3L106 840.1L110.6 822.9L114 822.3L117.4 822.2L126.5 818.2L128.5 813L136.7 802L139.7 793.8L143.8 790.8L145.2 783L150.1 780L152 769.3L157.9 766.4L176.4 762.7L185.2 767.1L206 762Z"/></clipPath><path d="M207.6 755.9L270.6 755.4L274.3 758.5L275.3 765.8L284.2 773.6L289.4 778.3L294.6 786.7L297.7 790.8L301.9 797.1L304.5 800.2L302.9 805.4L306.6 810.1L307.6 813.2L314.4 812.7L319.6 820.5L318.5 829.4L314.4 831.5L314.4 839.5L325.8 843.7L326.9 860.4L331 871.8L335.2 875L336.8 880.2L330 887.5L324.8 889.5L319.6 901L317 908L328 912L338 909L340 903L343 896.6L355.5 895.2L357 940L91 940L91 922L88.7 911.4L84.1 904.5L79.5 898.8L80.1 894.7L94.5 895.3L103.7 895.3L111.7 889.6L103.7 886.1L97.9 889.6L92.2 890.7L88.7 883.8L84.7 874.6L84.1 866.6L86.4 862L92.2 862L89.9 855.7L83 852.8L79 849.3L79.5 843.6L89.9 839.6L97.9 841.3L106 840.1L110.6 822.9L114 822.3L117.4 822.2L126.5 818.2L128.5 813L136.7 802L139.7 793.8L143.8 790.8L145.2 783L150.1 780L152 769.3L157.9 766.4L176.4 762.7L185.2 767.1L206 762Z" fill="#f0634e"/><g clip-path="url(#co2)"><path d="M159.3 766.5L161.3 765.5L162 766.6L163.3 765.7L166.9 765.7L169.5 764.1L170.9 764.2L172.7 762.8L175.3 763.5L176.4 765L178.1 765.2L181.3 766.1L182.6 767.9L184 767.3L186 765.6L190.7 764.9L191.8 767L193.3 765.4L193.8 764.7L197.6 763L199.6 764L201.6 762.9L202.9 763.1L205.2 762.3L207.5 765.6L206 767.1L205.6 766.8L205.3 769.7L207.3 771.8L206.9 774.7L207.7 776L208.9 777.7L207.5 781.4L207.2 782.5L205.5 784.1L205.6 782.8L204.3 783.8L199.6 785.8L197.6 786.5L196.9 787.2L196 786.3L194.4 788.7L190 789.7L189.6 790.2L187.7 794.2L185.5 797L185.1 794.8L184.5 795.3L182 796.6L178.5 799.4L175.4 798.2L176.1 797.1L174.3 798.8L171.8 799.4L169.2 797.3L168.1 797.3L166.2 798.7L162.5 797.1L161.5 795.5L160.3 796.2L156 795.2L154.8 793.1L154.2 792.8L149.4 792.4L147.5 790.7L146.9 791.2L142.8 791.5L144.1 787.7L144.4 787.3L143.5 785.2L145.2 781.5L146.8 781.1L146.8 780.4L149.1 776.4L150.1 775.3L150.6 775.6L153.3 771.8L155.2 769.4L156.3 769.6Z" fill="#f0634e" stroke="#3a2a2a" stroke-width="0.8" stroke-linejoin="round"/><path d="M138.9 833.5L142 833.7L143.1 832.9L143.9 830.1L145.7 829.9L146.1 829.4L145.8 827.4L147.7 824.9L152.2 823.2L154.1 825.5L155.6 825.2L155.1 824.2L158.8 821.3L159.3 825.7L161.6 828.6L160.4 829.8L159.3 831.2L160.4 832L160 836.1L157.8 836.8L156.6 837.5L156.7 841.2L155.1 842.4L154 844.1L157.4 844.1L159 845.8L158 850.4L157.9 853.2L159.5 853.1L162.9 854.1L161.4 856.8L161.2 859.7L163.3 862.5L165.5 864L165.9 864.4L163.7 866.4L165.5 870.5L167.1 872.4L167.7 874.2L166.9 874.1L167 877.5L165.3 880.1L163.6 880.4L163.6 884L161.2 887.3L160.1 886.7L159.6 888.3L156.8 891.1L154 890.6L153 891.5L151 895.1L149.2 896.7L149.7 897.4L148.7 897.4L145.2 897.7L141.9 899.8L140.1 900.1L140.1 899.2L137 897.9L133.9 897.6L134.4 897L131.7 896.5L128.3 897L128.3 896.4L126.1 895.6L123.8 896.3L120.8 897.8L119.3 900.1L117.7 901.9L116 902.3L116 902.2L113.3 903.4L111.3 904.5L108.8 904.9L108.4 902.9L104.6 903.9L102.4 902.7L103.4 900.3L101.3 899.4L97.1 898.4L96.7 895.3L96.4 892.7L93.8 891.7L93.4 889.4L93.3 886.6L89.8 885.8L89.6 885.3L89.8 881.7L89.6 877.8L88.2 877L87 876.1L87 874.5L85.9 872.1L86.2 868.1L84.8 866.1L85.6 865.6L85.4 862.9L87.5 859.5L88.5 859.6L88.1 857.3L91.2 855.3L94.3 856.7L95.2 855.7L94.9 854.3L98.8 853L101.9 852.5L104.1 853.5L104.1 851.1L105.1 848.9L109.9 849.6L112.1 849.2L112.4 845.8L115.2 844.2L116.2 845.1L120.7 846.6L121.9 846.8L122.6 847.3L126.1 848.9L127.3 845.7L128.7 844.3L131.5 844.4L132.2 844.5L132.4 842.3L134.6 839.8L136.6 839.6L137 837.3Z" fill="#fdc16e" stroke="#3a2a2a" stroke-width="0.8" stroke-linejoin="round"/><path d="M214.8 827.6L217.8 830.8L220.1 831.2L220.3 829.7L222.5 825.9L224.2 825.5L224.1 827.6L224.1 829.1L225.6 832.3L226 833.9L225.9 834.1L223.9 836.2L226.6 836.6L230 837.9L233.2 836.9L233.1 837.1L236.1 836.8L237.8 835.3L240 834.9L240.5 836.5L244.9 837.3L247.7 835.1L248.9 834.9L247.9 838.2L248.1 840.6L248.6 841.7L251.2 842.2L250.2 845.7L249 847.1L250 849.3L249.6 850.5L250.5 853.8L250.9 857.1L252.6 857.5L251.7 858.7L249.7 859.7L251.6 863.9L252 866.1L252.8 867.6L252.8 869.5L253.4 871.5L253 874.5L251.1 874.4L253.6 876.4L255 879.2L255.7 882.4L253.6 885.1L255.5 884.7L256.4 885.8L258 889.5L256.9 892.4L256.5 892.4L252.8 891.3L252 892.1L250 891.7L248.3 891.5L243.7 893.5L242.6 894L241.6 893.4L240.8 891.3L237 893.3L235.5 893.5L233 895.2L232 894.2L228.9 895.3L227.4 896.3L225.4 896.9L223.4 898.1L223.1 898L221.8 900.9L219.5 904.8L219.5 905.3L217.4 907.6L214.5 909.1L211.7 907.4L211.8 908L209.7 908L206.8 906.2L205.9 906.7L204.4 906.8L201.9 905.9L199.5 905.3L198.2 906.2L196.2 905.2L193 903.3L191.3 904.7L189.2 904.3L187.2 904.6L184.4 905L184.1 906.9L181.5 907.6L179.4 906.1L175.5 906.5L175.3 908.1L174.3 910.5L172.3 908.6L168 908.4L165.7 908.8L165.7 911.7L164.4 910.9L161.7 911.2L157.7 910.7L157.2 911.3L155.3 909.7L151.3 909.7L150.6 911.7L149.1 910.5L147 909.5L145 908.2L146.3 905.5L146.4 903.2L146.4 902.6L144.5 899.3L148.4 898.6L150 897.1L149.1 896.9L150.8 895.8L154.5 892.2L156.2 892.3L157.2 893.5L160.3 891L162 888.8L161.8 887.4L163.4 885.3L164.7 882.3L164.2 881L166 879.2L166.8 876.2L168.7 877.4L172.8 878.5L173.2 878.7L174.4 880.4L178.7 880.8L178.9 881.1L180.5 880.5L182.1 881.3L186.5 878.7L188.4 878.2L188.7 878L189.8 879.8L192.7 877.7L196.6 874.5L197.7 874.8L198.4 873.5L200.1 870.8L200.9 871.1L202.5 870.4L205.7 866.3L205.6 864.9L204.4 863.9L205.7 862.2L206.8 859.2L206.9 857.3L208.3 857.4L208.8 853.6L208.7 851.6L210.7 850.2L211.6 848.7L210.1 845.5L210.8 842.8L212.2 842.9L211.5 839.2L211.7 836.6L212.2 835.4L211.7 833.5L213 830.8Z" fill="#c8305b" stroke="#3a2a2a" stroke-width="0.8" stroke-linejoin="round"/><path d="M206.8 756.3L209.4 757.2L210.8 754.6L212.3 754.7L215.1 756.3L219.2 756.5L219.5 756.7L221.3 755.9L222.9 756.9L226.1 754.7L225.9 754.4L228.5 756.3L231.7 756.5L234.7 756.6L235.5 755.6L237.1 756.5L240.4 754.9L241 754.1L242.3 756.3L244.1 756.5L248.7 756.6L249.6 755.3L251.7 756L253.6 755.1L256.8 753.9L256.8 756.2L258 756.5L261.2 756.5L263.9 755.1L265.7 755.4L267 755.3L271.1 753.8L272 756L272.8 757.3L272.8 759L274.4 762.2L276.4 764.8L277 766.9L279.7 767.3L282.3 768.5L281.4 770.7L282.6 771.3L285.8 771.4L285.5 773.2L286.6 774.8L290.7 775L291.6 776.1L291.7 779.6L291.8 783L293.5 784.3L296.1 784.9L295.6 786.3L297.2 788L298.7 789.6L298.6 791.8L300 794.7L301.4 796.8L304 797.5L303.7 798.6L302.7 800L303.8 803.1L305.3 807.2L304.7 807.7L306.3 808.8L305.7 809.8L307.5 812.2L311 814.4L310.9 814.8L311.5 817L315.4 819.2L316.3 819.5L316.5 820.9L315.3 822.6L313.8 823.5L315 827.9L315.5 829.3L313.8 830.7L314.4 833.3L316 836.5L314.4 838.3L315 838.4L316.7 838.8L319.3 841.2L320.4 841.6L323.6 843L323 843.7L320.8 845.8L318.3 848.7L317.8 849L316.5 850.8L314.3 854.8L314.1 854.9L314.2 853.6L310.7 852.4L307.9 854.8L307.5 854L303.8 854.1L300.9 855.1L298.8 853.8L298 852.8L295.5 852.1L292.6 852L294.3 850.3L294 847.2L290.9 845.4L289.9 847.5L288 845.7L285.9 845.4L281 845.8L280.5 847.5L279.3 846.8L277.8 848.4L276.5 848L275.4 851.3L275.7 854L274.6 854.6L274.2 856.6L272 859L269.7 860.7L266.1 859.9L264.9 859.7L265.5 863.4L261.8 864.9L258.1 863.2L257 864.7L256.9 867.8L254.6 868.1L254.1 870.5L254.3 873.2L253.1 875.2L253.6 876.4L251.1 874.4L253 874.5L253.4 871.5L252.8 869.5L252.8 867.6L252 866.1L251.6 863.9L249.7 859.7L251.7 858.7L252.6 857.5L250.9 857.1L250.5 853.8L249.6 850.5L250 849.3L249 847.1L250.2 845.7L251.2 842.2L248.6 841.7L248.1 840.6L247.9 838.2L248.9 834.9L247.7 835.1L244.9 837.3L240.5 836.5L240 834.9L237.8 835.3L236.1 836.8L233.1 837.1L233.2 836.9L230 837.9L226.6 836.6L223.9 836.2L225.9 834.1L226 833.9L225.6 832.3L224.1 829.1L224.1 827.6L224.2 825.5L222.5 825.9L220.3 829.7L220.1 831.2L217.8 830.8L214.8 827.6L213.6 827.7L214.5 825.2L215.3 823.3L214.1 820.8L213 820.4L212.2 818.6L213.7 814.8L213.6 812.2L212.4 810.4L209.9 810.1L210 809L209.6 806.9L208.5 805.2L205.4 803.4L203.7 800.5L203.9 799.7L200.6 800L197.3 799.4L197.6 798.1L194.9 798.9L191.2 798.9L191.3 796.5L189.2 796.2L185.5 797L187.7 794.2L189.6 790.2L190 789.7L194.4 788.7L196 786.3L196.9 787.2L197.6 786.5L199.6 785.8L204.3 783.8L205.6 782.8L205.5 784.1L207.2 782.5L207.7 781.2L208.6 777.5L208.6 776.9L208.2 774.9L209.1 772.5L207.3 768.5L205.8 767L208 766.5L207.8 764.6L207.4 762.2L208.7 759.8L208 759.6Z" fill="#fba45d" stroke="#3a2a2a" stroke-width="0.8" stroke-linejoin="round"/><path d="M154.2 792.8L153.3 794.1L154.4 796.6L156.1 799.6L156.8 802.7L157.7 803.7L157.1 803.5L159.6 806L159.6 806L159.1 810.6L160.4 812.3L160.5 813.9L160.4 814L159 816.8L159.5 819.7L162.3 820.9L161.5 823.3M174.3 798.8L175.8 797.9L177.4 800L180.1 801.1L182.3 800.7L183.1 802L185.7 803.5L185.7 803.5L188.4 803.4L187.7 803L190.3 803.7L193 801.3L196.9 801.2L196.9 801.6L199.5 803.8L201.1 801.7L203.8 801.1L203.7 800.5M256.9 892.4L258.8 891.5L260.7 888.7L265 889.7L266.3 890.8L266.3 890.8L264.8 888.5L263.4 884L263.3 882.3L263.5 882.2L262 880.4L261.8 878.1L260.2 874.9L260.3 871.8L259 871.8L259.9 871.1L257.9 867.6L257 864.7M235.5 893.5L234.3 896.9L237.4 898.3L238.6 898.1L239 900.7L237.3 904.4L239.6 906.1L242.1 907.8L241.9 909.4L241.9 909.4L239.6 910.1L240 913.7L239.5 916.3L237.8 916.2L237.8 919.9L236.3 922.9M290.7 904.2L291.1 905.1L295.1 907.7L295.2 909.9L294.4 910.6L296.4 912.8L297.9 917L297.9 917L298.4 917.3L296.8 919.8L296.5 923.4M314.1 854.9L316.3 855.5L319.5 856.3L319.5 859.1L319.7 860.6L322.8 861.6L323.9 864.4L324.4 866.9L324.4 866.9L327.7 867.7L329.1 868.7L329.1 870.8L328.9 872.5L330.7 873.2L334.3 874.8L333.9 877.6L333.9 877.6L331.6 880.5L330.6 879.8L330.5 881L328.2 885.1L327.2 885.9L326.6 886.9L323.7 891L323.7 891L323.1 892.7L322.7 892.8L320.4 896.8L320.2 899.1L320.2 898.9L318.5 902.5L318.8 905.3M144.5 899.3L142.5 900.5L141.8 901.7L139.2 903.7L137 905.9L137.4 905.5L136.4 905.2L132.3 908.8L129.5 910.8L129.5 910.8L129.6 910.9L127.5 914.6L127.3 917.5L127.1 917.5L125.1 920.5L125.3 923.7M175.5 906.5L179 909.9L179.1 912.7L178.8 914.9L178.2 914.6L180.4 916.8L180.9 920.6L181.5 922.6" fill="none" stroke="#3a2a2a" stroke-width="0.8"/></g><path d="M207.6 755.9L270.6 755.4L274.3 758.5L275.3 765.8L284.2 773.6L289.4 778.3L294.6 786.7L297.7 790.8L301.9 797.1L304.5 800.2L302.9 805.4L306.6 810.1L307.6 813.2L314.4 812.7L319.6 820.5L318.5 829.4L314.4 831.5L314.4 839.5L325.8 843.7L326.9 860.4L331 871.8L335.2 875L336.8 880.2L330 887.5L324.8 889.5L319.6 901L317 908L328 912L338 909L340 903L343 896.6L355.5 895.2L357 940L91 940L91 922L88.7 911.4L84.1 904.5L79.5 898.8L80.1 894.7L94.5 895.3L103.7 895.3L111.7 889.6L103.7 886.1L97.9 889.6L92.2 890.7L88.7 883.8L84.7 874.6L84.1 866.6L86.4 862L92.2 862L89.9 855.7L83 852.8L79 849.3L79.5 843.6L89.9 839.6L97.9 841.3L106 840.1L110.6 822.9L114 822.3L117.4 822.2L126.5 818.2L128.5 813L136.7 802L139.7 793.8L143.8 790.8L145.2 783L150.1 780L152 769.3L157.9 766.4L176.4 762.7L185.2 767.1L206 762Z" fill="none" stroke="#3a2a2a" stroke-width="1" stroke-linejoin="round"/><circle cx="258.46" cy="906.58" r="10.8" fill="#d8c6c8" fill-opacity="0.85" stroke="#8a7f84" stroke-width="0.6"/><circle cx="308.63" cy="900.56" r="10.8" fill="#d8c6c8" fill-opacity="0.85" stroke="#8a7f84" stroke-width="0.6"/><circle cx="229.36" cy="922.63" r="10.8" fill="#d8c6c8" fill-opacity="0.85" stroke="#8a7f84" stroke-width="0.6"/><g stroke="#4a2a22" stroke-width="0.7" fill-opacity="0.9"><g fill="#d7182f"><circle cx="279.38" cy="898.05" r="4.7"/></g><g fill="#fb8c3c"><circle cx="83.71" cy="845.38" r="4.7"/></g><g fill="#fdf0a6"><circle cx="92.58" cy="869.05" r="4.7"/></g><g fill="#f4512a"><circle cx="309.05" cy="924.96" r="4.7"/><circle cx="126.69" cy="915.26" r="4.7"/><circle cx="235.02" cy="889.15" r="4.7"/><circle cx="235.38" cy="823.29" r="4.7"/><circle cx="159.83" cy="804.2" r="4.7"/><circle cx="236.22" cy="914.01" r="4.7"/></g><g fill="#fdb64e"><circle cx="91.79" cy="870.65" r="4.7"/></g><g fill="#d7182f"><circle cx="210.55" cy="833.25" r="4.7"/></g><g fill="#f4512a"><circle cx="168.85" cy="907.28" r="4.7"/></g><g fill="#fdb64e"><circle cx="150.02" cy="855.46" r="4.7"/></g><g fill="#d7182f"><circle cx="183.92" cy="814.96" r="4.7"/></g><g fill="#f4512a"><circle cx="323.28" cy="872.55" r="4.7"/></g><g fill="#d7182f"><circle cx="209.34" cy="869.18" r="4.7"/></g><g fill="#f4512a"><circle cx="188.11" cy="866.08" r="4.7"/></g><g fill="#fb8c3c"><circle cx="190.73" cy="850.57" r="4.7"/></g><g fill="#d7182f"><circle cx="192.66" cy="862" r="4.7"/></g><g fill="#fb8c3c"><circle cx="238.56" cy="921.3" r="4.7"/></g><g fill="#d7182f"><circle cx="318.47" cy="854.64" r="4.7"/><circle cx="180.49" cy="832.64" r="4.7"/></g><g fill="#f4512a"><circle cx="299.09" cy="859.95" r="4.7"/><circle cx="195.59" cy="838.81" r="4.7"/></g><g fill="#d7182f"><circle cx="207.05" cy="874.47" r="4.7"/></g><g fill="#f4512a"><circle cx="258.46" cy="810.25" r="4.7"/><circle cx="127.46" cy="898.7" r="4.7"/></g><g fill="#d7182f"><circle cx="176.78" cy="785.57" r="4.7"/><circle cx="246.87" cy="875.86" r="4.7"/><circle cx="194.31" cy="865" r="4.7"/></g><g fill="#f4512a"><circle cx="170.89" cy="846.28" r="4.7"/></g><g fill="#d7182f"><circle cx="247.42" cy="880.49" r="4.7"/></g><g fill="#f4512a"><circle cx="221.33" cy="785.16" r="4.7"/></g><g fill="#fdb64e"><circle cx="96.16" cy="873.3" r="4.7"/><circle cx="94.29" cy="849.7" r="4.7"/></g><g fill="#d7182f"><circle cx="198.65" cy="889.3" r="4.7"/></g><g fill="#fdb64e"><circle cx="110.49" cy="874.91" r="4.7"/></g><g fill="#fb8c3c"><circle cx="128.96" cy="925.53" r="4.7"/><circle cx="314.56" cy="876" r="4.7"/></g><g fill="#d7182f"><circle cx="182.13" cy="919.98" r="4.7"/></g><g fill="#f4512a"><circle cx="172.05" cy="799.08" r="4.7"/></g><g fill="#d7182f"><circle cx="201.8" cy="803.62" r="4.7"/></g><g fill="#fb8c3c"><circle cx="148.29" cy="849.09" r="4.7"/></g><g fill="#f4512a"><circle cx="176.98" cy="830.55" r="4.7"/></g><g fill="#fb8c3c"><circle cx="180.66" cy="818.96" r="4.7"/></g><g fill="#f4512a"><circle cx="243.02" cy="873.72" r="4.7"/><circle cx="274.41" cy="866.43" r="4.7"/></g><g fill="#fdb64e"><circle cx="121.32" cy="896.68" r="4.7"/></g><g fill="#d7182f"><circle cx="238.35" cy="840.55" r="4.7"/></g><g fill="#fb8c3c"><circle cx="163.71" cy="827.36" r="4.7"/></g><g fill="#f4512a"><circle cx="199.36" cy="925.11" r="4.7"/></g><g fill="#fdb64e"><circle cx="198.62" cy="836.68" r="4.7"/></g><g fill="#fb8c3c"><circle cx="138.95" cy="851.01" r="4.7"/></g><g fill="#d7182f"><circle cx="204.28" cy="848.08" r="4.7"/></g><g fill="#fdf0a6"><circle cx="229.36" cy="760.68" r="4.7"/><circle cx="140.1" cy="877.43" r="4.7"/></g><g fill="#f4512a"><circle cx="209.63" cy="843.57" r="4.7"/><circle cx="173.46" cy="823.98" r="4.7"/></g><g fill="#fdf0a6"><circle cx="135.28" cy="877.66" r="4.7"/></g><g fill="#f4512a"><circle cx="151.09" cy="845.37" r="4.7"/></g><g fill="#fb8c3c"><circle cx="280.84" cy="876.68" r="4.7"/></g><g fill="#d7182f"><circle cx="328.7" cy="873.83" r="4.7"/><circle cx="184.3" cy="854.97" r="4.7"/><circle cx="163.69" cy="912.99" r="4.7"/><circle cx="184.16" cy="815.83" r="4.7"/><circle cx="300.2" cy="912.14" r="4.7"/></g><g fill="#fdb64e"><circle cx="178.85" cy="825.68" r="4.7"/></g><g fill="#fdf0a6"><circle cx="103.56" cy="914.16" r="4.7"/></g><g fill="#d7182f"><circle cx="127.71" cy="840.88" r="4.7"/><circle cx="226.17" cy="840.93" r="4.7"/></g><g fill="#fdf0a6"><circle cx="134.94" cy="876.1" r="4.7"/></g><g fill="#f4512a"><circle cx="303.92" cy="899.26" r="4.7"/></g><g fill="#fdf0a6"><circle cx="93.24" cy="854.56" r="4.7"/><circle cx="129.42" cy="815.67" r="4.7"/></g><g fill="#fdb64e"><circle cx="109.43" cy="859.61" r="4.7"/></g><g fill="#d7182f"><circle cx="181.2" cy="797.2" r="4.7"/><circle cx="247.82" cy="762.69" r="4.7"/><circle cx="278.49" cy="884.27" r="4.7"/><circle cx="253.44" cy="885.5" r="4.7"/></g><g fill="#fdf0a6"><circle cx="104.73" cy="864" r="4.7"/></g><g fill="#f4512a"><circle cx="279.53" cy="853.4" r="4.7"/></g><g fill="#d7182f"><circle cx="123.17" cy="837.23" r="4.7"/><circle cx="326.22" cy="878.16" r="4.7"/><circle cx="120.09" cy="858" r="4.7"/></g><g fill="#fdb64e"><circle cx="169.78" cy="841.32" r="4.7"/></g><g fill="#d7182f"><circle cx="290.29" cy="898.44" r="4.7"/></g><g fill="#fb8c3c"><circle cx="287.47" cy="917.08" r="4.7"/></g><g fill="#f4512a"><circle cx="129.49" cy="860.74" r="4.7"/></g><g fill="#fb8c3c"><circle cx="126.15" cy="872.07" r="4.7"/></g><g fill="#f4512a"><circle cx="118.13" cy="905.68" r="4.7"/></g><g fill="#fdb64e"><circle cx="139.51" cy="885.17" r="4.7"/></g><g fill="#fb8c3c"><circle cx="170.79" cy="872" r="4.7"/></g><g fill="#f4512a"><circle cx="125" cy="897.51" r="4.7"/></g><g fill="#d7182f"><circle cx="219.33" cy="841.35" r="4.7"/></g><g fill="#fdb64e"><circle cx="107.37" cy="911.82" r="4.7"/></g><g fill="#f4512a"><circle cx="285.55" cy="840.35" r="4.7"/></g><g fill="#fdf0a6"><circle cx="118.73" cy="882.14" r="4.7"/></g><g fill="#d7182f"><circle cx="234.38" cy="802.22" r="4.7"/></g><g fill="#f4512a"><circle cx="116.47" cy="918.2" r="4.7"/></g><g fill="#fdb64e"><circle cx="187.87" cy="845.03" r="4.7"/></g><g fill="#f4512a"><circle cx="304.84" cy="886.91" r="4.7"/><circle cx="214.57" cy="845.72" r="4.7"/></g><g fill="#d7182f"><circle cx="172.17" cy="807.24" r="4.7"/><circle cx="246.75" cy="876.24" r="4.7"/></g><g fill="#f4512a"><circle cx="232.37" cy="828.31" r="4.7"/></g><g fill="#fb8c3c"><circle cx="174.7" cy="843.45" r="4.7"/><circle cx="162.02" cy="851.82" r="4.7"/></g><g fill="#fdf0a6"><circle cx="275.52" cy="809.65" r="4.7"/></g><g fill="#fb8c3c"><circle cx="129.68" cy="888.76" r="4.7"/></g><g fill="#f4512a"><circle cx="115.8" cy="912.85" r="4.7"/><circle cx="145.74" cy="868.84" r="4.7"/></g><g fill="#fdb64e"><circle cx="191.9" cy="802.14" r="4.7"/></g><g fill="#d7182f"><circle cx="177.72" cy="805.5" r="4.7"/></g><g fill="#fb8c3c"><circle cx="228.36" cy="784.16" r="4.7"/></g><g fill="#d7182f"><circle cx="279.15" cy="904.14" r="4.7"/></g><g fill="#fdb64e"><circle cx="149.34" cy="894.84" r="4.7"/><circle cx="90.83" cy="898.16" r="4.7"/></g><g fill="#f4512a"><circle cx="114.79" cy="903.57" r="4.7"/></g><g fill="#d7182f"><circle cx="320.67" cy="851.39" r="4.7"/></g><g fill="#fdb64e"><circle cx="230.1" cy="914.83" r="4.7"/></g><g fill="#fdf0a6"><circle cx="97.45" cy="878.73" r="4.7"/></g><g fill="#fb8c3c"><circle cx="266.18" cy="913.3" r="4.7"/></g><g fill="#f4512a"><circle cx="116.75" cy="903.45" r="4.7"/></g><g fill="#d7182f"><circle cx="170.06" cy="827.69" r="4.7"/></g><g fill="#f4512a"><circle cx="313.06" cy="881.99" r="4.7"/><circle cx="313.9" cy="922.26" r="4.7"/></g><g fill="#fb8c3c"><circle cx="142.63" cy="890" r="4.7"/></g><g fill="#d7182f"><circle cx="162.33" cy="911.98" r="4.7"/><circle cx="299.69" cy="884.54" r="4.7"/><circle cx="198.76" cy="855.7" r="4.7"/><circle cx="229.36" cy="847.38" r="4.7"/><circle cx="272.61" cy="875.05" r="4.7"/></g><g fill="#f4512a"><circle cx="259.77" cy="917.63" r="4.7"/></g><g fill="#d7182f"><circle cx="238.39" cy="873.46" r="4.7"/><circle cx="172.93" cy="798.39" r="4.7"/></g><g fill="#f4512a"><circle cx="186.18" cy="917.57" r="4.7"/><circle cx="268.07" cy="900.07" r="4.7"/></g><g fill="#fdb64e"><circle cx="125.64" cy="884.15" r="4.7"/></g><g fill="#d7182f"><circle cx="247.44" cy="908.61" r="4.7"/></g><g fill="#f4512a"><circle cx="137.92" cy="916.97" r="4.7"/></g><g fill="#fb8c3c"><circle cx="165.74" cy="861.17" r="4.7"/></g><g fill="#d7182f"><circle cx="314.86" cy="863.15" r="4.7"/><circle cx="211.83" cy="900.43" r="4.7"/></g><g fill="#fdb64e"><circle cx="136.41" cy="887.93" r="4.7"/><circle cx="135.39" cy="896.99" r="4.7"/></g><g fill="#d7182f"><circle cx="247.31" cy="919.79" r="4.7"/></g><g fill="#fb8c3c"><circle cx="198.51" cy="856.89" r="4.7"/></g><g fill="#d7182f"><circle cx="113.57" cy="827.31" r="4.7"/><circle cx="209.29" cy="819.28" r="4.7"/></g><g fill="#f4512a"><circle cx="221.33" cy="909.59" r="4.7"/></g><g fill="#d7182f"><circle cx="297.59" cy="857.01" r="4.7"/></g><g fill="#f4512a"><circle cx="307.47" cy="866.46" r="4.7"/></g><g fill="#d7182f"><circle cx="282.68" cy="884.36" r="4.7"/></g><g fill="#fb8c3c"><circle cx="127.92" cy="878.99" r="4.7"/></g><g fill="#d7182f"><circle cx="161.65" cy="812.76" r="4.7"/><circle cx="239.45" cy="879.72" r="4.7"/></g><g fill="#fdf0a6"><circle cx="134.36" cy="872.93" r="4.7"/></g><g fill="#fb8c3c"><circle cx="300.02" cy="864.14" r="4.7"/></g><g fill="#f4512a"><circle cx="130.81" cy="832.58" r="4.7"/></g><g fill="#fb8c3c"><circle cx="227.81" cy="859.11" r="4.7"/></g><g fill="#fdb64e"><circle cx="87.07" cy="850.2" r="4.7"/></g><g fill="#f4512a"><circle cx="97.3" cy="847" r="4.7"/></g><g fill="#d7182f"><circle cx="188.26" cy="850.4" r="4.7"/></g><g fill="#fb8c3c"><circle cx="186.65" cy="857.06" r="4.7"/></g><g fill="#d7182f"><circle cx="266.91" cy="873.92" r="4.7"/></g><g fill="#f4512a"><circle cx="122.28" cy="884.29" r="4.7"/><circle cx="259.44" cy="898.44" r="4.7"/></g><g fill="#fdf0a6"><circle cx="98.24" cy="853.49" r="4.7"/></g><g fill="#f4512a"><circle cx="292.57" cy="787.17" r="4.7"/></g><g fill="#fdb64e"><circle cx="92.87" cy="902.45" r="4.7"/></g><g fill="#d7182f"><circle cx="297.59" cy="878.42" r="4.7"/></g><g fill="#fdb64e"><circle cx="205.31" cy="913.73" r="4.7"/></g><g fill="#f4512a"><circle cx="123.12" cy="861.3" r="4.7"/></g><g fill="#d7182f"><circle cx="237.71" cy="863.53" r="4.7"/><circle cx="222.92" cy="841.6" r="4.7"/></g><g fill="#fb8c3c"><circle cx="238.39" cy="790.18" r="4.7"/></g><g fill="#f4512a"><circle cx="147.77" cy="861.75" r="4.7"/></g><g fill="#fdf0a6"><circle cx="240.4" cy="796.8" r="4.7"/></g><g fill="#f4512a"><circle cx="226" cy="919.24" r="4.7"/></g><g fill="#d7182f"><circle cx="280.61" cy="881.77" r="4.7"/></g><g fill="#fdf0a6"><circle cx="108.86" cy="864.85" r="4.7"/></g><g fill="#d7182f"><circle cx="345.13" cy="920.71" r="4.7"/><circle cx="212.3" cy="901.56" r="4.7"/><circle cx="190.27" cy="873.85" r="4.7"/></g><g fill="#f4512a"><circle cx="143.31" cy="895.75" r="4.7"/></g><g fill="#fb8c3c"><circle cx="308.43" cy="857.72" r="4.7"/></g><g fill="#fdb64e"><circle cx="101.83" cy="845.82" r="4.7"/></g><g fill="#fdf0a6"><circle cx="97.17" cy="873.59" r="4.7"/></g><g fill="#fb8c3c"><circle cx="114.04" cy="885.05" r="4.7"/></g><g fill="#d7182f"><circle cx="302.27" cy="862.24" r="4.7"/></g><g fill="#fdb64e"><circle cx="175.7" cy="843.34" r="4.7"/></g><g fill="#fdf0a6"><circle cx="139.8" cy="901.39" r="4.7"/></g><g fill="#fb8c3c"><circle cx="158.15" cy="916.95" r="4.7"/></g><g fill="#d7182f"><circle cx="318.66" cy="857.41" r="4.7"/></g><g fill="#f4512a"><circle cx="216.55" cy="909.22" r="4.7"/><circle cx="300.38" cy="915.17" r="4.7"/></g><g fill="#d7182f"><circle cx="265.52" cy="888.87" r="4.7"/><circle cx="157.12" cy="898" r="4.7"/></g><g fill="#fb8c3c"><circle cx="157.06" cy="861.35" r="4.7"/></g><g fill="#d7182f"><circle cx="144.76" cy="917.35" r="4.7"/></g><g fill="#f4512a"><circle cx="93.43" cy="877.36" r="4.7"/></g><g fill="#fdf0a6"><circle cx="103.46" cy="906.39" r="4.7"/></g><g fill="#fb8c3c"><circle cx="169.46" cy="806.8" r="4.7"/></g><g fill="#d7182f"><circle cx="275.67" cy="904.28" r="4.7"/><circle cx="219.66" cy="851.92" r="4.7"/></g><g fill="#f4512a"><circle cx="295.58" cy="805.23" r="4.7"/></g><g fill="#d7182f"><circle cx="188.71" cy="888.9" r="4.7"/></g><g fill="#fb8c3c"><circle cx="270.51" cy="897.12" r="4.7"/><circle cx="120.89" cy="879.03" r="4.7"/></g><g fill="#f4512a"><circle cx="151.21" cy="870.73" r="4.7"/></g><g fill="#d7182f"><circle cx="276.9" cy="923.37" r="4.7"/></g><g fill="#fb8c3c"><circle cx="132.03" cy="828.31" r="4.7"/></g><g fill="#f4512a"><circle cx="169.28" cy="857.66" r="4.7"/></g><g fill="#fb8c3c"><circle cx="148.53" cy="848.66" r="4.7"/></g><g fill="#fdb64e"><circle cx="105.39" cy="914.7" r="4.7"/></g><g fill="#fb8c3c"><circle cx="201.18" cy="841.16" r="4.7"/></g><g fill="#d7182f"><circle cx="188.22" cy="805.23" r="4.7"/></g><g fill="#f4512a"><circle cx="187.65" cy="867.7" r="4.7"/></g><g fill="#fb8c3c"><circle cx="109.94" cy="842.42" r="4.7"/></g><g fill="#f4512a"><circle cx="123.99" cy="920.49" r="4.7"/></g><g fill="#d7182f"><circle cx="188.03" cy="863.63" r="4.7"/></g><g fill="#fdb64e"><circle cx="140.88" cy="861.29" r="4.7"/></g><g fill="#d7182f"><circle cx="212" cy="907.78" r="4.7"/></g><g fill="#fb8c3c"><circle cx="195.24" cy="811.25" r="4.7"/></g><g fill="#f4512a"><circle cx="195.21" cy="825.68" r="4.7"/></g><g fill="#d7182f"><circle cx="214.57" cy="910.9" r="4.7"/></g><g fill="#fdb64e"><circle cx="118.69" cy="907.69" r="4.7"/></g><g fill="#fb8c3c"><circle cx="273.14" cy="865.8" r="4.7"/></g><g fill="#d7182f"><circle cx="239.39" cy="881.49" r="4.7"/><circle cx="136.5" cy="904.94" r="4.7"/><circle cx="165.49" cy="861.05" r="4.7"/></g><g fill="#fb8c3c"><circle cx="193.28" cy="809.33" r="4.7"/></g><g fill="#d7182f"><circle cx="321.11" cy="868.95" r="4.7"/><circle cx="274.51" cy="857.41" r="4.7"/></g><g fill="#fdb64e"><circle cx="121.68" cy="861.46" r="4.7"/></g><g fill="#fb8c3c"><circle cx="200.54" cy="830.07" r="4.7"/></g><g fill="#d7182f"><circle cx="218.32" cy="812.26" r="4.7"/><circle cx="319.4" cy="871.26" r="4.7"/><circle cx="183.2" cy="811.25" r="4.7"/></g><g fill="#fdb64e"><circle cx="189.38" cy="874.63" r="4.7"/></g><g fill="#d7182f"><circle cx="301.03" cy="894.49" r="4.7"/><circle cx="213.3" cy="870.45" r="4.7"/></g><g fill="#fdb64e"><circle cx="180.97" cy="837.46" r="4.7"/><circle cx="177.32" cy="852.3" r="4.7"/><circle cx="123.02" cy="917.52" r="4.7"/></g><g fill="#f4512a"><circle cx="179.83" cy="866.84" r="4.7"/></g><g fill="#d7182f"><circle cx="112.98" cy="873.53" r="4.7"/></g><g fill="#fb8c3c"><circle cx="234.2" cy="865.96" r="4.7"/></g><g fill="#d7182f"><circle cx="328.05" cy="876.76" r="4.7"/></g><g fill="#f4512a"><circle cx="311.63" cy="857.2" r="4.7"/></g><g fill="#d7182f"><circle cx="181.89" cy="916.32" r="4.7"/></g><g fill="#fdb64e"><circle cx="234.82" cy="918.93" r="4.7"/></g><g fill="#f4512a"><circle cx="302.28" cy="902.19" r="4.7"/></g><g fill="#d7182f"><circle cx="286.81" cy="880.49" r="4.7"/></g><g fill="#f4512a"><circle cx="275.34" cy="885.59" r="4.7"/></g><g fill="#d7182f"><circle cx="236.58" cy="905.41" r="4.7"/><circle cx="303.01" cy="865.22" r="4.7"/></g><g fill="#f4512a"><circle cx="177.12" cy="821.29" r="4.7"/><circle cx="302.67" cy="903.6" r="4.7"/></g><g fill="#fdf0a6"><circle cx="114.85" cy="909.11" r="4.7"/></g><g fill="#d7182f"><circle cx="275.89" cy="901.68" r="4.7"/></g><g fill="#fdb64e"><circle cx="115.81" cy="897.43" r="4.7"/></g><g fill="#d7182f"><circle cx="317.65" cy="856.6" r="4.7"/></g><g fill="#fdb64e"><circle cx="132.04" cy="875.99" r="4.7"/><circle cx="124.5" cy="855.55" r="4.7"/></g><g fill="#fb8c3c"><circle cx="118.69" cy="908.05" r="4.7"/></g><g fill="#f4512a"><circle cx="118.41" cy="830.66" r="4.7"/></g><g fill="#fb8c3c"><circle cx="157.31" cy="891.87" r="4.7"/></g><g fill="#fdf0a6"><circle cx="96.75" cy="866.04" r="4.7"/><circle cx="156.15" cy="862.33" r="4.7"/></g><g fill="#fdb64e"><circle cx="115.77" cy="850.64" r="4.7"/></g><g fill="#f4512a"><circle cx="313.49" cy="870.42" r="4.7"/></g><g fill="#d7182f"><circle cx="205.28" cy="829.31" r="4.7"/></g><g fill="#f4512a"><circle cx="249.32" cy="904.34" r="4.7"/></g><g fill="#d7182f"><circle cx="204.79" cy="924.99" r="4.7"/><circle cx="99.41" cy="908.79" r="4.7"/></g><g fill="#fdb64e"><circle cx="132.91" cy="909.32" r="4.7"/></g><g fill="#f4512a"><circle cx="189.4" cy="842.14" r="4.7"/></g><g fill="#fb8c3c"><circle cx="166.84" cy="844.73" r="4.7"/></g><g fill="#f4512a"><circle cx="296.94" cy="864.1" r="4.7"/></g><g fill="#d7182f"><circle cx="272.8" cy="883.86" r="4.7"/></g><g fill="#f4512a"><circle cx="178.28" cy="841.67" r="4.7"/><circle cx="180.44" cy="841.6" r="4.7"/></g><g fill="#d7182f"><circle cx="192.69" cy="835.61" r="4.7"/></g><g fill="#fb8c3c"><circle cx="212.36" cy="923.49" r="4.7"/></g><g fill="#d7182f"><circle cx="291.68" cy="904" r="4.7"/></g><g fill="#fb8c3c"><circle cx="156.05" cy="913.92" r="4.7"/></g><g fill="#f4512a"><circle cx="273.51" cy="767.1" r="4.7"/><circle cx="261.61" cy="888.86" r="4.7"/></g><g fill="#d7182f"><circle cx="219.59" cy="912.83" r="4.7"/><circle cx="292.52" cy="890.2" r="4.7"/></g><g fill="#f4512a"><circle cx="171.45" cy="854.94" r="4.7"/></g><g fill="#fb8c3c"><circle cx="154.61" cy="910.34" r="4.7"/></g><g fill="#f4512a"><circle cx="243.41" cy="841.35" r="4.7"/></g><g fill="#d7182f"><circle cx="238.66" cy="884.51" r="4.7"/></g><g fill="#fdb64e"><circle cx="116.44" cy="880.28" r="4.7"/></g><g fill="#f4512a"><circle cx="272.08" cy="899.19" r="4.7"/></g><g fill="#d7182f"><circle cx="168.59" cy="812.8" r="4.7"/></g><g fill="#fdf0a6"><circle cx="125.33" cy="887.83" r="4.7"/></g><g fill="#fdb64e"><circle cx="147.53" cy="845.79" r="4.7"/></g><g fill="#d7182f"><circle cx="238.91" cy="857.7" r="4.7"/><circle cx="303.04" cy="875.15" r="4.7"/></g><g fill="#f4512a"><circle cx="203.84" cy="803.63" r="4.7"/><circle cx="288.53" cy="873.23" r="4.7"/></g><g fill="#fdb64e"><circle cx="138.42" cy="851.3" r="4.7"/></g><g fill="#fb8c3c"><circle cx="243.41" cy="778.14" r="4.7"/></g><g fill="#d7182f"><circle cx="194.18" cy="817.89" r="4.7"/><circle cx="237.82" cy="839.78" r="4.7"/></g><g fill="#f4512a"><circle cx="236.35" cy="909.76" r="4.7"/><circle cx="234.72" cy="903.76" r="4.7"/></g><g fill="#fb8c3c"><circle cx="285.3" cy="904.86" r="4.7"/></g><g fill="#d7182f"><circle cx="261.47" cy="798.81" r="4.7"/></g><g fill="#f4512a"><circle cx="199.59" cy="818.84" r="4.7"/></g><g fill="#fb8c3c"><circle cx="351.96" cy="916.63" r="4.7"/><circle cx="153.1" cy="827.31" r="4.7"/></g><g fill="#f4512a"><circle cx="138.46" cy="828.85" r="4.7"/></g><g fill="#d7182f"><circle cx="295.15" cy="912.55" r="4.7"/></g><g fill="#f4512a"><circle cx="98.44" cy="917.61" r="4.7"/><circle cx="346.27" cy="906.92" r="4.7"/></g><g fill="#fdf0a6"><circle cx="128.56" cy="908.94" r="4.7"/></g><g fill="#d7182f"><circle cx="142.86" cy="826.06" r="4.7"/><circle cx="160.77" cy="909.53" r="4.7"/><circle cx="210.86" cy="921.88" r="4.7"/></g><g fill="#fb8c3c"><circle cx="142.09" cy="844.85" r="4.7"/></g><g fill="#fdb64e"><circle cx="104.47" cy="875.3" r="4.7"/><circle cx="108.6" cy="921.97" r="4.7"/></g><g fill="#f4512a"><circle cx="113.77" cy="908.3" r="4.7"/></g><g fill="#fdb64e"><circle cx="120.62" cy="891.1" r="4.7"/></g><g fill="#f4512a"><circle cx="274.3" cy="889.99" r="4.7"/></g><g fill="#d7182f"><circle cx="310.25" cy="878.17" r="4.7"/><circle cx="155.1" cy="905.38" r="4.7"/></g><g fill="#fdb64e"><circle cx="281.25" cy="916.27" r="4.7"/></g><g fill="#f4512a"><circle cx="325.69" cy="846.37" r="4.7"/><circle cx="234.24" cy="885" r="4.7"/></g><g fill="#fdb64e"><circle cx="201.94" cy="841.94" r="4.7"/></g><g fill="#d7182f"><circle cx="265.44" cy="912.31" r="4.7"/><circle cx="133.93" cy="853.92" r="4.7"/><circle cx="199.95" cy="867.88" r="4.7"/></g><g fill="#f4512a"><circle cx="226.95" cy="805.23" r="4.7"/></g><g fill="#d7182f"><circle cx="303.89" cy="919.77" r="4.7"/><circle cx="161.28" cy="842.86" r="4.7"/></g><g fill="#fdf0a6"><circle cx="114.37" cy="898.53" r="4.7"/></g><g fill="#d7182f"><circle cx="136.06" cy="828.39" r="4.7"/></g><g fill="#f4512a"><circle cx="235.77" cy="915.81" r="4.7"/></g><g fill="#fdf0a6"><circle cx="134.37" cy="869.21" r="4.7"/></g><g fill="#f4512a"><circle cx="93.05" cy="865.45" r="4.7"/></g><g fill="#fb8c3c"><circle cx="249.43" cy="768.11" r="4.7"/></g><g fill="#f4512a"><circle cx="161.13" cy="801.22" r="4.7"/></g><g fill="#d7182f"><circle cx="307.46" cy="891.93" r="4.7"/></g><g fill="#f4512a"><circle cx="152.58" cy="911.79" r="4.7"/></g><g fill="#fb8c3c"><circle cx="259.46" cy="768.71" r="4.7"/></g><g fill="#f4512a"><circle cx="163.13" cy="770.71" r="4.7"/><circle cx="156.69" cy="923.86" r="4.7"/></g><g fill="#fb8c3c"><circle cx="265.48" cy="859.42" r="4.7"/></g><g fill="#d7182f"><circle cx="184.85" cy="884.26" r="4.7"/></g><g fill="#fdb64e"><circle cx="153.17" cy="864.24" r="4.7"/></g><g fill="#f4512a"><circle cx="203.54" cy="883.99" r="4.7"/><circle cx="183.51" cy="811.46" r="4.7"/></g><g fill="#fdb64e"><circle cx="130.5" cy="887.33" r="4.7"/></g><g fill="#d7182f"><circle cx="177.72" cy="811.34" r="4.7"/><circle cx="171.16" cy="799.21" r="4.7"/></g><g fill="#fdb64e"><circle cx="163.65" cy="873.46" r="4.7"/></g><g fill="#fb8c3c"><circle cx="124.1" cy="900.58" r="4.7"/></g><g fill="#f4512a"><circle cx="212.36" cy="921.23" r="4.7"/></g><g fill="#d7182f"><circle cx="202.33" cy="849.88" r="4.7"/><circle cx="275.99" cy="866.01" r="4.7"/></g><g fill="#fb8c3c"><circle cx="152.16" cy="883" r="4.7"/></g><g fill="#fdb64e"><circle cx="134.38" cy="902.38" r="4.7"/></g><g fill="#fb8c3c"><circle cx="224.02" cy="859.09" r="4.7"/></g><g fill="#f4512a"><circle cx="204.04" cy="889.32" r="4.7"/></g><g fill="#fb8c3c"><circle cx="100.5" cy="880.04" r="4.7"/></g><g fill="#f4512a"><circle cx="246.42" cy="790.18" r="4.7"/></g><g fill="#fdb64e"><circle cx="139.05" cy="850.09" r="4.7"/></g><g fill="#f4512a"><circle cx="104.52" cy="919.45" r="4.7"/><circle cx="265.53" cy="911.33" r="4.7"/></g><g fill="#d7182f"><circle cx="194.97" cy="804.09" r="4.7"/></g><g fill="#f4512a"><circle cx="165.91" cy="802.46" r="4.7"/><circle cx="113.4" cy="883.78" r="4.7"/></g><g fill="#fb8c3c"><circle cx="191.31" cy="888.1" r="4.7"/></g><g fill="#f4512a"><circle cx="231.37" cy="884.5" r="4.7"/></g><g fill="#fdf0a6"><circle cx="106.48" cy="848.89" r="4.7"/></g><g fill="#fb8c3c"><circle cx="210.1" cy="834.12" r="4.7"/></g><g fill="#fdf0a6"><circle cx="119.27" cy="850.24" r="4.7"/><circle cx="126.61" cy="877.96" r="4.7"/></g><g fill="#d7182f"><circle cx="225.26" cy="847.41" r="4.7"/></g><g fill="#f4512a"><circle cx="98.6" cy="871.55" r="4.7"/></g><g fill="#fb8c3c"><circle cx="257.88" cy="900.03" r="4.7"/></g><g fill="#d7182f"><circle cx="242.03" cy="924.28" r="4.7"/><circle cx="158.24" cy="841.72" r="4.7"/></g><g fill="#f4512a"><circle cx="303.15" cy="856.54" r="4.7"/></g><g fill="#d7182f"><circle cx="157.69" cy="875.02" r="4.7"/><circle cx="249.62" cy="917.22" r="4.7"/></g><g fill="#f4512a"><circle cx="171.42" cy="833.04" r="4.7"/></g><g fill="#d7182f"><circle cx="280.72" cy="871.17" r="4.7"/></g><g fill="#f4512a"><circle cx="229.75" cy="906.21" r="4.7"/><circle cx="181.77" cy="853.5" r="4.7"/></g><g fill="#fdf0a6"><circle cx="99.89" cy="870.05" r="4.7"/></g><g fill="#f4512a"><circle cx="124.96" cy="868.86" r="4.7"/><circle cx="285.75" cy="885.45" r="4.7"/></g><g fill="#fb8c3c"><circle cx="177.17" cy="807.1" r="4.7"/></g><g fill="#f4512a"><circle cx="135.13" cy="880.31" r="4.7"/></g><g fill="#d7182f"><circle cx="136.04" cy="812.26" r="4.7"/></g><g fill="#fb8c3c"><circle cx="188.86" cy="821.1" r="4.7"/></g><g fill="#fdb64e"><circle cx="132.23" cy="870.71" r="4.7"/><circle cx="180.69" cy="821.82" r="4.7"/></g><g fill="#d7182f"><circle cx="209.2" cy="889.98" r="4.7"/></g><g fill="#fb8c3c"><circle cx="281.54" cy="798.21" r="4.7"/><circle cx="120.48" cy="901.16" r="4.7"/></g><g fill="#fdb64e"><circle cx="166.53" cy="818.19" r="4.7"/></g><g fill="#fdf0a6"><circle cx="120.78" cy="878.37" r="4.7"/></g><g fill="#d7182f"><circle cx="220.67" cy="853.4" r="4.7"/></g><g fill="#fb8c3c"><circle cx="299.03" cy="917.87" r="4.7"/></g><g fill="#fdb64e"><circle cx="197.33" cy="861.41" r="4.7"/></g><g fill="#fdf0a6"><circle cx="128.85" cy="876.88" r="4.7"/><circle cx="158.08" cy="864.54" r="4.7"/></g><g fill="#f4512a"><circle cx="247.02" cy="824.9" r="4.7"/><circle cx="119.68" cy="882.98" r="4.7"/><circle cx="282.52" cy="921.83" r="4.7"/></g><g fill="#fdf0a6"><circle cx="99.82" cy="856.24" r="4.7"/></g><g fill="#f4512a"><circle cx="263.48" cy="851.39" r="4.7"/><circle cx="114.21" cy="918.31" r="4.7"/></g><g fill="#fb8c3c"><circle cx="175.71" cy="909.92" r="4.7"/></g></g></g></g>
<g fill="#fff" stroke="#d8d8d6" stroke-width="1.4"><rect x="858.9" y="745.6" width="28.4" height="55" rx="4.5"/><rect x="858.9" y="808.2" width="28.4" height="28" rx="4.5"/><rect x="858.9" y="844.2" width="28.4" height="28" rx="4.5"/></g><path d="M858.9 773.5h28.4" stroke="#ddd" stroke-width="1"/><path d="M868.5 759.9h9.2M873.1 755.3v9.2M868.5 786.4h9.2" stroke="#333" stroke-width="2.5" stroke-linecap="round" fill="none"/><path d="M864.1 813.4L871.4 813.4L864.1 820.7ZM882.1 813.4L874.8 813.4L882.1 820.7ZM864.1 831L871.4 831L864.1 823.7ZM882.1 831L874.8 831L882.1 823.7Z" fill="#333"/><path d="M867.1 816.4L871.7 820.8M879.1 816.4L874.5 820.8M867.1 828L871.7 823.6M879.1 828L874.5 823.6" stroke="#333" stroke-width="3.1" fill="none"/><rect x="865" y="850.3" width="4.1" height="3.7" fill="#7f2704"/><rect x="870.9" y="851.2" width="9.2" height="2" rx="0.8" fill="#111"/><rect x="865" y="855.8" width="4.1" height="3.7" fill="#d94801"/><rect x="870.9" y="856.7" width="9.2" height="2" rx="0.8" fill="#111"/><rect x="865" y="861.3" width="4.1" height="3.7" fill="#fd8d3c"/><rect x="870.9" y="862.2" width="9.2" height="2" rx="0.8" fill="#111"/>
</svg></section>
<section><div class="card" style="left:908px;top:699px;width:578px;height:402px"></div>
<span class="t" style="left:916.6px;top:710.77px;font-size:13.5px;font-weight:bold;color:#333e4b;transform:scaleX(0.8990);">ANC: ANC 1 coverage western chiefdoms this year</span>
<div class="mb" style="left:1448px;top:704px"><i style="left:10.2px"></i><i style="left:14.4px"></i><i style="left:18.6px"></i></div>
<svg width="1536" height="922" viewBox="0 0 1536 922" style="left:0;top:0">
<text x="1198" y="750.3" font-size="11" fill="#666666" text-anchor="middle">This year</text>
<path d="M949.1 763.3H1477.6M949.1 810.1H1477.6M949.1 856.5H1477.6M949.1 901.4H1477.6" stroke="#e6e6e6" stroke-width="1" fill="none"/>
<g font-size="10" fill="#666666" text-anchor="end"><text x="934.5" y="767.6">400</text><text x="934.5" y="814.4">300</text><text x="934.5" y="860.8">200</text><text x="934.5" y="905.7">100</text></g>
<path d="M951.64 930V809.09h4.7V930zM961.43 930V850.54h4.7V930zM971.21 930V890.02h4.7V930zM981 930V854.09h4.7V930zM990.79 930V907.39h4.7V930zM1000.58 930V912.13h4.7V930zM1020.15 930V912.92h4.7V930zM1029.94 930V894.56h4.7V930zM1039.72 930V892.59h4.7V930zM1049.51 930V913.71h4.7V930zM1059.3 930V916.27h4.7V930zM1069.08 930V906.4h4.7V930zM1078.87 930V903.84h4.7V930zM1088.66 930V855.08h4.7V930zM1098.45 930V906.4h4.7V930zM1108.23 930V907.39h4.7V930zM1118.02 930V916.27h4.7V930zM1127.81 930V905.42h4.7V930zM1137.59 930V900.09h4.7V930zM1147.38 930V909.96h4.7V930zM1157.17 930V914.69h4.7V930zM1166.95 930V904.63h4.7V930zM1176.74 930V862.38h4.7V930zM1186.53 930V914.5h4.7V930zM1196.32 930V883.51h4.7V930zM1206.1 930V905.42h4.7V930zM1215.89 930V905.42h4.7V930zM1225.68 930V903.64h4.7V930zM1235.46 930V904.63h4.7V930zM1245.25 930V909.96h4.7V930zM1255.04 930V905.42h4.7V930zM1264.83 930V920.02h4.7V930zM1274.61 930V880.74h4.7V930zM1284.4 930V908.18h4.7V930zM1294.19 930V901.86h4.7V930zM1303.97 930V907.39h4.7V930zM1313.76 930V907h4.7V930zM1333.33 930V903.64h4.7V930zM1343.12 930V910.94h4.7V930zM1352.91 930V909.96h4.7V930zM1362.7 930V908.18h4.7V930zM1372.48 930V906.4h4.7V930zM1382.27 930V905.42h4.7V930zM1392.06 930V917.26h4.7V930zM1401.84 930V904.63h4.7V930zM1411.63 930V911.73h4.7V930zM1421.42 930V855.08h4.7V930zM1431.2 930V900.09h4.7V930zM1440.99 930V903.64h4.7V930zM1450.78 930V909.17h4.7V930zM1460.57 930V904.63h4.7V930zM1470.35 930V909.17h4.7V930z" fill="#a9be3b"/>
<g font-size="10" font-weight="bold"><text x="961.8" y="803.59" text-anchor="middle" fill="#000" stroke="#fff" stroke-width="1.7" stroke-linejoin="round" paint-order="stroke">303.3</text><text x="962.2" y="845.04" text-anchor="middle" fill="#000" stroke="#fff" stroke-width="1.7" stroke-linejoin="round" paint-order="stroke">213.1</text><text x="972.36" y="884.52" text-anchor="middle" fill="#000" stroke="#fff" stroke-width="1.7" stroke-linejoin="round" paint-order="stroke">126.2</text><text x="991.94" y="901.89" text-anchor="middle" fill="#000" stroke="#fff" stroke-width="1.7" stroke-linejoin="round" paint-order="stroke">88.6</text><text x="1021.3" y="907.42" text-anchor="middle" fill="#000" stroke="#fff" stroke-width="1.7" stroke-linejoin="round" paint-order="stroke">77</text><text x="1040.87" y="887.09" text-anchor="middle" fill="#000" stroke="#fff" stroke-width="1.7" stroke-linejoin="round" paint-order="stroke">120.6</text><text x="1050.66" y="908.21" text-anchor="middle" fill="#000" stroke="#fff" stroke-width="1.7" stroke-linejoin="round" paint-order="stroke">74.7</text><text x="1080.02" y="898.34" text-anchor="middle" fill="#000" stroke="#fff" stroke-width="1.7" stroke-linejoin="round" paint-order="stroke">96.2</text><text x="1089.81" y="849.58" text-anchor="middle" fill="#000" stroke="#fff" stroke-width="1.7" stroke-linejoin="round" paint-order="stroke">202.5</text><text x="1109.38" y="901.89" text-anchor="middle" fill="#000" stroke="#fff" stroke-width="1.7" stroke-linejoin="round" paint-order="stroke">89</text><text x="1138.74" y="894.59" text-anchor="middle" fill="#000" stroke="#fff" stroke-width="1.7" stroke-linejoin="round" paint-order="stroke">104.2</text><text x="1168.1" y="899.13" text-anchor="middle" fill="#000" stroke="#fff" stroke-width="1.7" stroke-linejoin="round" paint-order="stroke">95.2</text><text x="1177.89" y="856.88" text-anchor="middle" fill="#000" stroke="#fff" stroke-width="1.7" stroke-linejoin="round" paint-order="stroke">186.6</text><text x="1197.47" y="878.01" text-anchor="middle" fill="#000" stroke="#fff" stroke-width="1.7" stroke-linejoin="round" paint-order="stroke">141</text><text x="1226.83" y="898.14" text-anchor="middle" fill="#000" stroke="#fff" stroke-width="1.7" stroke-linejoin="round" paint-order="stroke">95.8</text><text x="1256.19" y="899.92" text-anchor="middle" fill="#000" stroke="#fff" stroke-width="1.7" stroke-linejoin="round" paint-order="stroke">91.7</text><text x="1265.98" y="914.52" text-anchor="middle" fill="#000" stroke="#fff" stroke-width="1.7" stroke-linejoin="round" paint-order="stroke">60.3</text><text x="1275.76" y="875.24" text-anchor="middle" fill="#000" stroke="#fff" stroke-width="1.7" stroke-linejoin="round" paint-order="stroke">147.5</text><text x="1295.34" y="896.36" text-anchor="middle" fill="#000" stroke="#fff" stroke-width="1.7" stroke-linejoin="round" paint-order="stroke">101.3</text><text x="1324.7" y="916.9" text-anchor="middle" fill="#000" stroke="#fff" stroke-width="1.7" stroke-linejoin="round" paint-order="stroke">56.2</text><text x="1334.48" y="898.14" text-anchor="middle" fill="#000" stroke="#fff" stroke-width="1.7" stroke-linejoin="round" paint-order="stroke">96.2</text><text x="1373.63" y="900.9" text-anchor="middle" fill="#000" stroke="#fff" stroke-width="1.7" stroke-linejoin="round" paint-order="stroke">90.9</text><text x="1402.99" y="899.13" text-anchor="middle" fill="#000" stroke="#fff" stroke-width="1.7" stroke-linejoin="round" paint-order="stroke">95.3</text><text x="1422.57" y="849.58" text-anchor="middle" fill="#000" stroke="#fff" stroke-width="1.7" stroke-linejoin="round" paint-order="stroke">202.7</text><text x="1432.35" y="894.59" text-anchor="middle" fill="#000" stroke="#fff" stroke-width="1.7" stroke-linejoin="round" paint-order="stroke">105.3</text><text x="1461.72" y="899.13" text-anchor="middle" fill="#000" stroke="#fff" stroke-width="1.7" stroke-linejoin="round" paint-order="stroke">93.7</text></g>
</svg></section>
</main>
</body></html>
